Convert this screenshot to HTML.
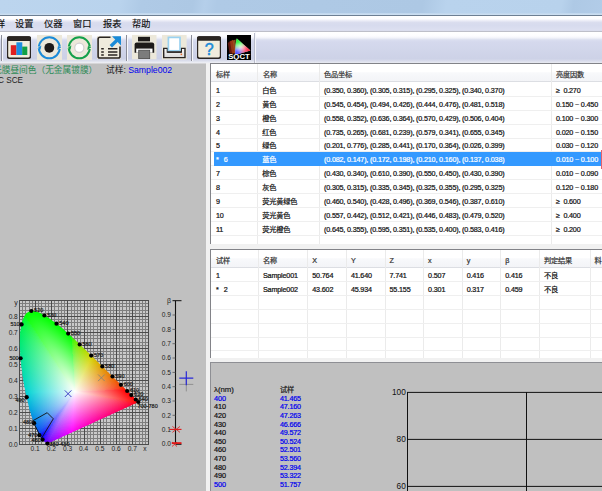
<!DOCTYPE html>
<html><head><meta charset="utf-8"><title>SQCT</title>
<style>
*{margin:0;padding:0;box-sizing:border-box}
html,body{width:602px;height:491px;overflow:hidden;background:#c0c0c0}
body{position:relative;font-family:"Liberation Sans","Noto Sans CJK SC",sans-serif;font-size:9px;color:#111;line-height:1}
.abs{position:absolute}
#title{left:0;top:0;width:602px;height:15px;background:linear-gradient(100deg,#bcd5ee 0%,#b9d3ed 20%,#afcae6 23.5%,#adc8e4 32%,#b5cfea 34%,#afcae6 36%,#adc8e4 70%,#b9d3ed 74%,#b8d2ec 93%,#aec9e5 95%,#b2cce8 100%)}
#title:after{content:"";position:absolute;left:0;right:0;top:13px;height:2px;background:linear-gradient(#bdd5ed,#cfe0f2)}
#edge{left:0;top:15px;width:602px;height:1px;background:#6d7f93}
#menu{left:0;top:16px;width:602px;height:16px;background:linear-gradient(#ffffff 0%,#fdfdff 18%,#e6e8f4 32%,#d9dcee 42%,#d7dbee 60%,#dde0f1 90%,#bdbec8 97%,#bdbec8 100%)}
#menu span{position:absolute;top:2px;-webkit-text-stroke:0.15px currentColor;font-size:9.2px;line-height:12px;color:#111;white-space:nowrap}
#tool{left:0;top:32px;width:602px;height:31px;background:linear-gradient(#ffffff 0%,#fcfcff 13%,#f2f3fa 19%,#dbdff0 25%,#d5d9ed 32%,#cdd2e7 86%,#d8dbeb 93%,#e8eaf1 100%)}
#toolL{left:0;top:32px;width:256px;height:31px;background:linear-gradient(#ffffff 0%,#fbfbfe 13%,#f0f1f9 19%,#d9ddef 25%,#d3d7ec 32%,#cbd0e6 86%,#dcdfec 93%,#f0f1f6 100%);border-right:1px solid #f4f5fb}
#toolL:after{content:"";position:absolute;right:0;top:1px;bottom:0;width:1px;background:#b9bccb}
.sep{width:1px;background:#8a8c98;top:35px;height:26px}
.sep:after{content:"";position:absolute;left:1px;top:0;width:1px;height:100%;background:#f7f8fc}
.ico{top:36px;width:24px;height:24px}
#left{left:0;top:63px;width:206px;height:428px;background:#c0c0c0}
#gap{left:206px;top:63px;width:396px;height:428px;background:#f1f1f1}
.tbl{background:#fff;border-top:1px solid #828388;border-left:1px solid #828388;overflow:hidden}
.tbl .hd{position:absolute;left:0;right:0;top:0;height:18px;background:linear-gradient(#ffffff 0%,#ffffff 45%,#f8f9fb 52%,#f3f4f7 100%);border-bottom:1px solid #dcdee3}
.tbl .r{position:absolute;left:3px;right:0;height:14px;border-bottom:1px solid #efefef}
.tbl .r:before{content:"";position:absolute;left:-3px;width:3px;bottom:-1px;height:1px;background:#efefef}
.tbl .r.sel{background:#3399ff;color:#fff;border-bottom-color:#3399ff}
.tbl .c{position:absolute;top:0;height:100%;white-space:nowrap;font-size:7.2px;line-height:15.4px;padding-left:2px;letter-spacing:-0.17px;-webkit-text-stroke:0.22px currentColor}
.tbl .hd .c{line-height:21px;color:#333}
.vl{position:absolute;top:0;bottom:0;width:1px;background:#ebebeb}
.vh{position:absolute;top:0;height:18px;width:1px;background:#dcdde2}
#bot{left:210px;top:362px;width:392px;height:129px;background:#c0c0c0;border-top:1px solid #8e8f94;border-left:1px solid #8e8f94}
.sp{position:absolute;font-size:7.2px;line-height:8.63px;white-space:nowrap;letter-spacing:-0.2px;-webkit-text-stroke:0.22px currentColor}
.sp.w{letter-spacing:0;font-size:7.3px}
.b{color:#0000ee}
</style></head><body>
<div id="title" class="abs"></div>
<div id="edge" class="abs"></div>
<div id="menu" class="abs">
<span style="left:-4px">样</span><span style="left:15px">设置</span><span style="left:44px">仪器</span><span style="left:73px">窗口</span><span style="left:103px">报表</span><span style="left:132px">帮助</span>
</div>
<div id="tool" class="abs"></div>
<div id="toolL" class="abs"></div>
<div class="abs sep" style="left:1px"></div>
<div class="abs sep" style="left:126px"></div>
<div class="abs sep" style="left:191px"></div>

<svg class="abs ico" style="left:7px" viewBox="0 0 24 24"><rect x="0.400" y="1" width="23.200" height="21.200" rx="2.200" fill="#f1ecdd" stroke="#2a2522" stroke-width="1.600"/><path d="M0.400 4.300 V3 Q0.400 1 2.400 1 H21.600 Q23.600 1 23.600 3 V4.300Z" fill="#2a2522" stroke="#2a2522" stroke-width="1.600"/><rect x="3.800" y="9.200" width="5.700" height="9.800" fill="#e02020"/><rect x="9.400" y="6.300" width="5.900" height="12.700" fill="#1c8ee2"/><rect x="15.200" y="10.600" width="5.100" height="8.400" fill="#10a048"/></svg>
<svg class="abs" style="left:37px;top:35px;width:25px;height:25px" viewBox="0 0 25 25"><rect width="25" height="25" fill="#ece8da"/><circle cx="12.300" cy="12.800" r="10.500" fill="none" stroke="#1b8bd8" stroke-width="2"/><path d="M0 11.600h3.400v2.400h-3.400zM21.200 11.600h3.800v2.400h-3.800z" fill="#ece8da"/><path d="M0.300 13.300 L4.400 10.600 L3.600 14.600Z M24.300 12.300 L20.200 15 L21 11Z" fill="#1b8bd8"/><circle cx="12.300" cy="12.800" r="4.900" fill="#1d1a19"/></svg>
<svg class="abs" style="left:67px;top:35px;width:25px;height:25px" viewBox="0 0 25 25"><rect width="25" height="25" fill="#ece8da"/><circle cx="12.300" cy="12.800" r="10.500" fill="none" stroke="#14a04a" stroke-width="2"/><path d="M0 11.600h3.400v2.400h-3.400zM21.200 11.600h3.800v2.400h-3.800z" fill="#ece8da"/><path d="M0.300 13.300 L4.400 10.600 L3.600 14.600Z M24.300 12.300 L20.200 15 L21 11Z" fill="#14a04a"/><circle cx="12.300" cy="12.800" r="4.600" fill="#fff" stroke="#d2d2d2" stroke-width="1.300"/></svg>
<svg class="abs ico" style="left:97px" viewBox="0 0 24 24"><rect x="0" y="0" width="24" height="23" fill="#ece8da"/><path d="M13.500 1.300 H2.900 Q1.100 1.300 1.100 3.100 V20.200 Q1.100 22 2.900 22 H21.200 Q23 22 23 20.200 V10.500" fill="#efebdd" stroke="#2a2522" stroke-width="1.600"/><path d="M13.800 10.300 L20 4.200" stroke="#1b8bd8" stroke-width="3.300"/><path d="M15 0.200 H24 V9.400 Z" fill="#1b8bd8"/><path d="M4.200 12.800h2.600M11 12.800h9.400M4.200 15.900h2.600M11 15.900h9.400M4.200 19h2.600M11 19h9.400" stroke="#2a2522" stroke-width="1.500"/></svg>
<svg class="abs" style="left:132px;top:35px;width:25px;height:25px" viewBox="0 0 25 25"><rect width="24.500" height="24.300" fill="#ece8da"/><rect x="6" y="1.800" width="12" height="4.600" fill="#1d1a19"/><path d="M2.600 9.600 Q2.600 7.600 4.600 7.600 H20.200 Q22.200 7.600 22.200 9.600 V17.700 H2.600Z" fill="#1d1a19"/><rect x="4.200" y="13.600" width="16.300" height="4.100" fill="#fff"/><rect x="6.700" y="15.200" width="11" height="8.400" fill="#7c7c7c" stroke="#4a4a4a" stroke-width="0.800"/></svg>
<svg class="abs" style="left:162px;top:35px;width:25px;height:25px" viewBox="0 0 25 25"><defs><linearGradient id="tr" x1="0" y1="0" x2="0" y2="1"><stop offset="0" stop-color="#fafafa"/><stop offset="1" stop-color="#d9d9d9"/></linearGradient></defs><rect width="24.600" height="24.500" fill="#ece8da"/><path d="M1.700 13.400 H5.400 V17 H19.300 V13.400 H23 V22.600 H1.700Z" fill="url(#tr)" stroke="#2a2522" stroke-width="1.400"/><rect x="6.400" y="2.400" width="11.600" height="13.400" fill="#fff" stroke="#9ad2f0" stroke-width="1.700"/><path d="M5.400 17 H19.300" stroke="#2a2522" stroke-width="1.400"/><rect x="18.600" y="18.600" width="1.500" height="1.500" fill="#e86a28"/></svg>
<svg class="abs ico" style="left:197px" viewBox="0 0 24 24"><rect x="0.400" y="1" width="23.200" height="21.200" rx="2.200" fill="#f1ecdd" stroke="#2a2522" stroke-width="1.600"/><path d="M0.400 4 V3 Q0.400 1 2.400 1 H21.600 Q23.600 1 23.600 3 V4Z" fill="#2a2522" stroke="#2a2522" stroke-width="1.600"/><text x="12.200" y="19.300" text-anchor="middle" font-family="Liberation Sans, sans-serif" font-size="16" fill="#1b8bd8" stroke="#1b8bd8" stroke-width="0.500">?</text></svg>
<svg class="abs" style="left:227px;top:35px;width:24px;height:25px" viewBox="0 0 24 25"><rect width="24" height="25" fill="#000"/><defs><linearGradient id="sqg" gradientUnits="userSpaceOnUse" x1="10" y1="3.500" x2="14.500" y2="17"><stop offset="0" stop-color="#00e818"/><stop offset="0.300" stop-color="#20f030" stop-opacity="0.800"/><stop offset="0.750" stop-color="#60ff60" stop-opacity="0"/></linearGradient><linearGradient id="sqr" gradientUnits="userSpaceOnUse" x1="23.400" y1="15.600" x2="9" y2="12"><stop offset="0" stop-color="#ff1028"/><stop offset="0.300" stop-color="#ff3050" stop-opacity="0.800"/><stop offset="0.750" stop-color="#ff6080" stop-opacity="0"/></linearGradient><linearGradient id="sqb" gradientUnits="userSpaceOnUse" x1="8.200" y1="20" x2="15" y2="8"><stop offset="0" stop-color="#2828ff"/><stop offset="0.300" stop-color="#5050ff" stop-opacity="0.800"/><stop offset="0.750" stop-color="#8080ff" stop-opacity="0"/></linearGradient></defs><path d="M0.800 8 L3.600 5.500 L6 18.500 L2.600 18.500Z" fill="#64180f"/><path d="M3 6.500 L6 4.800 L8 18.500 L5 18.500Z" fill="#963416"/><path d="M5.600 5.500 L8.600 4.500 L9 18.500 L7.600 18.500Z" fill="#b86028" fill-opacity="0.750"/><path d="M9.800 3.400 Q8 10 8.200 19.900 L23.400 15.600 Z" fill="#fff"/><path d="M9.800 3.400 Q8 10 8.200 19.900 L23.400 15.600 Z" fill="url(#sqb)"/><path d="M9.800 3.400 Q8 10 8.200 19.900 L23.400 15.600 Z" fill="url(#sqr)"/><path d="M9.800 3.400 Q8 10 8.200 19.900 L23.400 15.600 Z" fill="url(#sqg)"/><rect x="0" y="19" width="24" height="6" fill="#000" fill-opacity="0.850"/><text x="12" y="23.600" text-anchor="middle" font-family="Liberation Sans, sans-serif" font-weight="bold" font-size="6.600" fill="#fff" textLength="21.600" lengthAdjust="spacingAndGlyphs">SQCT</text></svg>

<div id="left" class="abs"></div><div id="gap" class="abs"></div>
<div class="abs" style="left:0;top:63px;width:206px;height:1px;background:#d6d6d8"></div>
<div class="abs" style="left:-7px;top:65px;font-size:8.7px;line-height:11px;color:#2e8b57;white-space:nowrap;letter-spacing:0px">光膜昼间色（无金属镀膜）</div>
<div class="abs" style="left:106px;top:65px;font-size:8.7px;line-height:11px;white-space:nowrap;color:#222">试样: <span class="b">Sample002</span></div>
<div class="abs" style="left:-2px;top:75px;font-size:8.2px;line-height:11px;white-space:nowrap;color:#222">C SCE</div>
<div class="abs" id="cie" style="left:0px;top:290px;width:206px;height:165px">
<svg class="abs" style="left:0;top:0" width="206" height="165" viewBox="0 0 206 165" shape-rendering="crispEdges"><rect x="19.0" y="10.0" width="130.0" height="145.0" fill="#c9c9c9"/><path d="M22.5 10.0V155.0M25.5 10.0V155.0M29.5 10.0V155.0M32.5 10.0V155.0M38.5 10.0V155.0M41.5 10.0V155.0M45.5 10.0V155.0M48.5 10.0V155.0M54.5 10.0V155.0M58.5 10.0V155.0M61.5 10.0V155.0M64.5 10.0V155.0M71.5 10.0V155.0M74.5 10.0V155.0M77.5 10.0V155.0M80.5 10.0V155.0M87.5 10.0V155.0M90.5 10.0V155.0M93.5 10.0V155.0M97.5 10.0V155.0M103.5 10.0V155.0M106.5 10.0V155.0M110.5 10.0V155.0M113.5 10.0V155.0M119.5 10.0V155.0M122.5 10.0V155.0M126.5 10.0V155.0M129.5 10.0V155.0M135.5 10.0V155.0M139.5 10.0V155.0M142.5 10.0V155.0M145.5 10.0V155.0M19.0 151.5H149.0M19.0 148.5H149.0M19.0 144.5H149.0M19.0 141.5H149.0M19.0 135.5H149.0M19.0 132.5H149.0M19.0 128.5H149.0M19.0 125.5H149.0M19.0 119.5H149.0M19.0 116.5H149.0M19.0 112.5H149.0M19.0 109.5H149.0M19.0 103.5H149.0M19.0 100.5H149.0M19.0 96.5H149.0M19.0 93.5H149.0M19.0 87.5H149.0M19.0 84.5H149.0M19.0 80.5H149.0M19.0 77.5H149.0M19.0 71.5H149.0M19.0 68.5H149.0M19.0 64.5H149.0M19.0 61.5H149.0M19.0 55.5H149.0M19.0 52.5H149.0M19.0 48.5H149.0M19.0 45.5H149.0M19.0 39.5H149.0M19.0 36.5H149.0M19.0 32.5H149.0M19.0 29.5H149.0M19.0 23.5H149.0M19.0 20.5H149.0M19.0 16.5H149.0M19.0 13.5H149.0" stroke="#7e7e7e" stroke-width="1" fill="none"/><path d="M19.5 10.0V155.0M35.5 10.0V155.0M51.5 10.0V155.0M67.5 10.0V155.0M84.5 10.0V155.0M100.5 10.0V155.0M116.5 10.0V155.0M132.5 10.0V155.0M148.5 10.0V155.0M19.0 154.5H149.0M19.0 138.5H149.0M19.0 122.5H149.0M19.0 106.5H149.0M19.0 90.5H149.0M19.0 74.5H149.0M19.0 58.5H149.0M19.0 42.5H149.0M19.0 26.5H149.0M19.0 10.5H149.0" stroke="#4c4c4c" stroke-width="1" fill="none"/></svg>
<svg class="abs" style="left:0;top:0" width="206" height="165" viewBox="0 0 206 165"><defs><clipPath id="lc"><polygon points="47.50,153.60 47.50,153.60 47.49,153.61 47.47,153.61 47.46,153.62 47.44,153.62 47.42,153.63 47.40,153.63 47.37,153.63 47.35,153.63 47.31,153.63 47.28,153.63 47.24,153.63 47.20,153.62 47.15,153.61 47.11,153.60 47.07,153.58 47.02,153.56 46.98,153.54 46.94,153.51 46.89,153.48 46.84,153.44 46.79,153.40 46.73,153.35 46.66,153.30 46.59,153.24 46.51,153.17 46.44,153.10 46.35,153.03 46.26,152.94 46.16,152.86 46.05,152.76 45.93,152.66 45.81,152.55 45.67,152.44 45.53,152.32 45.38,152.19 45.22,152.06 45.05,151.91 44.87,151.75 44.67,151.57 44.45,151.37 44.20,151.14 43.93,150.90 43.66,150.64 43.38,150.38 43.11,150.13 42.86,149.88 42.63,149.65 42.43,149.44 42.25,149.25 42.08,149.07 41.93,148.89 41.77,148.71 41.61,148.50 41.44,148.28 41.25,148.02 41.05,147.73 40.83,147.43 40.61,147.11 40.39,146.77 40.15,146.41 39.91,146.02 39.66,145.60 39.40,145.15 39.14,144.68 38.87,144.18 38.59,143.66 38.30,143.11 38.00,142.53 37.70,141.90 37.38,141.23 37.06,140.51 36.72,139.75 36.37,138.95 36.02,138.11 35.65,137.23 35.28,136.30 34.90,135.32 34.50,134.27 34.09,133.17 33.67,132.01 33.23,130.80 32.77,129.53 32.31,128.21 31.84,126.83 31.37,125.39 30.90,123.87 30.43,122.29 29.96,120.63 29.49,118.90 29.01,117.10 28.54,115.24 28.06,113.32 27.59,111.33 27.12,109.29 26.65,107.20 26.19,105.03 25.73,102.79 25.26,100.47 24.80,98.10 24.35,95.69 23.91,93.25 23.50,90.81 23.11,88.37 22.73,85.91 22.37,83.40 22.02,80.85 21.69,78.30 21.38,75.75 21.10,73.21 20.85,70.71 20.63,68.26 20.44,65.83 20.27,63.42 20.13,61.02 20.02,58.64 19.95,56.30 19.90,54.02 19.90,51.79 19.93,49.63 20.01,47.53 20.12,45.45 20.26,43.43 20.45,41.45 20.66,39.55 20.92,37.73 21.22,36.00 21.55,34.37 21.93,32.83 22.35,31.37 22.82,29.99 23.32,28.69 23.85,27.48 24.41,26.38 25.00,25.37 25.60,24.48 26.23,23.71 26.90,23.05 27.60,22.50 28.32,22.04 29.06,21.67 29.81,21.38 30.57,21.16 31.34,20.99 32.11,20.91 32.90,20.92 33.70,21.01 34.52,21.18 35.34,21.40 36.16,21.65 36.98,21.93 37.80,22.21 38.62,22.51 39.44,22.86 40.27,23.25 41.10,23.66 41.92,24.10 42.75,24.55 43.56,25.01 44.36,25.46 45.15,25.91 45.94,26.37 46.72,26.85 47.49,27.33 48.26,27.82 49.03,28.32 49.79,28.83 50.55,29.34 51.31,29.86 52.06,30.39 52.80,30.93 53.54,31.47 54.28,32.02 55.02,32.58 55.76,33.14 56.50,33.71 57.23,34.29 57.97,34.87 58.70,35.47 59.44,36.06 60.17,36.67 60.90,37.28 61.63,37.89 62.36,38.51 63.05,39.10 63.68,39.64 64.29,40.16 64.90,40.69 65.56,41.28 66.30,41.94 67.16,42.72 68.16,43.63 69.33,44.71 70.65,45.93 72.08,47.27 73.59,48.68 75.15,50.14 76.72,51.61 78.26,53.07 79.74,54.48 81.19,55.86 82.63,57.26 84.08,58.66 85.52,60.06 86.97,61.47 88.40,62.87 89.83,64.26 91.24,65.65 92.66,67.03 94.07,68.41 95.47,69.79 96.87,71.17 98.26,72.54 99.63,73.89 100.99,75.23 102.32,76.54 103.65,77.85 104.97,79.14 106.28,80.43 107.57,81.70 108.84,82.95 110.09,84.17 111.30,85.37 112.48,86.53 113.63,87.66 114.75,88.77 115.85,89.85 116.92,90.90 117.96,91.93 118.97,92.92 119.94,93.88 120.87,94.80 121.77,95.69 122.64,96.54 123.48,97.35 124.28,98.14 125.05,98.89 125.79,99.61 126.49,100.30 127.16,100.96 127.79,101.58 128.38,102.17 128.94,102.72 129.47,103.24 129.97,103.73 130.44,104.20 130.89,104.64 131.32,105.07 131.73,105.48 132.11,105.85 132.47,106.20 132.80,106.52 133.11,106.83 133.41,107.12 133.70,107.40 133.98,107.68 134.25,107.95 134.51,108.20 134.75,108.44 134.97,108.66 135.19,108.88 135.40,109.08 135.59,109.27 135.78,109.46 135.95,109.62 136.10,109.77 136.24,109.91 136.37,110.03 136.50,110.15 136.62,110.28 136.76,110.41 136.91,110.56 137.08,110.73 137.28,110.92 137.48,111.12 137.69,111.32 137.88,111.52 138.06,111.70 138.21,111.84 138.32,111.95"/></clipPath><linearGradient id="w0" gradientUnits="userSpaceOnUse" x1="75.03" y1="101.76" x2="57.33" y2="156.76"><stop offset="0.0" stop-color="#ffffff"/><stop offset="0.1" stop-color="#f1e6ff"/><stop offset="0.2" stop-color="#e2ccff"/><stop offset="0.4" stop-color="#c599ff"/><stop offset="0.6" stop-color="#a866ff"/><stop offset="0.8" stop-color="#8b33ff"/><stop offset="1.0" stop-color="#6e00ff"/></linearGradient><linearGradient id="w1" gradientUnits="userSpaceOnUse" x1="75.03" y1="101.76" x2="37.24" y2="145.07"><stop offset="0.0" stop-color="#ffffff"/><stop offset="0.1" stop-color="#f0e6ff"/><stop offset="0.2" stop-color="#e0ccff"/><stop offset="0.4" stop-color="#c299ff"/><stop offset="0.6" stop-color="#a366ff"/><stop offset="0.8" stop-color="#8533ff"/><stop offset="1.0" stop-color="#6600ff"/></linearGradient><linearGradient id="w2" gradientUnits="userSpaceOnUse" x1="75.03" y1="101.76" x2="37.72" y2="145.69"><stop offset="0.0" stop-color="#ffffff"/><stop offset="0.1" stop-color="#efe6ff"/><stop offset="0.2" stop-color="#dfccff"/><stop offset="0.4" stop-color="#bf99ff"/><stop offset="0.6" stop-color="#9e66ff"/><stop offset="0.8" stop-color="#7e33ff"/><stop offset="1.0" stop-color="#5e00ff"/></linearGradient><linearGradient id="w3" gradientUnits="userSpaceOnUse" x1="75.03" y1="101.76" x2="37.20" y2="145.04"><stop offset="0.0" stop-color="#ffffff"/><stop offset="0.1" stop-color="#eee6ff"/><stop offset="0.2" stop-color="#ddccff"/><stop offset="0.4" stop-color="#bb99ff"/><stop offset="0.6" stop-color="#9966ff"/><stop offset="0.8" stop-color="#7733ff"/><stop offset="1.0" stop-color="#5500ff"/></linearGradient><linearGradient id="w4" gradientUnits="userSpaceOnUse" x1="75.03" y1="101.76" x2="36.47" y2="144.10"><stop offset="0.0" stop-color="#ffffff"/><stop offset="0.1" stop-color="#ede6ff"/><stop offset="0.2" stop-color="#dbccff"/><stop offset="0.4" stop-color="#b699ff"/><stop offset="0.6" stop-color="#9266ff"/><stop offset="0.8" stop-color="#6d33ff"/><stop offset="1.0" stop-color="#4900ff"/></linearGradient><linearGradient id="w5" gradientUnits="userSpaceOnUse" x1="75.03" y1="101.76" x2="35.99" y2="143.47"><stop offset="0.0" stop-color="#ffffff"/><stop offset="0.1" stop-color="#ebe6ff"/><stop offset="0.2" stop-color="#d7ccff"/><stop offset="0.4" stop-color="#b099ff"/><stop offset="0.6" stop-color="#8866ff"/><stop offset="0.8" stop-color="#6033ff"/><stop offset="1.0" stop-color="#3800ff"/></linearGradient><linearGradient id="w6" gradientUnits="userSpaceOnUse" x1="75.03" y1="101.76" x2="34.74" y2="141.69"><stop offset="0.0" stop-color="#ffffff"/><stop offset="0.1" stop-color="#e9e6ff"/><stop offset="0.2" stop-color="#d3ccff"/><stop offset="0.4" stop-color="#a699ff"/><stop offset="0.6" stop-color="#7a66ff"/><stop offset="0.8" stop-color="#4d33ff"/><stop offset="1.0" stop-color="#2100ff"/></linearGradient><linearGradient id="w7" gradientUnits="userSpaceOnUse" x1="75.03" y1="101.76" x2="33.21" y2="139.11"><stop offset="0.0" stop-color="#ffffff"/><stop offset="0.1" stop-color="#e6e6ff"/><stop offset="0.2" stop-color="#ccccff"/><stop offset="0.4" stop-color="#9999ff"/><stop offset="0.6" stop-color="#6666ff"/><stop offset="0.8" stop-color="#3333ff"/><stop offset="1.0" stop-color="#0000ff"/></linearGradient><linearGradient id="w8" gradientUnits="userSpaceOnUse" x1="75.03" y1="101.76" x2="31.29" y2="134.84"><stop offset="0.0" stop-color="#ffffff"/><stop offset="0.1" stop-color="#e6e6ff"/><stop offset="0.2" stop-color="#ccccff"/><stop offset="0.4" stop-color="#9999ff"/><stop offset="0.6" stop-color="#6666ff"/><stop offset="0.8" stop-color="#3333ff"/><stop offset="1.0" stop-color="#0000ff"/></linearGradient><linearGradient id="w9" gradientUnits="userSpaceOnUse" x1="75.03" y1="101.76" x2="30.65" y2="132.92"><stop offset="0.0" stop-color="#ffffff"/><stop offset="0.1" stop-color="#e6e6ff"/><stop offset="0.2" stop-color="#ccccff"/><stop offset="0.4" stop-color="#9999ff"/><stop offset="0.6" stop-color="#6666ff"/><stop offset="0.8" stop-color="#3333ff"/><stop offset="1.0" stop-color="#0000ff"/></linearGradient><linearGradient id="w10" gradientUnits="userSpaceOnUse" x1="75.03" y1="101.76" x2="30.19" y2="131.27"><stop offset="0.0" stop-color="#ffffff"/><stop offset="0.1" stop-color="#e6e6ff"/><stop offset="0.2" stop-color="#ccccff"/><stop offset="0.4" stop-color="#9999ff"/><stop offset="0.6" stop-color="#6666ff"/><stop offset="0.8" stop-color="#3333ff"/><stop offset="1.0" stop-color="#0000ff"/></linearGradient><linearGradient id="w11" gradientUnits="userSpaceOnUse" x1="75.03" y1="101.76" x2="29.76" y2="129.36"><stop offset="0.0" stop-color="#ffffff"/><stop offset="0.1" stop-color="#e6e8ff"/><stop offset="0.2" stop-color="#ccd1fe"/><stop offset="0.4" stop-color="#99a3fd"/><stop offset="0.6" stop-color="#6676fc"/><stop offset="0.8" stop-color="#3348fb"/><stop offset="1.0" stop-color="#001afa"/></linearGradient><linearGradient id="w12" gradientUnits="userSpaceOnUse" x1="75.03" y1="101.76" x2="29.44" y2="127.48"><stop offset="0.0" stop-color="#ffffff"/><stop offset="0.1" stop-color="#e6eafe"/><stop offset="0.2" stop-color="#ccd5fd"/><stop offset="0.4" stop-color="#99aafc"/><stop offset="0.6" stop-color="#6680fa"/><stop offset="0.8" stop-color="#3356f9"/><stop offset="1.0" stop-color="#002bf7"/></linearGradient><linearGradient id="w13" gradientUnits="userSpaceOnUse" x1="75.03" y1="101.76" x2="29.32" y2="126.61"><stop offset="0.0" stop-color="#ffffff"/><stop offset="0.1" stop-color="#e6ebfe"/><stop offset="0.2" stop-color="#ccd7fd"/><stop offset="0.4" stop-color="#99affb"/><stop offset="0.6" stop-color="#6688f9"/><stop offset="0.8" stop-color="#3360f7"/><stop offset="1.0" stop-color="#0038f5"/></linearGradient><linearGradient id="w14" gradientUnits="userSpaceOnUse" x1="75.03" y1="101.76" x2="29.17" y2="125.40"><stop offset="0.0" stop-color="#ffffff"/><stop offset="0.1" stop-color="#e6ecfe"/><stop offset="0.2" stop-color="#ccd9fd"/><stop offset="0.4" stop-color="#99b4fa"/><stop offset="0.6" stop-color="#668ef8"/><stop offset="0.8" stop-color="#3369f5"/><stop offset="1.0" stop-color="#0043f3"/></linearGradient><linearGradient id="w15" gradientUnits="userSpaceOnUse" x1="75.03" y1="101.76" x2="29.03" y2="123.84"><stop offset="0.0" stop-color="#ffffff"/><stop offset="0.1" stop-color="#e6edfe"/><stop offset="0.2" stop-color="#ccdbfc"/><stop offset="0.4" stop-color="#99b8f9"/><stop offset="0.6" stop-color="#6694f7"/><stop offset="0.8" stop-color="#3371f4"/><stop offset="1.0" stop-color="#004df1"/></linearGradient><linearGradient id="w16" gradientUnits="userSpaceOnUse" x1="75.03" y1="101.76" x2="28.94" y2="122.32"><stop offset="0.0" stop-color="#ffffff"/><stop offset="0.1" stop-color="#e6eefd"/><stop offset="0.2" stop-color="#ccddfc"/><stop offset="0.4" stop-color="#99bcf9"/><stop offset="0.6" stop-color="#669af6"/><stop offset="0.8" stop-color="#3378f2"/><stop offset="1.0" stop-color="#0057ef"/></linearGradient><linearGradient id="w17" gradientUnits="userSpaceOnUse" x1="75.03" y1="101.76" x2="28.91" y2="121.69"><stop offset="0.0" stop-color="#ffffff"/><stop offset="0.1" stop-color="#e6effd"/><stop offset="0.2" stop-color="#ccdffc"/><stop offset="0.4" stop-color="#99bef8"/><stop offset="0.6" stop-color="#669ef5"/><stop offset="0.8" stop-color="#337ef1"/><stop offset="1.0" stop-color="#005eee"/></linearGradient><linearGradient id="w18" gradientUnits="userSpaceOnUse" x1="75.03" y1="101.76" x2="28.90" y2="121.28"><stop offset="0.0" stop-color="#ffffff"/><stop offset="0.1" stop-color="#e6effd"/><stop offset="0.2" stop-color="#cce0fb"/><stop offset="0.4" stop-color="#99c0f8"/><stop offset="0.6" stop-color="#66a1f4"/><stop offset="0.8" stop-color="#3381f1"/><stop offset="1.0" stop-color="#0062ed"/></linearGradient><linearGradient id="w19" gradientUnits="userSpaceOnUse" x1="75.03" y1="101.76" x2="28.88" y2="120.83"><stop offset="0.0" stop-color="#ffffff"/><stop offset="0.1" stop-color="#e6f0fd"/><stop offset="0.2" stop-color="#cce1fb"/><stop offset="0.4" stop-color="#99c2f7"/><stop offset="0.6" stop-color="#66a4f4"/><stop offset="0.8" stop-color="#3385f0"/><stop offset="1.0" stop-color="#0067ec"/></linearGradient><linearGradient id="w20" gradientUnits="userSpaceOnUse" x1="75.03" y1="101.76" x2="28.86" y2="120.35"><stop offset="0.0" stop-color="#ffffff"/><stop offset="0.1" stop-color="#e6f0fd"/><stop offset="0.2" stop-color="#cce1fb"/><stop offset="0.4" stop-color="#99c4f7"/><stop offset="0.6" stop-color="#66a6f3"/><stop offset="0.8" stop-color="#3389ef"/><stop offset="1.0" stop-color="#006beb"/></linearGradient><linearGradient id="w21" gradientUnits="userSpaceOnUse" x1="75.03" y1="101.76" x2="28.84" y2="119.85"><stop offset="0.0" stop-color="#ffffff"/><stop offset="0.1" stop-color="#e6f1fd"/><stop offset="0.2" stop-color="#cce2fb"/><stop offset="0.4" stop-color="#99c6f7"/><stop offset="0.6" stop-color="#66a9f3"/><stop offset="0.8" stop-color="#338cef"/><stop offset="1.0" stop-color="#006fea"/></linearGradient><linearGradient id="w22" gradientUnits="userSpaceOnUse" x1="75.03" y1="101.76" x2="28.82" y2="119.34"><stop offset="0.0" stop-color="#ffffff"/><stop offset="0.1" stop-color="#e6f1fd"/><stop offset="0.2" stop-color="#cce3fb"/><stop offset="0.4" stop-color="#99c7f6"/><stop offset="0.6" stop-color="#66acf2"/><stop offset="0.8" stop-color="#3390ee"/><stop offset="1.0" stop-color="#0074e9"/></linearGradient><linearGradient id="w23" gradientUnits="userSpaceOnUse" x1="75.03" y1="101.76" x2="28.80" y2="118.82"><stop offset="0.0" stop-color="#ffffff"/><stop offset="0.1" stop-color="#e6f2fd"/><stop offset="0.2" stop-color="#cce4fb"/><stop offset="0.4" stop-color="#99c9f6"/><stop offset="0.6" stop-color="#66aef2"/><stop offset="0.8" stop-color="#3393ed"/><stop offset="1.0" stop-color="#0078e9"/></linearGradient><linearGradient id="w24" gradientUnits="userSpaceOnUse" x1="75.03" y1="101.76" x2="28.79" y2="118.61"><stop offset="0.0" stop-color="#ffffff"/><stop offset="0.1" stop-color="#e6f2fd"/><stop offset="0.2" stop-color="#cce5fa"/><stop offset="0.4" stop-color="#99cbf6"/><stop offset="0.6" stop-color="#66b1f1"/><stop offset="0.8" stop-color="#3397ec"/><stop offset="1.0" stop-color="#007de8"/></linearGradient><linearGradient id="w25" gradientUnits="userSpaceOnUse" x1="75.03" y1="101.76" x2="28.78" y2="118.57"><stop offset="0.0" stop-color="#ffffff"/><stop offset="0.1" stop-color="#e6f2fd"/><stop offset="0.2" stop-color="#cce6fa"/><stop offset="0.4" stop-color="#99cdf5"/><stop offset="0.6" stop-color="#66b4f0"/><stop offset="0.8" stop-color="#339bec"/><stop offset="1.0" stop-color="#0081e7"/></linearGradient><linearGradient id="w26" gradientUnits="userSpaceOnUse" x1="75.03" y1="101.76" x2="28.76" y2="118.36"><stop offset="0.0" stop-color="#ffffff"/><stop offset="0.1" stop-color="#e6f3fc"/><stop offset="0.2" stop-color="#cce7fa"/><stop offset="0.4" stop-color="#99cff5"/><stop offset="0.6" stop-color="#66b6f0"/><stop offset="0.8" stop-color="#339eeb"/><stop offset="1.0" stop-color="#0086e6"/></linearGradient><linearGradient id="w27" gradientUnits="userSpaceOnUse" x1="75.03" y1="101.76" x2="28.73" y2="118.00"><stop offset="0.0" stop-color="#ffffff"/><stop offset="0.1" stop-color="#e6f3fc"/><stop offset="0.2" stop-color="#cce8fa"/><stop offset="0.4" stop-color="#99d0f5"/><stop offset="0.6" stop-color="#66b9ef"/><stop offset="0.8" stop-color="#33a2ea"/><stop offset="1.0" stop-color="#008be5"/></linearGradient><linearGradient id="w28" gradientUnits="userSpaceOnUse" x1="75.03" y1="101.76" x2="28.68" y2="117.52"><stop offset="0.0" stop-color="#ffffff"/><stop offset="0.1" stop-color="#e6f4fc"/><stop offset="0.2" stop-color="#cce9fa"/><stop offset="0.4" stop-color="#99d2f4"/><stop offset="0.6" stop-color="#66bcef"/><stop offset="0.8" stop-color="#33a5e9"/><stop offset="1.0" stop-color="#008fe4"/></linearGradient><linearGradient id="w29" gradientUnits="userSpaceOnUse" x1="75.03" y1="101.76" x2="28.61" y2="116.93"><stop offset="0.0" stop-color="#ffffff"/><stop offset="0.1" stop-color="#e6f4fc"/><stop offset="0.2" stop-color="#cceaf9"/><stop offset="0.4" stop-color="#99d4f4"/><stop offset="0.6" stop-color="#66bfee"/><stop offset="0.8" stop-color="#33a9e8"/><stop offset="1.0" stop-color="#0094e3"/></linearGradient><linearGradient id="w30" gradientUnits="userSpaceOnUse" x1="75.03" y1="101.76" x2="28.52" y2="116.26"><stop offset="0.0" stop-color="#ffffff"/><stop offset="0.1" stop-color="#e6f5fc"/><stop offset="0.2" stop-color="#cceaf9"/><stop offset="0.4" stop-color="#99d6f3"/><stop offset="0.6" stop-color="#66c1ed"/><stop offset="0.8" stop-color="#33ade8"/><stop offset="1.0" stop-color="#0098e2"/></linearGradient><linearGradient id="w31" gradientUnits="userSpaceOnUse" x1="75.03" y1="101.76" x2="28.43" y2="115.51"><stop offset="0.0" stop-color="#ffffff"/><stop offset="0.1" stop-color="#e6f5fc"/><stop offset="0.2" stop-color="#ccebf9"/><stop offset="0.4" stop-color="#99d7f3"/><stop offset="0.6" stop-color="#66c3ed"/><stop offset="0.8" stop-color="#33b0e7"/><stop offset="1.0" stop-color="#009ce1"/></linearGradient><linearGradient id="w32" gradientUnits="userSpaceOnUse" x1="75.03" y1="101.76" x2="28.43" y2="115.51"><stop offset="0.0" stop-color="#ffffff"/><stop offset="0.1" stop-color="#e6f5fc"/><stop offset="0.2" stop-color="#ccecf9"/><stop offset="0.4" stop-color="#99d8f3"/><stop offset="0.6" stop-color="#66c5ed"/><stop offset="0.8" stop-color="#33b1e7"/><stop offset="1.0" stop-color="#009ee0"/></linearGradient><linearGradient id="w33" gradientUnits="userSpaceOnUse" x1="75.03" y1="101.76" x2="28.35" y2="114.93"><stop offset="0.0" stop-color="#ffffff"/><stop offset="0.1" stop-color="#e6f6fc"/><stop offset="0.2" stop-color="#ccecf9"/><stop offset="0.4" stop-color="#99d9f3"/><stop offset="0.6" stop-color="#66c6ec"/><stop offset="0.8" stop-color="#33b3e6"/><stop offset="1.0" stop-color="#00a0e0"/></linearGradient><linearGradient id="w34" gradientUnits="userSpaceOnUse" x1="75.03" y1="101.76" x2="28.35" y2="114.93"><stop offset="0.0" stop-color="#ffffff"/><stop offset="0.1" stop-color="#e6f6fc"/><stop offset="0.2" stop-color="#ccedf9"/><stop offset="0.4" stop-color="#99daf2"/><stop offset="0.6" stop-color="#66c8ec"/><stop offset="0.8" stop-color="#33b5e6"/><stop offset="1.0" stop-color="#00a3df"/></linearGradient><linearGradient id="w35" gradientUnits="userSpaceOnUse" x1="75.03" y1="101.76" x2="28.30" y2="114.54"><stop offset="0.0" stop-color="#ffffff"/><stop offset="0.1" stop-color="#e6f6fc"/><stop offset="0.2" stop-color="#ccedf9"/><stop offset="0.4" stop-color="#99dbf2"/><stop offset="0.6" stop-color="#66c9ec"/><stop offset="0.8" stop-color="#33b7e5"/><stop offset="1.0" stop-color="#00a5df"/></linearGradient><linearGradient id="w36" gradientUnits="userSpaceOnUse" x1="75.03" y1="101.76" x2="28.30" y2="114.54"><stop offset="0.0" stop-color="#ffffff"/><stop offset="0.1" stop-color="#e6f6fc"/><stop offset="0.2" stop-color="#cceef8"/><stop offset="0.4" stop-color="#99dcf2"/><stop offset="0.6" stop-color="#66cbeb"/><stop offset="0.8" stop-color="#33b9e5"/><stop offset="1.0" stop-color="#00a8de"/></linearGradient><linearGradient id="w37" gradientUnits="userSpaceOnUse" x1="75.03" y1="101.76" x2="28.23" y2="114.16"><stop offset="0.0" stop-color="#ffffff"/><stop offset="0.1" stop-color="#e6f7fc"/><stop offset="0.2" stop-color="#cceef8"/><stop offset="0.4" stop-color="#99ddf2"/><stop offset="0.6" stop-color="#66cceb"/><stop offset="0.8" stop-color="#33bbe4"/><stop offset="1.0" stop-color="#00aade"/></linearGradient><linearGradient id="w38" gradientUnits="userSpaceOnUse" x1="75.03" y1="101.76" x2="28.23" y2="114.16"><stop offset="0.0" stop-color="#ffffff"/><stop offset="0.1" stop-color="#e6f7fc"/><stop offset="0.2" stop-color="#cceff8"/><stop offset="0.4" stop-color="#99def1"/><stop offset="0.6" stop-color="#66ceeb"/><stop offset="0.8" stop-color="#33bde4"/><stop offset="1.0" stop-color="#00addd"/></linearGradient><linearGradient id="w39" gradientUnits="userSpaceOnUse" x1="75.03" y1="101.76" x2="28.16" y2="113.77"><stop offset="0.0" stop-color="#ffffff"/><stop offset="0.1" stop-color="#e6f7fc"/><stop offset="0.2" stop-color="#cceff8"/><stop offset="0.4" stop-color="#99dff1"/><stop offset="0.6" stop-color="#66cfea"/><stop offset="0.8" stop-color="#33bfe3"/><stop offset="1.0" stop-color="#00afdd"/></linearGradient><linearGradient id="w40" gradientUnits="userSpaceOnUse" x1="75.03" y1="101.76" x2="28.16" y2="113.77"><stop offset="0.0" stop-color="#ffffff"/><stop offset="0.1" stop-color="#e6f7fc"/><stop offset="0.2" stop-color="#cceff8"/><stop offset="0.4" stop-color="#99e0f1"/><stop offset="0.6" stop-color="#66d0ea"/><stop offset="0.8" stop-color="#33c1e3"/><stop offset="1.0" stop-color="#00b1dc"/></linearGradient><linearGradient id="w41" gradientUnits="userSpaceOnUse" x1="75.03" y1="101.76" x2="28.08" y2="113.39"><stop offset="0.0" stop-color="#ffffff"/><stop offset="0.1" stop-color="#e6f7fb"/><stop offset="0.2" stop-color="#ccf0f8"/><stop offset="0.4" stop-color="#99e1f1"/><stop offset="0.6" stop-color="#66d2ea"/><stop offset="0.8" stop-color="#33c3e3"/><stop offset="1.0" stop-color="#00b4db"/></linearGradient><linearGradient id="w42" gradientUnits="userSpaceOnUse" x1="75.03" y1="101.76" x2="28.08" y2="113.39"><stop offset="0.0" stop-color="#ffffff"/><stop offset="0.1" stop-color="#e6f8fb"/><stop offset="0.2" stop-color="#ccf0f8"/><stop offset="0.4" stop-color="#99e2f1"/><stop offset="0.6" stop-color="#66d3e9"/><stop offset="0.8" stop-color="#33c5e2"/><stop offset="1.0" stop-color="#00b6db"/></linearGradient><linearGradient id="w43" gradientUnits="userSpaceOnUse" x1="75.03" y1="101.76" x2="27.98" y2="112.99"><stop offset="0.0" stop-color="#ffffff"/><stop offset="0.1" stop-color="#e6f8fb"/><stop offset="0.2" stop-color="#ccf1f8"/><stop offset="0.4" stop-color="#99e3f0"/><stop offset="0.6" stop-color="#66d5e9"/><stop offset="0.8" stop-color="#33c7e2"/><stop offset="1.0" stop-color="#00b9da"/></linearGradient><linearGradient id="w44" gradientUnits="userSpaceOnUse" x1="75.03" y1="101.76" x2="27.98" y2="112.99"><stop offset="0.0" stop-color="#ffffff"/><stop offset="0.1" stop-color="#e6f8fb"/><stop offset="0.2" stop-color="#ccf1f8"/><stop offset="0.4" stop-color="#99e4f0"/><stop offset="0.6" stop-color="#66d6e9"/><stop offset="0.8" stop-color="#33c9e1"/><stop offset="1.0" stop-color="#00bbda"/></linearGradient><linearGradient id="w45" gradientUnits="userSpaceOnUse" x1="75.03" y1="101.76" x2="27.87" y2="112.59"><stop offset="0.0" stop-color="#ffffff"/><stop offset="0.1" stop-color="#e6f8fb"/><stop offset="0.2" stop-color="#ccf2f7"/><stop offset="0.4" stop-color="#99e5f0"/><stop offset="0.6" stop-color="#66d8e8"/><stop offset="0.8" stop-color="#33cbe1"/><stop offset="1.0" stop-color="#00bed9"/></linearGradient><linearGradient id="w46" gradientUnits="userSpaceOnUse" x1="75.03" y1="101.76" x2="27.87" y2="112.59"><stop offset="0.0" stop-color="#ffffff"/><stop offset="0.1" stop-color="#e6f9fb"/><stop offset="0.2" stop-color="#ccf3f7"/><stop offset="0.4" stop-color="#99e6f0"/><stop offset="0.6" stop-color="#66dae8"/><stop offset="0.8" stop-color="#33cde0"/><stop offset="1.0" stop-color="#00c1d8"/></linearGradient><linearGradient id="w47" gradientUnits="userSpaceOnUse" x1="75.03" y1="101.76" x2="27.75" y2="112.18"><stop offset="0.0" stop-color="#ffffff"/><stop offset="0.1" stop-color="#e6f9fb"/><stop offset="0.2" stop-color="#ccf3f7"/><stop offset="0.4" stop-color="#99e7ef"/><stop offset="0.6" stop-color="#66dbe7"/><stop offset="0.8" stop-color="#33cfe0"/><stop offset="1.0" stop-color="#00c3d8"/></linearGradient><linearGradient id="w48" gradientUnits="userSpaceOnUse" x1="75.03" y1="101.76" x2="27.75" y2="112.18"><stop offset="0.0" stop-color="#ffffff"/><stop offset="0.1" stop-color="#e6f9fb"/><stop offset="0.2" stop-color="#ccf4f7"/><stop offset="0.4" stop-color="#99e8ef"/><stop offset="0.6" stop-color="#66dde7"/><stop offset="0.8" stop-color="#33d1df"/><stop offset="1.0" stop-color="#00c6d7"/></linearGradient><linearGradient id="w49" gradientUnits="userSpaceOnUse" x1="75.03" y1="101.76" x2="27.65" y2="111.86"><stop offset="0.0" stop-color="#ffffff"/><stop offset="0.1" stop-color="#e6fafb"/><stop offset="0.2" stop-color="#ccf4f7"/><stop offset="0.4" stop-color="#99e9ef"/><stop offset="0.6" stop-color="#66dee7"/><stop offset="0.8" stop-color="#33d3df"/><stop offset="1.0" stop-color="#00c8d7"/></linearGradient><linearGradient id="w50" gradientUnits="userSpaceOnUse" x1="75.03" y1="101.76" x2="27.65" y2="111.86"><stop offset="0.0" stop-color="#ffffff"/><stop offset="0.1" stop-color="#e6fafb"/><stop offset="0.2" stop-color="#ccf5f7"/><stop offset="0.4" stop-color="#99eaef"/><stop offset="0.6" stop-color="#66e0e6"/><stop offset="0.8" stop-color="#33d5de"/><stop offset="1.0" stop-color="#00cbd6"/></linearGradient><linearGradient id="w51" gradientUnits="userSpaceOnUse" x1="75.03" y1="101.76" x2="27.56" y2="111.60"><stop offset="0.0" stop-color="#ffffff"/><stop offset="0.1" stop-color="#e6fafb"/><stop offset="0.2" stop-color="#ccf5f7"/><stop offset="0.4" stop-color="#99ebee"/><stop offset="0.6" stop-color="#66e1e6"/><stop offset="0.8" stop-color="#33d7de"/><stop offset="1.0" stop-color="#00cdd5"/></linearGradient><linearGradient id="w52" gradientUnits="userSpaceOnUse" x1="75.03" y1="101.76" x2="27.56" y2="111.60"><stop offset="0.0" stop-color="#ffffff"/><stop offset="0.1" stop-color="#e6fafb"/><stop offset="0.2" stop-color="#ccf6f7"/><stop offset="0.4" stop-color="#99ecee"/><stop offset="0.6" stop-color="#66e3e6"/><stop offset="0.8" stop-color="#33dadd"/><stop offset="1.0" stop-color="#00d0d5"/></linearGradient><linearGradient id="w53" gradientUnits="userSpaceOnUse" x1="75.03" y1="101.76" x2="27.45" y2="111.33"><stop offset="0.0" stop-color="#ffffff"/><stop offset="0.1" stop-color="#e6fbfb"/><stop offset="0.2" stop-color="#ccf6f6"/><stop offset="0.4" stop-color="#99edee"/><stop offset="0.6" stop-color="#66e5e5"/><stop offset="0.8" stop-color="#33dcdc"/><stop offset="1.0" stop-color="#00d3d4"/></linearGradient><linearGradient id="w54" gradientUnits="userSpaceOnUse" x1="75.03" y1="101.76" x2="27.45" y2="111.33"><stop offset="0.0" stop-color="#ffffff"/><stop offset="0.1" stop-color="#e6fbfa"/><stop offset="0.2" stop-color="#ccf6f6"/><stop offset="0.4" stop-color="#99eeed"/><stop offset="0.6" stop-color="#66e5e4"/><stop offset="0.8" stop-color="#33dddb"/><stop offset="1.0" stop-color="#00d4d2"/></linearGradient><linearGradient id="w55" gradientUnits="userSpaceOnUse" x1="75.03" y1="101.76" x2="27.32" y2="111.04"><stop offset="0.0" stop-color="#ffffff"/><stop offset="0.1" stop-color="#e6fbfa"/><stop offset="0.2" stop-color="#ccf7f5"/><stop offset="0.4" stop-color="#99eeec"/><stop offset="0.6" stop-color="#66e6e2"/><stop offset="0.8" stop-color="#33ddd9"/><stop offset="1.0" stop-color="#00d5cf"/></linearGradient><linearGradient id="w56" gradientUnits="userSpaceOnUse" x1="75.03" y1="101.76" x2="27.32" y2="111.04"><stop offset="0.0" stop-color="#ffffff"/><stop offset="0.1" stop-color="#e6fbfa"/><stop offset="0.2" stop-color="#ccf7f5"/><stop offset="0.4" stop-color="#99eeeb"/><stop offset="0.6" stop-color="#66e6e1"/><stop offset="0.8" stop-color="#33ded6"/><stop offset="1.0" stop-color="#00d6cc"/></linearGradient><linearGradient id="w57" gradientUnits="userSpaceOnUse" x1="75.03" y1="101.76" x2="27.16" y2="110.71"><stop offset="0.0" stop-color="#ffffff"/><stop offset="0.1" stop-color="#e6fbfa"/><stop offset="0.2" stop-color="#ccf7f4"/><stop offset="0.4" stop-color="#99efea"/><stop offset="0.6" stop-color="#66e7df"/><stop offset="0.8" stop-color="#33ded4"/><stop offset="1.0" stop-color="#00d6ca"/></linearGradient><linearGradient id="w58" gradientUnits="userSpaceOnUse" x1="75.03" y1="101.76" x2="27.16" y2="110.71"><stop offset="0.0" stop-color="#ffffff"/><stop offset="0.1" stop-color="#e6fbf9"/><stop offset="0.2" stop-color="#ccf7f4"/><stop offset="0.4" stop-color="#99efe9"/><stop offset="0.6" stop-color="#66e7dd"/><stop offset="0.8" stop-color="#33dfd2"/><stop offset="1.0" stop-color="#00d7c7"/></linearGradient><linearGradient id="w59" gradientUnits="userSpaceOnUse" x1="75.03" y1="101.76" x2="26.97" y2="110.36"><stop offset="0.0" stop-color="#ffffff"/><stop offset="0.1" stop-color="#e6fbf9"/><stop offset="0.2" stop-color="#ccf7f3"/><stop offset="0.4" stop-color="#99efe8"/><stop offset="0.6" stop-color="#66e7dc"/><stop offset="0.8" stop-color="#33dfd0"/><stop offset="1.0" stop-color="#00d8c4"/></linearGradient><linearGradient id="w60" gradientUnits="userSpaceOnUse" x1="75.03" y1="101.76" x2="26.97" y2="110.36"><stop offset="0.0" stop-color="#ffffff"/><stop offset="0.1" stop-color="#e6fbf9"/><stop offset="0.2" stop-color="#ccf7f3"/><stop offset="0.4" stop-color="#99efe6"/><stop offset="0.6" stop-color="#66e8da"/><stop offset="0.8" stop-color="#33e0ce"/><stop offset="1.0" stop-color="#00d8c2"/></linearGradient><linearGradient id="w61" gradientUnits="userSpaceOnUse" x1="75.03" y1="101.76" x2="26.76" y2="109.97"><stop offset="0.0" stop-color="#ffffff"/><stop offset="0.1" stop-color="#e6fbf9"/><stop offset="0.2" stop-color="#ccf7f2"/><stop offset="0.4" stop-color="#99f0e5"/><stop offset="0.6" stop-color="#66e8d9"/><stop offset="0.8" stop-color="#33e0cc"/><stop offset="1.0" stop-color="#00d9bf"/></linearGradient><linearGradient id="w62" gradientUnits="userSpaceOnUse" x1="75.03" y1="101.76" x2="26.76" y2="109.97"><stop offset="0.0" stop-color="#ffffff"/><stop offset="0.1" stop-color="#e6fbf8"/><stop offset="0.2" stop-color="#ccf7f2"/><stop offset="0.4" stop-color="#99f0e4"/><stop offset="0.6" stop-color="#66e8d7"/><stop offset="0.8" stop-color="#33e1ca"/><stop offset="1.0" stop-color="#00d9bd"/></linearGradient><linearGradient id="w63" gradientUnits="userSpaceOnUse" x1="75.03" y1="101.76" x2="26.49" y2="109.53"><stop offset="0.0" stop-color="#ffffff"/><stop offset="0.1" stop-color="#e6fbf8"/><stop offset="0.2" stop-color="#ccf8f1"/><stop offset="0.4" stop-color="#99f0e3"/><stop offset="0.6" stop-color="#66e9d6"/><stop offset="0.8" stop-color="#33e1c8"/><stop offset="1.0" stop-color="#00daba"/></linearGradient><linearGradient id="w64" gradientUnits="userSpaceOnUse" x1="75.03" y1="101.76" x2="26.49" y2="109.53"><stop offset="0.0" stop-color="#ffffff"/><stop offset="0.1" stop-color="#e6fbf8"/><stop offset="0.2" stop-color="#ccf8f1"/><stop offset="0.4" stop-color="#99f0e2"/><stop offset="0.6" stop-color="#66e9d4"/><stop offset="0.8" stop-color="#33e2c6"/><stop offset="1.0" stop-color="#00dbb8"/></linearGradient><linearGradient id="w65" gradientUnits="userSpaceOnUse" x1="75.03" y1="101.76" x2="26.26" y2="109.15"><stop offset="0.0" stop-color="#ffffff"/><stop offset="0.1" stop-color="#e6fbf8"/><stop offset="0.2" stop-color="#ccf8f0"/><stop offset="0.4" stop-color="#99f1e1"/><stop offset="0.6" stop-color="#66e9d3"/><stop offset="0.8" stop-color="#33e2c4"/><stop offset="1.0" stop-color="#00dbb5"/></linearGradient><linearGradient id="w66" gradientUnits="userSpaceOnUse" x1="75.03" y1="101.76" x2="26.26" y2="109.15"><stop offset="0.0" stop-color="#ffffff"/><stop offset="0.1" stop-color="#e6fbf7"/><stop offset="0.2" stop-color="#ccf8f0"/><stop offset="0.4" stop-color="#99f1e1"/><stop offset="0.6" stop-color="#66ead1"/><stop offset="0.8" stop-color="#33e3c2"/><stop offset="1.0" stop-color="#00dcb3"/></linearGradient><linearGradient id="w67" gradientUnits="userSpaceOnUse" x1="75.03" y1="101.76" x2="26.06" y2="108.85"><stop offset="0.0" stop-color="#ffffff"/><stop offset="0.1" stop-color="#e6fcf7"/><stop offset="0.2" stop-color="#ccf8ef"/><stop offset="0.4" stop-color="#99f1e0"/><stop offset="0.6" stop-color="#66ead0"/><stop offset="0.8" stop-color="#33e3c0"/><stop offset="1.0" stop-color="#00dcb0"/></linearGradient><linearGradient id="w68" gradientUnits="userSpaceOnUse" x1="75.03" y1="101.76" x2="26.06" y2="108.85"><stop offset="0.0" stop-color="#ffffff"/><stop offset="0.1" stop-color="#e6fcf7"/><stop offset="0.2" stop-color="#ccf8ef"/><stop offset="0.4" stop-color="#99f1df"/><stop offset="0.6" stop-color="#66ebce"/><stop offset="0.8" stop-color="#33e4be"/><stop offset="1.0" stop-color="#00ddae"/></linearGradient><linearGradient id="w69" gradientUnits="userSpaceOnUse" x1="75.03" y1="101.76" x2="25.83" y2="108.53"><stop offset="0.0" stop-color="#ffffff"/><stop offset="0.1" stop-color="#e6fcf7"/><stop offset="0.2" stop-color="#ccf8ee"/><stop offset="0.4" stop-color="#99f2de"/><stop offset="0.6" stop-color="#66ebcd"/><stop offset="0.8" stop-color="#33e4bc"/><stop offset="1.0" stop-color="#00ddab"/></linearGradient><linearGradient id="w70" gradientUnits="userSpaceOnUse" x1="75.03" y1="101.76" x2="25.83" y2="108.53"><stop offset="0.0" stop-color="#ffffff"/><stop offset="0.1" stop-color="#e6fcf6"/><stop offset="0.2" stop-color="#ccf8ee"/><stop offset="0.4" stop-color="#99f2dd"/><stop offset="0.6" stop-color="#66ebcb"/><stop offset="0.8" stop-color="#33e5ba"/><stop offset="1.0" stop-color="#00dea9"/></linearGradient><linearGradient id="w71" gradientUnits="userSpaceOnUse" x1="75.03" y1="101.76" x2="25.56" y2="108.17"><stop offset="0.0" stop-color="#ffffff"/><stop offset="0.1" stop-color="#e6fcf6"/><stop offset="0.2" stop-color="#ccf9ed"/><stop offset="0.4" stop-color="#99f2dc"/><stop offset="0.6" stop-color="#66ecca"/><stop offset="0.8" stop-color="#33e5b8"/><stop offset="1.0" stop-color="#00dfa7"/></linearGradient><linearGradient id="w72" gradientUnits="userSpaceOnUse" x1="75.03" y1="101.76" x2="25.56" y2="108.17"><stop offset="0.0" stop-color="#ffffff"/><stop offset="0.1" stop-color="#e6fcf6"/><stop offset="0.2" stop-color="#ccf9ed"/><stop offset="0.4" stop-color="#99f2db"/><stop offset="0.6" stop-color="#66ecc9"/><stop offset="0.8" stop-color="#33e5b6"/><stop offset="1.0" stop-color="#00dfa4"/></linearGradient><linearGradient id="w73" gradientUnits="userSpaceOnUse" x1="75.03" y1="101.76" x2="25.26" y2="107.78"><stop offset="0.0" stop-color="#ffffff"/><stop offset="0.1" stop-color="#e6fcf6"/><stop offset="0.2" stop-color="#ccf9ec"/><stop offset="0.4" stop-color="#99f2da"/><stop offset="0.6" stop-color="#66ecc7"/><stop offset="0.8" stop-color="#33e6b5"/><stop offset="1.0" stop-color="#00e0a2"/></linearGradient><linearGradient id="w74" gradientUnits="userSpaceOnUse" x1="75.03" y1="101.76" x2="25.26" y2="107.78"><stop offset="0.0" stop-color="#ffffff"/><stop offset="0.1" stop-color="#e6fcf5"/><stop offset="0.2" stop-color="#ccf9ec"/><stop offset="0.4" stop-color="#99f3d9"/><stop offset="0.6" stop-color="#66ecc6"/><stop offset="0.8" stop-color="#33e6b3"/><stop offset="1.0" stop-color="#00e0a0"/></linearGradient><linearGradient id="w75" gradientUnits="userSpaceOnUse" x1="75.03" y1="101.76" x2="24.90" y2="107.35"><stop offset="0.0" stop-color="#ffffff"/><stop offset="0.1" stop-color="#e6fcf5"/><stop offset="0.2" stop-color="#ccf9eb"/><stop offset="0.4" stop-color="#99f3d8"/><stop offset="0.6" stop-color="#66edc4"/><stop offset="0.8" stop-color="#33e7b1"/><stop offset="1.0" stop-color="#00e19d"/></linearGradient><linearGradient id="w76" gradientUnits="userSpaceOnUse" x1="75.03" y1="101.76" x2="24.90" y2="107.35"><stop offset="0.0" stop-color="#ffffff"/><stop offset="0.1" stop-color="#e6fcf5"/><stop offset="0.2" stop-color="#ccf9eb"/><stop offset="0.4" stop-color="#99f3d7"/><stop offset="0.6" stop-color="#66edc3"/><stop offset="0.8" stop-color="#33e7af"/><stop offset="1.0" stop-color="#00e19b"/></linearGradient><linearGradient id="w77" gradientUnits="userSpaceOnUse" x1="75.03" y1="101.76" x2="24.49" y2="106.85"><stop offset="0.0" stop-color="#ffffff"/><stop offset="0.1" stop-color="#e6fcf5"/><stop offset="0.2" stop-color="#ccf9eb"/><stop offset="0.4" stop-color="#99f3d6"/><stop offset="0.6" stop-color="#66edc2"/><stop offset="0.8" stop-color="#33e8ad"/><stop offset="1.0" stop-color="#00e299"/></linearGradient><linearGradient id="w78" gradientUnits="userSpaceOnUse" x1="75.03" y1="101.76" x2="24.49" y2="106.85"><stop offset="0.0" stop-color="#ffffff"/><stop offset="0.1" stop-color="#e6fcf5"/><stop offset="0.2" stop-color="#ccf9ea"/><stop offset="0.4" stop-color="#99f3d5"/><stop offset="0.6" stop-color="#66eec0"/><stop offset="0.8" stop-color="#33e8ab"/><stop offset="1.0" stop-color="#00e296"/></linearGradient><linearGradient id="w79" gradientUnits="userSpaceOnUse" x1="75.03" y1="101.76" x2="24.00" y2="106.28"><stop offset="0.0" stop-color="#ffffff"/><stop offset="0.1" stop-color="#e6fcf4"/><stop offset="0.2" stop-color="#ccf9ea"/><stop offset="0.4" stop-color="#99f4d4"/><stop offset="0.6" stop-color="#66eebf"/><stop offset="0.8" stop-color="#33e8a9"/><stop offset="1.0" stop-color="#00e394"/></linearGradient><linearGradient id="w80" gradientUnits="userSpaceOnUse" x1="75.03" y1="101.76" x2="24.00" y2="106.28"><stop offset="0.0" stop-color="#ffffff"/><stop offset="0.1" stop-color="#e6fcf4"/><stop offset="0.2" stop-color="#ccf9e9"/><stop offset="0.4" stop-color="#99f4d3"/><stop offset="0.6" stop-color="#66eebd"/><stop offset="0.8" stop-color="#33e9a8"/><stop offset="1.0" stop-color="#00e392"/></linearGradient><linearGradient id="w81" gradientUnits="userSpaceOnUse" x1="75.03" y1="101.76" x2="23.54" y2="105.76"><stop offset="0.0" stop-color="#ffffff"/><stop offset="0.1" stop-color="#e6fcf4"/><stop offset="0.2" stop-color="#ccfae9"/><stop offset="0.4" stop-color="#99f4d2"/><stop offset="0.6" stop-color="#66efbc"/><stop offset="0.8" stop-color="#33e9a6"/><stop offset="1.0" stop-color="#00e490"/></linearGradient><linearGradient id="w82" gradientUnits="userSpaceOnUse" x1="75.03" y1="101.76" x2="23.54" y2="105.76"><stop offset="0.0" stop-color="#ffffff"/><stop offset="0.1" stop-color="#e6fcf4"/><stop offset="0.2" stop-color="#ccfae8"/><stop offset="0.4" stop-color="#99f4d2"/><stop offset="0.6" stop-color="#66efbb"/><stop offset="0.8" stop-color="#33eaa4"/><stop offset="1.0" stop-color="#00e48d"/></linearGradient><linearGradient id="w83" gradientUnits="userSpaceOnUse" x1="75.03" y1="101.76" x2="23.14" y2="105.31"><stop offset="0.0" stop-color="#ffffff"/><stop offset="0.1" stop-color="#e6fcf3"/><stop offset="0.2" stop-color="#ccfae8"/><stop offset="0.4" stop-color="#99f4d1"/><stop offset="0.6" stop-color="#66efb9"/><stop offset="0.8" stop-color="#33eaa2"/><stop offset="1.0" stop-color="#00e58b"/></linearGradient><linearGradient id="w84" gradientUnits="userSpaceOnUse" x1="75.03" y1="101.76" x2="23.14" y2="105.31"><stop offset="0.0" stop-color="#ffffff"/><stop offset="0.1" stop-color="#e6fcf3"/><stop offset="0.2" stop-color="#ccfae7"/><stop offset="0.4" stop-color="#99f5d0"/><stop offset="0.6" stop-color="#66efb8"/><stop offset="0.8" stop-color="#33eaa1"/><stop offset="1.0" stop-color="#00e589"/></linearGradient><linearGradient id="w85" gradientUnits="userSpaceOnUse" x1="75.03" y1="101.76" x2="22.68" y2="104.81"><stop offset="0.0" stop-color="#ffffff"/><stop offset="0.1" stop-color="#e6fcf3"/><stop offset="0.2" stop-color="#ccfae7"/><stop offset="0.4" stop-color="#99f5cf"/><stop offset="0.6" stop-color="#66f0b7"/><stop offset="0.8" stop-color="#33eb9f"/><stop offset="1.0" stop-color="#00e687"/></linearGradient><linearGradient id="w86" gradientUnits="userSpaceOnUse" x1="75.03" y1="101.76" x2="22.68" y2="104.81"><stop offset="0.0" stop-color="#ffffff"/><stop offset="0.1" stop-color="#e6fdf3"/><stop offset="0.2" stop-color="#ccfae7"/><stop offset="0.4" stop-color="#99f5ce"/><stop offset="0.6" stop-color="#66f0b6"/><stop offset="0.8" stop-color="#33eb9d"/><stop offset="1.0" stop-color="#00e685"/></linearGradient><linearGradient id="w87" gradientUnits="userSpaceOnUse" x1="75.03" y1="101.76" x2="22.15" y2="104.23"><stop offset="0.0" stop-color="#ffffff"/><stop offset="0.1" stop-color="#e6fdf3"/><stop offset="0.2" stop-color="#ccfae6"/><stop offset="0.4" stop-color="#99f5cd"/><stop offset="0.6" stop-color="#66f0b4"/><stop offset="0.8" stop-color="#33eb9b"/><stop offset="1.0" stop-color="#00e682"/></linearGradient><linearGradient id="w88" gradientUnits="userSpaceOnUse" x1="75.03" y1="101.76" x2="22.15" y2="104.23"><stop offset="0.0" stop-color="#ffffff"/><stop offset="0.1" stop-color="#e6fdf2"/><stop offset="0.2" stop-color="#ccfae6"/><stop offset="0.4" stop-color="#99f5cc"/><stop offset="0.6" stop-color="#66f1b3"/><stop offset="0.8" stop-color="#33ec99"/><stop offset="1.0" stop-color="#00e780"/></linearGradient><linearGradient id="w89" gradientUnits="userSpaceOnUse" x1="75.03" y1="101.76" x2="21.54" y2="103.57"><stop offset="0.0" stop-color="#ffffff"/><stop offset="0.1" stop-color="#e6fdf2"/><stop offset="0.2" stop-color="#ccfae5"/><stop offset="0.4" stop-color="#99f6cb"/><stop offset="0.6" stop-color="#66f1b2"/><stop offset="0.8" stop-color="#33ec98"/><stop offset="1.0" stop-color="#00e77e"/></linearGradient><linearGradient id="w90" gradientUnits="userSpaceOnUse" x1="75.03" y1="101.76" x2="21.54" y2="103.57"><stop offset="0.0" stop-color="#ffffff"/><stop offset="0.1" stop-color="#e6fdf2"/><stop offset="0.2" stop-color="#ccfae5"/><stop offset="0.4" stop-color="#99f6ca"/><stop offset="0.6" stop-color="#66f1b0"/><stop offset="0.8" stop-color="#33ed96"/><stop offset="1.0" stop-color="#00e87c"/></linearGradient><linearGradient id="w91" gradientUnits="userSpaceOnUse" x1="75.03" y1="101.76" x2="20.83" y2="102.80"><stop offset="0.0" stop-color="#ffffff"/><stop offset="0.1" stop-color="#e6fdf2"/><stop offset="0.2" stop-color="#ccfae4"/><stop offset="0.4" stop-color="#99f6ca"/><stop offset="0.6" stop-color="#66f1af"/><stop offset="0.8" stop-color="#33ed94"/><stop offset="1.0" stop-color="#00e879"/></linearGradient><linearGradient id="w92" gradientUnits="userSpaceOnUse" x1="75.03" y1="101.76" x2="20.83" y2="102.80"><stop offset="0.0" stop-color="#ffffff"/><stop offset="0.1" stop-color="#e6fdf1"/><stop offset="0.2" stop-color="#ccfbe4"/><stop offset="0.4" stop-color="#99f6c9"/><stop offset="0.6" stop-color="#66f2ae"/><stop offset="0.8" stop-color="#33ed92"/><stop offset="1.0" stop-color="#00e977"/></linearGradient><linearGradient id="w93" gradientUnits="userSpaceOnUse" x1="75.03" y1="101.76" x2="20.02" y2="101.89"><stop offset="0.0" stop-color="#ffffff"/><stop offset="0.1" stop-color="#e6fdf1"/><stop offset="0.2" stop-color="#ccfbe3"/><stop offset="0.4" stop-color="#99f6c8"/><stop offset="0.6" stop-color="#66f2ac"/><stop offset="0.8" stop-color="#33ee91"/><stop offset="1.0" stop-color="#00e975"/></linearGradient><linearGradient id="w94" gradientUnits="userSpaceOnUse" x1="75.03" y1="101.76" x2="20.02" y2="101.89"><stop offset="0.0" stop-color="#ffffff"/><stop offset="0.1" stop-color="#e6fdf1"/><stop offset="0.2" stop-color="#ccfbe3"/><stop offset="0.4" stop-color="#99f6c7"/><stop offset="0.6" stop-color="#66f2ab"/><stop offset="0.8" stop-color="#33ee8f"/><stop offset="1.0" stop-color="#00ea73"/></linearGradient><linearGradient id="w95" gradientUnits="userSpaceOnUse" x1="75.03" y1="101.76" x2="19.08" y2="100.83"><stop offset="0.0" stop-color="#ffffff"/><stop offset="0.1" stop-color="#e6fdf1"/><stop offset="0.2" stop-color="#ccfbe3"/><stop offset="0.4" stop-color="#99f7c6"/><stop offset="0.6" stop-color="#66f2aa"/><stop offset="0.8" stop-color="#33ee8d"/><stop offset="1.0" stop-color="#00ea71"/></linearGradient><linearGradient id="w96" gradientUnits="userSpaceOnUse" x1="75.03" y1="101.76" x2="19.08" y2="100.83"><stop offset="0.0" stop-color="#ffffff"/><stop offset="0.1" stop-color="#e6fdf1"/><stop offset="0.2" stop-color="#ccfbe2"/><stop offset="0.4" stop-color="#99f7c5"/><stop offset="0.6" stop-color="#66f3a8"/><stop offset="0.8" stop-color="#33ef8b"/><stop offset="1.0" stop-color="#00eb6e"/></linearGradient><linearGradient id="w97" gradientUnits="userSpaceOnUse" x1="75.03" y1="101.76" x2="18.15" y2="99.73"><stop offset="0.0" stop-color="#ffffff"/><stop offset="0.1" stop-color="#e6fdf0"/><stop offset="0.2" stop-color="#ccfbe2"/><stop offset="0.4" stop-color="#99f7c4"/><stop offset="0.6" stop-color="#66f3a7"/><stop offset="0.8" stop-color="#33ef8a"/><stop offset="1.0" stop-color="#00eb6c"/></linearGradient><linearGradient id="w98" gradientUnits="userSpaceOnUse" x1="75.03" y1="101.76" x2="18.15" y2="99.73"><stop offset="0.0" stop-color="#ffffff"/><stop offset="0.1" stop-color="#e6fdf0"/><stop offset="0.2" stop-color="#ccfbe1"/><stop offset="0.4" stop-color="#99f7c3"/><stop offset="0.6" stop-color="#66f3a6"/><stop offset="0.8" stop-color="#33ef88"/><stop offset="1.0" stop-color="#00eb6a"/></linearGradient><linearGradient id="w99" gradientUnits="userSpaceOnUse" x1="75.03" y1="101.76" x2="17.29" y2="98.69"><stop offset="0.0" stop-color="#ffffff"/><stop offset="0.1" stop-color="#e6fdf0"/><stop offset="0.2" stop-color="#ccfbe1"/><stop offset="0.4" stop-color="#99f7c3"/><stop offset="0.6" stop-color="#66f4a4"/><stop offset="0.8" stop-color="#33f086"/><stop offset="1.0" stop-color="#00ec68"/></linearGradient><linearGradient id="w100" gradientUnits="userSpaceOnUse" x1="75.03" y1="101.76" x2="17.29" y2="98.69"><stop offset="0.0" stop-color="#ffffff"/><stop offset="0.1" stop-color="#e6fdf0"/><stop offset="0.2" stop-color="#ccfbe0"/><stop offset="0.4" stop-color="#99f8c2"/><stop offset="0.6" stop-color="#66f4a3"/><stop offset="0.8" stop-color="#33f084"/><stop offset="1.0" stop-color="#00ec65"/></linearGradient><linearGradient id="w101" gradientUnits="userSpaceOnUse" x1="75.03" y1="101.76" x2="16.37" y2="97.54"><stop offset="0.0" stop-color="#ffffff"/><stop offset="0.1" stop-color="#e6fdef"/><stop offset="0.2" stop-color="#ccfbe0"/><stop offset="0.4" stop-color="#99f8c1"/><stop offset="0.6" stop-color="#66f4a2"/><stop offset="0.8" stop-color="#33f082"/><stop offset="1.0" stop-color="#00ed63"/></linearGradient><linearGradient id="w102" gradientUnits="userSpaceOnUse" x1="75.03" y1="101.76" x2="16.37" y2="97.54"><stop offset="0.0" stop-color="#ffffff"/><stop offset="0.1" stop-color="#e6fdef"/><stop offset="0.2" stop-color="#ccfbdf"/><stop offset="0.4" stop-color="#99f8c0"/><stop offset="0.6" stop-color="#66f4a0"/><stop offset="0.8" stop-color="#33f181"/><stop offset="1.0" stop-color="#00ed61"/></linearGradient><linearGradient id="w103" gradientUnits="userSpaceOnUse" x1="75.03" y1="101.76" x2="15.38" y2="96.24"><stop offset="0.0" stop-color="#ffffff"/><stop offset="0.1" stop-color="#e6fdef"/><stop offset="0.2" stop-color="#ccfcdf"/><stop offset="0.4" stop-color="#99f8bf"/><stop offset="0.6" stop-color="#66f59f"/><stop offset="0.8" stop-color="#33f17f"/><stop offset="1.0" stop-color="#00ee5f"/></linearGradient><linearGradient id="w104" gradientUnits="userSpaceOnUse" x1="75.03" y1="101.76" x2="15.38" y2="96.24"><stop offset="0.0" stop-color="#ffffff"/><stop offset="0.1" stop-color="#e6fdef"/><stop offset="0.2" stop-color="#ccfcde"/><stop offset="0.4" stop-color="#99f8be"/><stop offset="0.6" stop-color="#66f59d"/><stop offset="0.8" stop-color="#33f27d"/><stop offset="1.0" stop-color="#00ee5c"/></linearGradient><linearGradient id="w105" gradientUnits="userSpaceOnUse" x1="75.03" y1="101.76" x2="14.30" y2="94.76"><stop offset="0.0" stop-color="#ffffff"/><stop offset="0.1" stop-color="#e6fdee"/><stop offset="0.2" stop-color="#ccfcde"/><stop offset="0.4" stop-color="#99f8bd"/><stop offset="0.6" stop-color="#66f59c"/><stop offset="0.8" stop-color="#33f27b"/><stop offset="1.0" stop-color="#00ef5a"/></linearGradient><linearGradient id="w106" gradientUnits="userSpaceOnUse" x1="75.03" y1="101.76" x2="14.30" y2="94.76"><stop offset="0.0" stop-color="#ffffff"/><stop offset="0.1" stop-color="#e6fdee"/><stop offset="0.2" stop-color="#ccfcdd"/><stop offset="0.4" stop-color="#99f9bc"/><stop offset="0.6" stop-color="#66f69a"/><stop offset="0.8" stop-color="#33f279"/><stop offset="1.0" stop-color="#00ef57"/></linearGradient><linearGradient id="w107" gradientUnits="userSpaceOnUse" x1="75.03" y1="101.76" x2="13.12" y2="93.03"><stop offset="0.0" stop-color="#ffffff"/><stop offset="0.1" stop-color="#e6fdee"/><stop offset="0.2" stop-color="#ccfcdd"/><stop offset="0.4" stop-color="#99f9bb"/><stop offset="0.6" stop-color="#66f699"/><stop offset="0.8" stop-color="#33f377"/><stop offset="1.0" stop-color="#00f055"/></linearGradient><linearGradient id="w108" gradientUnits="userSpaceOnUse" x1="75.03" y1="101.76" x2="13.12" y2="93.03"><stop offset="0.0" stop-color="#ffffff"/><stop offset="0.1" stop-color="#e6feee"/><stop offset="0.2" stop-color="#ccfcdc"/><stop offset="0.4" stop-color="#99f9ba"/><stop offset="0.6" stop-color="#66f697"/><stop offset="0.8" stop-color="#33f375"/><stop offset="1.0" stop-color="#00f052"/></linearGradient><linearGradient id="w109" gradientUnits="userSpaceOnUse" x1="75.03" y1="101.76" x2="11.83" y2="90.97"><stop offset="0.0" stop-color="#ffffff"/><stop offset="0.1" stop-color="#e6feed"/><stop offset="0.2" stop-color="#ccfcdc"/><stop offset="0.4" stop-color="#99f9b9"/><stop offset="0.6" stop-color="#66f696"/><stop offset="0.8" stop-color="#33f373"/><stop offset="1.0" stop-color="#00f150"/></linearGradient><linearGradient id="w110" gradientUnits="userSpaceOnUse" x1="75.03" y1="101.76" x2="11.83" y2="90.97"><stop offset="0.0" stop-color="#ffffff"/><stop offset="0.1" stop-color="#e6feed"/><stop offset="0.2" stop-color="#ccfcdb"/><stop offset="0.4" stop-color="#99f9b8"/><stop offset="0.6" stop-color="#66f794"/><stop offset="0.8" stop-color="#33f471"/><stop offset="1.0" stop-color="#00f14d"/></linearGradient><linearGradient id="w111" gradientUnits="userSpaceOnUse" x1="75.03" y1="101.76" x2="10.43" y2="88.48"><stop offset="0.0" stop-color="#ffffff"/><stop offset="0.1" stop-color="#e6feed"/><stop offset="0.2" stop-color="#ccfcdb"/><stop offset="0.4" stop-color="#99fab7"/><stop offset="0.6" stop-color="#66f793"/><stop offset="0.8" stop-color="#33f46f"/><stop offset="1.0" stop-color="#00f24b"/></linearGradient><linearGradient id="w112" gradientUnits="userSpaceOnUse" x1="75.03" y1="101.76" x2="10.43" y2="88.48"><stop offset="0.0" stop-color="#ffffff"/><stop offset="0.1" stop-color="#e6feed"/><stop offset="0.2" stop-color="#ccfcda"/><stop offset="0.4" stop-color="#99fab6"/><stop offset="0.6" stop-color="#66f791"/><stop offset="0.8" stop-color="#33f56d"/><stop offset="1.0" stop-color="#00f248"/></linearGradient><linearGradient id="w113" gradientUnits="userSpaceOnUse" x1="75.03" y1="101.76" x2="8.96" y2="85.49"><stop offset="0.0" stop-color="#ffffff"/><stop offset="0.1" stop-color="#e6feec"/><stop offset="0.2" stop-color="#ccfdda"/><stop offset="0.4" stop-color="#99fab4"/><stop offset="0.6" stop-color="#66f88f"/><stop offset="0.8" stop-color="#33f569"/><stop offset="1.0" stop-color="#00f344"/></linearGradient><linearGradient id="w114" gradientUnits="userSpaceOnUse" x1="75.03" y1="101.76" x2="7.62" y2="82.24"><stop offset="0.0" stop-color="#ffffff"/><stop offset="0.1" stop-color="#e6feec"/><stop offset="0.2" stop-color="#ccfdd8"/><stop offset="0.4" stop-color="#99fbb2"/><stop offset="0.6" stop-color="#66f88b"/><stop offset="0.8" stop-color="#33f665"/><stop offset="1.0" stop-color="#00f43e"/></linearGradient><linearGradient id="w115" gradientUnits="userSpaceOnUse" x1="75.03" y1="101.76" x2="6.45" y2="78.72"><stop offset="0.0" stop-color="#ffffff"/><stop offset="0.1" stop-color="#e6feeb"/><stop offset="0.2" stop-color="#ccfdd7"/><stop offset="0.4" stop-color="#99fbaf"/><stop offset="0.6" stop-color="#66f988"/><stop offset="0.8" stop-color="#33f760"/><stop offset="1.0" stop-color="#00f538"/></linearGradient><linearGradient id="w116" gradientUnits="userSpaceOnUse" x1="75.03" y1="101.76" x2="5.47" y2="74.89"><stop offset="0.0" stop-color="#ffffff"/><stop offset="0.1" stop-color="#e6feea"/><stop offset="0.2" stop-color="#ccfdd6"/><stop offset="0.4" stop-color="#99fcad"/><stop offset="0.6" stop-color="#66fa84"/><stop offset="0.8" stop-color="#33f85a"/><stop offset="1.0" stop-color="#00f631"/></linearGradient><linearGradient id="w117" gradientUnits="userSpaceOnUse" x1="75.03" y1="101.76" x2="4.75" y2="70.66"><stop offset="0.0" stop-color="#ffffff"/><stop offset="0.1" stop-color="#e6feea"/><stop offset="0.2" stop-color="#ccfed4"/><stop offset="0.4" stop-color="#99fcaa"/><stop offset="0.6" stop-color="#66fb7f"/><stop offset="0.8" stop-color="#33f954"/><stop offset="1.0" stop-color="#00f82a"/></linearGradient><linearGradient id="w118" gradientUnits="userSpaceOnUse" x1="75.03" y1="101.76" x2="4.36" y2="65.95"><stop offset="0.0" stop-color="#ffffff"/><stop offset="0.1" stop-color="#e6fee9"/><stop offset="0.2" stop-color="#ccfed2"/><stop offset="0.4" stop-color="#99fda6"/><stop offset="0.6" stop-color="#66fc79"/><stop offset="0.8" stop-color="#33fb4d"/><stop offset="1.0" stop-color="#00f920"/></linearGradient><linearGradient id="w119" gradientUnits="userSpaceOnUse" x1="75.03" y1="101.76" x2="4.45" y2="60.64"><stop offset="0.0" stop-color="#ffffff"/><stop offset="0.1" stop-color="#e6ffe8"/><stop offset="0.2" stop-color="#ccfed0"/><stop offset="0.4" stop-color="#99fea1"/><stop offset="0.6" stop-color="#66fd72"/><stop offset="0.8" stop-color="#33fc43"/><stop offset="1.0" stop-color="#00fc14"/></linearGradient><linearGradient id="w120" gradientUnits="userSpaceOnUse" x1="75.03" y1="101.76" x2="5.25" y2="54.60"><stop offset="0.0" stop-color="#ffffff"/><stop offset="0.1" stop-color="#e6ffe6"/><stop offset="0.2" stop-color="#ccffcc"/><stop offset="0.4" stop-color="#99ff99"/><stop offset="0.6" stop-color="#66ff66"/><stop offset="0.8" stop-color="#33ff33"/><stop offset="1.0" stop-color="#00ff00"/></linearGradient><linearGradient id="w121" gradientUnits="userSpaceOnUse" x1="75.03" y1="101.76" x2="7.49" y2="46.70"><stop offset="0.0" stop-color="#ffffff"/><stop offset="0.1" stop-color="#e6ffe6"/><stop offset="0.2" stop-color="#ccffcc"/><stop offset="0.4" stop-color="#99ff99"/><stop offset="0.6" stop-color="#66ff66"/><stop offset="0.8" stop-color="#33ff33"/><stop offset="1.0" stop-color="#00ff00"/></linearGradient><linearGradient id="w122" gradientUnits="userSpaceOnUse" x1="75.03" y1="101.76" x2="11.94" y2="37.80"><stop offset="0.0" stop-color="#ffffff"/><stop offset="0.1" stop-color="#e6ffe6"/><stop offset="0.2" stop-color="#ccffcc"/><stop offset="0.4" stop-color="#99ff99"/><stop offset="0.6" stop-color="#66ff66"/><stop offset="0.8" stop-color="#33ff33"/><stop offset="1.0" stop-color="#00ff00"/></linearGradient><linearGradient id="w123" gradientUnits="userSpaceOnUse" x1="75.03" y1="101.76" x2="18.21" y2="29.92"><stop offset="0.0" stop-color="#ffffff"/><stop offset="0.1" stop-color="#e6ffe6"/><stop offset="0.2" stop-color="#ccffcc"/><stop offset="0.4" stop-color="#99ff99"/><stop offset="0.6" stop-color="#66ff66"/><stop offset="0.8" stop-color="#33ff33"/><stop offset="1.0" stop-color="#00ff00"/></linearGradient><linearGradient id="w124" gradientUnits="userSpaceOnUse" x1="75.03" y1="101.76" x2="25.80" y2="23.63"><stop offset="0.0" stop-color="#ffffff"/><stop offset="0.1" stop-color="#e6ffe6"/><stop offset="0.2" stop-color="#ccffcc"/><stop offset="0.4" stop-color="#99ff99"/><stop offset="0.6" stop-color="#66ff66"/><stop offset="0.8" stop-color="#33ff33"/><stop offset="1.0" stop-color="#00ff00"/></linearGradient><linearGradient id="w125" gradientUnits="userSpaceOnUse" x1="75.03" y1="101.76" x2="34.02" y2="19.21"><stop offset="0.0" stop-color="#ffffff"/><stop offset="0.1" stop-color="#e6ffe6"/><stop offset="0.2" stop-color="#ccffcc"/><stop offset="0.4" stop-color="#99ff99"/><stop offset="0.6" stop-color="#66ff66"/><stop offset="0.8" stop-color="#33ff33"/><stop offset="1.0" stop-color="#00ff00"/></linearGradient><linearGradient id="w126" gradientUnits="userSpaceOnUse" x1="75.03" y1="101.76" x2="42.15" y2="16.62"><stop offset="0.0" stop-color="#ffffff"/><stop offset="0.1" stop-color="#e6ffe6"/><stop offset="0.2" stop-color="#ccffcc"/><stop offset="0.4" stop-color="#99ff99"/><stop offset="0.6" stop-color="#66ff66"/><stop offset="0.8" stop-color="#33ff33"/><stop offset="1.0" stop-color="#00ff00"/></linearGradient><linearGradient id="w127" gradientUnits="userSpaceOnUse" x1="75.03" y1="101.76" x2="52.88" y2="15.46"><stop offset="0.0" stop-color="#ffffff"/><stop offset="0.1" stop-color="#e6ffe6"/><stop offset="0.2" stop-color="#ccffcc"/><stop offset="0.4" stop-color="#99ff99"/><stop offset="0.6" stop-color="#66ff66"/><stop offset="0.8" stop-color="#33ff33"/><stop offset="1.0" stop-color="#00ff00"/></linearGradient><linearGradient id="w128" gradientUnits="userSpaceOnUse" x1="75.03" y1="101.76" x2="71.09" y2="19.10"><stop offset="0.0" stop-color="#ffffff"/><stop offset="0.1" stop-color="#e6ffe6"/><stop offset="0.2" stop-color="#ccffcc"/><stop offset="0.4" stop-color="#99ff99"/><stop offset="0.6" stop-color="#66ff66"/><stop offset="0.8" stop-color="#33ff33"/><stop offset="1.0" stop-color="#00ff00"/></linearGradient><linearGradient id="w129" gradientUnits="userSpaceOnUse" x1="75.03" y1="101.76" x2="84.00" y2="27.06"><stop offset="0.0" stop-color="#ffffff"/><stop offset="0.1" stop-color="#e6ffe6"/><stop offset="0.2" stop-color="#ccffcc"/><stop offset="0.4" stop-color="#99ff99"/><stop offset="0.6" stop-color="#66ff66"/><stop offset="0.8" stop-color="#33ff33"/><stop offset="1.0" stop-color="#00ff00"/></linearGradient><linearGradient id="w130" gradientUnits="userSpaceOnUse" x1="75.03" y1="101.76" x2="89.11" y2="32.23"><stop offset="0.0" stop-color="#ffffff"/><stop offset="0.1" stop-color="#e6ffe6"/><stop offset="0.2" stop-color="#ccffcc"/><stop offset="0.4" stop-color="#99ff99"/><stop offset="0.6" stop-color="#66ff66"/><stop offset="0.8" stop-color="#33ff33"/><stop offset="1.0" stop-color="#00ff00"/></linearGradient><linearGradient id="w131" gradientUnits="userSpaceOnUse" x1="75.03" y1="101.76" x2="92.32" y2="36.50"><stop offset="0.0" stop-color="#ffffff"/><stop offset="0.1" stop-color="#e6ffe6"/><stop offset="0.2" stop-color="#ccffcc"/><stop offset="0.4" stop-color="#99ff99"/><stop offset="0.6" stop-color="#66ff66"/><stop offset="0.8" stop-color="#33ff33"/><stop offset="1.0" stop-color="#00ff00"/></linearGradient><linearGradient id="w132" gradientUnits="userSpaceOnUse" x1="75.03" y1="101.76" x2="94.24" y2="39.60"><stop offset="0.0" stop-color="#ffffff"/><stop offset="0.1" stop-color="#e6ffe6"/><stop offset="0.2" stop-color="#ccffcc"/><stop offset="0.4" stop-color="#99ff99"/><stop offset="0.6" stop-color="#66ff66"/><stop offset="0.8" stop-color="#33ff33"/><stop offset="1.0" stop-color="#00ff00"/></linearGradient><linearGradient id="w133" gradientUnits="userSpaceOnUse" x1="75.03" y1="101.76" x2="95.25" y2="41.46"><stop offset="0.0" stop-color="#ffffff"/><stop offset="0.1" stop-color="#e6ffe6"/><stop offset="0.2" stop-color="#ccffcc"/><stop offset="0.4" stop-color="#99ff99"/><stop offset="0.6" stop-color="#66ff66"/><stop offset="0.8" stop-color="#33ff33"/><stop offset="1.0" stop-color="#00ff00"/></linearGradient><linearGradient id="w134" gradientUnits="userSpaceOnUse" x1="75.03" y1="101.76" x2="95.56" y2="42.09"><stop offset="0.0" stop-color="#ffffff"/><stop offset="0.1" stop-color="#e6ffe6"/><stop offset="0.2" stop-color="#ccffcc"/><stop offset="0.4" stop-color="#99ff99"/><stop offset="0.6" stop-color="#66ff66"/><stop offset="0.8" stop-color="#33ff33"/><stop offset="1.0" stop-color="#00ff00"/></linearGradient><linearGradient id="w135" gradientUnits="userSpaceOnUse" x1="75.03" y1="101.76" x2="96.50" y2="44.05"><stop offset="0.0" stop-color="#ffffff"/><stop offset="0.1" stop-color="#e6ffe6"/><stop offset="0.2" stop-color="#ccffcc"/><stop offset="0.4" stop-color="#99ff99"/><stop offset="0.6" stop-color="#66ff66"/><stop offset="0.8" stop-color="#33ff33"/><stop offset="1.0" stop-color="#00ff00"/></linearGradient><linearGradient id="w136" gradientUnits="userSpaceOnUse" x1="75.03" y1="101.76" x2="97.97" y2="47.70"><stop offset="0.0" stop-color="#ffffff"/><stop offset="0.1" stop-color="#e6ffe6"/><stop offset="0.2" stop-color="#ccffcc"/><stop offset="0.4" stop-color="#99ff99"/><stop offset="0.6" stop-color="#66ff66"/><stop offset="0.8" stop-color="#33ff33"/><stop offset="1.0" stop-color="#00ff00"/></linearGradient><linearGradient id="w137" gradientUnits="userSpaceOnUse" x1="75.03" y1="101.76" x2="98.92" y2="50.67"><stop offset="0.0" stop-color="#ffffff"/><stop offset="0.1" stop-color="#e6ffe6"/><stop offset="0.2" stop-color="#ccffcc"/><stop offset="0.4" stop-color="#99ff99"/><stop offset="0.6" stop-color="#66ff66"/><stop offset="0.8" stop-color="#33ff33"/><stop offset="1.0" stop-color="#00ff00"/></linearGradient><linearGradient id="w138" gradientUnits="userSpaceOnUse" x1="75.03" y1="101.76" x2="99.52" y2="53.01"><stop offset="0.0" stop-color="#ffffff"/><stop offset="0.1" stop-color="#e6ffe6"/><stop offset="0.2" stop-color="#ccffcc"/><stop offset="0.4" stop-color="#99ff99"/><stop offset="0.6" stop-color="#66ff66"/><stop offset="0.8" stop-color="#33ff33"/><stop offset="1.0" stop-color="#00ff00"/></linearGradient><linearGradient id="w139" gradientUnits="userSpaceOnUse" x1="75.03" y1="101.76" x2="99.89" y2="54.76"><stop offset="0.0" stop-color="#ffffff"/><stop offset="0.1" stop-color="#e6ffe6"/><stop offset="0.2" stop-color="#ccffcc"/><stop offset="0.4" stop-color="#99ff99"/><stop offset="0.6" stop-color="#66ff66"/><stop offset="0.8" stop-color="#33ff33"/><stop offset="1.0" stop-color="#00ff00"/></linearGradient><linearGradient id="w140" gradientUnits="userSpaceOnUse" x1="75.03" y1="101.76" x2="100.11" y2="55.96"><stop offset="0.0" stop-color="#ffffff"/><stop offset="0.1" stop-color="#e6ffe6"/><stop offset="0.2" stop-color="#ccffcc"/><stop offset="0.4" stop-color="#99ff99"/><stop offset="0.6" stop-color="#66ff66"/><stop offset="0.8" stop-color="#33ff33"/><stop offset="1.0" stop-color="#00ff00"/></linearGradient><linearGradient id="w141" gradientUnits="userSpaceOnUse" x1="75.03" y1="101.76" x2="100.22" y2="56.64"><stop offset="0.0" stop-color="#ffffff"/><stop offset="0.1" stop-color="#e6ffe6"/><stop offset="0.2" stop-color="#ccffcc"/><stop offset="0.4" stop-color="#99ff99"/><stop offset="0.6" stop-color="#66ff66"/><stop offset="0.8" stop-color="#33ff33"/><stop offset="1.0" stop-color="#00ff00"/></linearGradient><linearGradient id="w142" gradientUnits="userSpaceOnUse" x1="75.03" y1="101.76" x2="100.25" y2="56.81"><stop offset="0.0" stop-color="#ffffff"/><stop offset="0.1" stop-color="#e6ffe6"/><stop offset="0.2" stop-color="#ccffcc"/><stop offset="0.4" stop-color="#99ff99"/><stop offset="0.6" stop-color="#66ff66"/><stop offset="0.8" stop-color="#33ff33"/><stop offset="1.0" stop-color="#00ff00"/></linearGradient><linearGradient id="w143" gradientUnits="userSpaceOnUse" x1="75.03" y1="101.76" x2="100.34" y2="57.37"><stop offset="0.0" stop-color="#ffffff"/><stop offset="0.1" stop-color="#e6ffe6"/><stop offset="0.2" stop-color="#ccffcc"/><stop offset="0.4" stop-color="#99ff99"/><stop offset="0.6" stop-color="#66ff66"/><stop offset="0.8" stop-color="#33ff33"/><stop offset="1.0" stop-color="#00ff00"/></linearGradient><linearGradient id="w144" gradientUnits="userSpaceOnUse" x1="75.03" y1="101.76" x2="100.51" y2="58.56"><stop offset="0.0" stop-color="#ffffff"/><stop offset="0.1" stop-color="#e6ffe6"/><stop offset="0.2" stop-color="#ccffcc"/><stop offset="0.4" stop-color="#99ff99"/><stop offset="0.6" stop-color="#66ff66"/><stop offset="0.8" stop-color="#33ff33"/><stop offset="1.0" stop-color="#00ff00"/></linearGradient><linearGradient id="w145" gradientUnits="userSpaceOnUse" x1="75.03" y1="101.76" x2="100.64" y2="59.65"><stop offset="0.0" stop-color="#ffffff"/><stop offset="0.1" stop-color="#e6ffe6"/><stop offset="0.2" stop-color="#ccffcc"/><stop offset="0.4" stop-color="#99ff99"/><stop offset="0.6" stop-color="#66ff66"/><stop offset="0.8" stop-color="#33ff33"/><stop offset="1.0" stop-color="#00ff00"/></linearGradient><linearGradient id="w146" gradientUnits="userSpaceOnUse" x1="75.03" y1="101.76" x2="100.75" y2="60.63"><stop offset="0.0" stop-color="#ffffff"/><stop offset="0.1" stop-color="#e6ffe6"/><stop offset="0.2" stop-color="#ccffcc"/><stop offset="0.4" stop-color="#99ff99"/><stop offset="0.6" stop-color="#66ff66"/><stop offset="0.8" stop-color="#33ff33"/><stop offset="1.0" stop-color="#00ff00"/></linearGradient><linearGradient id="w147" gradientUnits="userSpaceOnUse" x1="75.03" y1="101.76" x2="100.82" y2="61.49"><stop offset="0.0" stop-color="#ffffff"/><stop offset="0.1" stop-color="#e6ffe6"/><stop offset="0.2" stop-color="#ccffcc"/><stop offset="0.4" stop-color="#99ff99"/><stop offset="0.6" stop-color="#66ff66"/><stop offset="0.8" stop-color="#33ff33"/><stop offset="1.0" stop-color="#00ff00"/></linearGradient><linearGradient id="w148" gradientUnits="userSpaceOnUse" x1="75.03" y1="101.76" x2="100.88" y2="62.24"><stop offset="0.0" stop-color="#ffffff"/><stop offset="0.1" stop-color="#e6ffe6"/><stop offset="0.2" stop-color="#ccffcc"/><stop offset="0.4" stop-color="#99ff99"/><stop offset="0.6" stop-color="#66ff66"/><stop offset="0.8" stop-color="#33ff33"/><stop offset="1.0" stop-color="#00ff00"/></linearGradient><linearGradient id="w149" gradientUnits="userSpaceOnUse" x1="75.03" y1="101.76" x2="100.92" y2="62.88"><stop offset="0.0" stop-color="#ffffff"/><stop offset="0.1" stop-color="#e6ffe6"/><stop offset="0.2" stop-color="#ccffcc"/><stop offset="0.4" stop-color="#99ff99"/><stop offset="0.6" stop-color="#66ff66"/><stop offset="0.8" stop-color="#33ff33"/><stop offset="1.0" stop-color="#00ff00"/></linearGradient><linearGradient id="w150" gradientUnits="userSpaceOnUse" x1="75.03" y1="101.76" x2="100.95" y2="63.41"><stop offset="0.0" stop-color="#ffffff"/><stop offset="0.1" stop-color="#e6ffe6"/><stop offset="0.2" stop-color="#ccffcc"/><stop offset="0.4" stop-color="#99ff99"/><stop offset="0.6" stop-color="#66ff66"/><stop offset="0.8" stop-color="#33ff33"/><stop offset="1.0" stop-color="#00ff00"/></linearGradient><linearGradient id="w151" gradientUnits="userSpaceOnUse" x1="75.03" y1="101.76" x2="100.98" y2="64.07"><stop offset="0.0" stop-color="#ffffff"/><stop offset="0.1" stop-color="#e6ffe6"/><stop offset="0.2" stop-color="#ccffcc"/><stop offset="0.4" stop-color="#99ff99"/><stop offset="0.6" stop-color="#66ff66"/><stop offset="0.8" stop-color="#33ff33"/><stop offset="1.0" stop-color="#00ff00"/></linearGradient><linearGradient id="w152" gradientUnits="userSpaceOnUse" x1="75.03" y1="101.76" x2="101.01" y2="64.86"><stop offset="0.0" stop-color="#ffffff"/><stop offset="0.1" stop-color="#e6ffe6"/><stop offset="0.2" stop-color="#ccffcc"/><stop offset="0.4" stop-color="#99ff99"/><stop offset="0.6" stop-color="#66ff66"/><stop offset="0.8" stop-color="#33ff33"/><stop offset="1.0" stop-color="#00ff00"/></linearGradient><linearGradient id="w153" gradientUnits="userSpaceOnUse" x1="75.03" y1="101.76" x2="101.03" y2="65.58"><stop offset="0.0" stop-color="#ffffff"/><stop offset="0.1" stop-color="#e6ffe6"/><stop offset="0.2" stop-color="#ccffcc"/><stop offset="0.4" stop-color="#99ff99"/><stop offset="0.6" stop-color="#66ff66"/><stop offset="0.8" stop-color="#33ff33"/><stop offset="1.0" stop-color="#00ff00"/></linearGradient><linearGradient id="w154" gradientUnits="userSpaceOnUse" x1="75.03" y1="101.76" x2="101.03" y2="66.23"><stop offset="0.0" stop-color="#ffffff"/><stop offset="0.1" stop-color="#e6ffe6"/><stop offset="0.2" stop-color="#ccffcc"/><stop offset="0.4" stop-color="#99ff99"/><stop offset="0.6" stop-color="#66ff66"/><stop offset="0.8" stop-color="#33ff33"/><stop offset="1.0" stop-color="#00ff00"/></linearGradient><linearGradient id="w155" gradientUnits="userSpaceOnUse" x1="75.03" y1="101.76" x2="101.03" y2="66.81"><stop offset="0.0" stop-color="#ffffff"/><stop offset="0.1" stop-color="#e6ffe6"/><stop offset="0.2" stop-color="#ccffcc"/><stop offset="0.4" stop-color="#99ff99"/><stop offset="0.6" stop-color="#66ff66"/><stop offset="0.8" stop-color="#33ff33"/><stop offset="1.0" stop-color="#00ff00"/></linearGradient><linearGradient id="w156" gradientUnits="userSpaceOnUse" x1="75.03" y1="101.76" x2="101.03" y2="67.31"><stop offset="0.0" stop-color="#ffffff"/><stop offset="0.1" stop-color="#e6ffe6"/><stop offset="0.2" stop-color="#ccffcc"/><stop offset="0.4" stop-color="#99ff99"/><stop offset="0.6" stop-color="#66ff66"/><stop offset="0.8" stop-color="#33ff33"/><stop offset="1.0" stop-color="#00ff00"/></linearGradient><linearGradient id="w157" gradientUnits="userSpaceOnUse" x1="75.03" y1="101.76" x2="101.03" y2="67.75"><stop offset="0.0" stop-color="#ffffff"/><stop offset="0.1" stop-color="#e6ffe6"/><stop offset="0.2" stop-color="#ccffcc"/><stop offset="0.4" stop-color="#99ff99"/><stop offset="0.6" stop-color="#66ff66"/><stop offset="0.8" stop-color="#33ff33"/><stop offset="1.0" stop-color="#00ff00"/></linearGradient><linearGradient id="w158" gradientUnits="userSpaceOnUse" x1="75.03" y1="101.76" x2="101.02" y2="68.12"><stop offset="0.0" stop-color="#ffffff"/><stop offset="0.1" stop-color="#e6ffe6"/><stop offset="0.2" stop-color="#ccffcc"/><stop offset="0.4" stop-color="#99ff99"/><stop offset="0.6" stop-color="#66ff66"/><stop offset="0.8" stop-color="#33ff33"/><stop offset="1.0" stop-color="#00ff00"/></linearGradient><linearGradient id="w159" gradientUnits="userSpaceOnUse" x1="75.03" y1="101.76" x2="101.02" y2="68.56"><stop offset="0.0" stop-color="#ffffff"/><stop offset="0.1" stop-color="#e6ffe6"/><stop offset="0.2" stop-color="#ccffcc"/><stop offset="0.4" stop-color="#99ff99"/><stop offset="0.6" stop-color="#66ff66"/><stop offset="0.8" stop-color="#33ff33"/><stop offset="1.0" stop-color="#00ff00"/></linearGradient><linearGradient id="w160" gradientUnits="userSpaceOnUse" x1="75.03" y1="101.76" x2="101.00" y2="69.08"><stop offset="0.0" stop-color="#ffffff"/><stop offset="0.1" stop-color="#e6ffe6"/><stop offset="0.2" stop-color="#ccffcc"/><stop offset="0.4" stop-color="#99ff99"/><stop offset="0.6" stop-color="#66ff66"/><stop offset="0.8" stop-color="#33ff33"/><stop offset="1.0" stop-color="#00ff00"/></linearGradient><linearGradient id="w161" gradientUnits="userSpaceOnUse" x1="75.03" y1="101.76" x2="100.99" y2="69.55"><stop offset="0.0" stop-color="#ffffff"/><stop offset="0.1" stop-color="#e6ffe6"/><stop offset="0.2" stop-color="#ccffcc"/><stop offset="0.4" stop-color="#99ff99"/><stop offset="0.6" stop-color="#66ff66"/><stop offset="0.8" stop-color="#33ff33"/><stop offset="1.0" stop-color="#00ff00"/></linearGradient><linearGradient id="w162" gradientUnits="userSpaceOnUse" x1="75.03" y1="101.76" x2="100.98" y2="69.98"><stop offset="0.0" stop-color="#ffffff"/><stop offset="0.1" stop-color="#e6ffe6"/><stop offset="0.2" stop-color="#ccffcc"/><stop offset="0.4" stop-color="#99ff99"/><stop offset="0.6" stop-color="#66ff66"/><stop offset="0.8" stop-color="#33ff33"/><stop offset="1.0" stop-color="#00ff00"/></linearGradient><linearGradient id="w163" gradientUnits="userSpaceOnUse" x1="75.03" y1="101.76" x2="100.96" y2="70.35"><stop offset="0.0" stop-color="#ffffff"/><stop offset="0.1" stop-color="#e6ffe6"/><stop offset="0.2" stop-color="#ccffcc"/><stop offset="0.4" stop-color="#99ff99"/><stop offset="0.6" stop-color="#66ff66"/><stop offset="0.8" stop-color="#33ff33"/><stop offset="1.0" stop-color="#00ff00"/></linearGradient><linearGradient id="w164" gradientUnits="userSpaceOnUse" x1="75.03" y1="101.76" x2="100.95" y2="70.68"><stop offset="0.0" stop-color="#ffffff"/><stop offset="0.1" stop-color="#e6ffe6"/><stop offset="0.2" stop-color="#ccffcc"/><stop offset="0.4" stop-color="#99ff99"/><stop offset="0.6" stop-color="#66ff66"/><stop offset="0.8" stop-color="#33ff33"/><stop offset="1.0" stop-color="#00ff00"/></linearGradient><linearGradient id="w165" gradientUnits="userSpaceOnUse" x1="75.03" y1="101.76" x2="100.94" y2="70.96"><stop offset="0.0" stop-color="#ffffff"/><stop offset="0.1" stop-color="#e6ffe6"/><stop offset="0.2" stop-color="#ccffcc"/><stop offset="0.4" stop-color="#99ff99"/><stop offset="0.6" stop-color="#66ff66"/><stop offset="0.8" stop-color="#33ff33"/><stop offset="1.0" stop-color="#00ff00"/></linearGradient><linearGradient id="w166" gradientUnits="userSpaceOnUse" x1="75.03" y1="101.76" x2="100.93" y2="71.20"><stop offset="0.0" stop-color="#ffffff"/><stop offset="0.1" stop-color="#e6ffe6"/><stop offset="0.2" stop-color="#ccffcc"/><stop offset="0.4" stop-color="#99ff99"/><stop offset="0.6" stop-color="#66ff66"/><stop offset="0.8" stop-color="#33ff33"/><stop offset="1.0" stop-color="#00ff00"/></linearGradient><linearGradient id="w167" gradientUnits="userSpaceOnUse" x1="75.03" y1="101.76" x2="100.92" y2="71.31"><stop offset="0.0" stop-color="#ffffff"/><stop offset="0.1" stop-color="#e6ffe6"/><stop offset="0.2" stop-color="#ccffcc"/><stop offset="0.4" stop-color="#99ff99"/><stop offset="0.6" stop-color="#66ff66"/><stop offset="0.8" stop-color="#33ff33"/><stop offset="1.0" stop-color="#00ff00"/></linearGradient><linearGradient id="w168" gradientUnits="userSpaceOnUse" x1="75.03" y1="101.76" x2="100.92" y2="71.40"><stop offset="0.0" stop-color="#ffffff"/><stop offset="0.1" stop-color="#e6ffe6"/><stop offset="0.2" stop-color="#ccffcc"/><stop offset="0.4" stop-color="#99ff99"/><stop offset="0.6" stop-color="#66ff66"/><stop offset="0.8" stop-color="#33ff33"/><stop offset="1.0" stop-color="#00ff00"/></linearGradient><linearGradient id="w169" gradientUnits="userSpaceOnUse" x1="75.03" y1="101.76" x2="100.91" y2="71.85"><stop offset="0.0" stop-color="#ffffff"/><stop offset="0.1" stop-color="#e6ffe6"/><stop offset="0.2" stop-color="#ccffcc"/><stop offset="0.4" stop-color="#99ff99"/><stop offset="0.6" stop-color="#66ff66"/><stop offset="0.8" stop-color="#33ff33"/><stop offset="1.0" stop-color="#00ff00"/></linearGradient><linearGradient id="w170" gradientUnits="userSpaceOnUse" x1="75.03" y1="101.76" x2="100.89" y2="72.48"><stop offset="0.0" stop-color="#ffffff"/><stop offset="0.1" stop-color="#e6ffe6"/><stop offset="0.2" stop-color="#ccffcc"/><stop offset="0.4" stop-color="#99ff99"/><stop offset="0.6" stop-color="#66ff66"/><stop offset="0.8" stop-color="#33ff33"/><stop offset="1.0" stop-color="#00ff00"/></linearGradient><linearGradient id="w171" gradientUnits="userSpaceOnUse" x1="75.03" y1="101.76" x2="100.87" y2="72.91"><stop offset="0.0" stop-color="#ffffff"/><stop offset="0.1" stop-color="#e6ffe6"/><stop offset="0.2" stop-color="#ccffcc"/><stop offset="0.4" stop-color="#99ff99"/><stop offset="0.6" stop-color="#66ff66"/><stop offset="0.8" stop-color="#33ff33"/><stop offset="1.0" stop-color="#00ff00"/></linearGradient><linearGradient id="w172" gradientUnits="userSpaceOnUse" x1="75.03" y1="101.76" x2="100.86" y2="73.27"><stop offset="0.0" stop-color="#ffffff"/><stop offset="0.1" stop-color="#e6ffe6"/><stop offset="0.2" stop-color="#ccffcc"/><stop offset="0.4" stop-color="#99ff99"/><stop offset="0.6" stop-color="#66ff66"/><stop offset="0.8" stop-color="#33ff33"/><stop offset="1.0" stop-color="#00ff00"/></linearGradient><linearGradient id="w173" gradientUnits="userSpaceOnUse" x1="75.03" y1="101.76" x2="100.85" y2="73.55"><stop offset="0.0" stop-color="#ffffff"/><stop offset="0.1" stop-color="#e6ffe6"/><stop offset="0.2" stop-color="#ccffcc"/><stop offset="0.4" stop-color="#99ff99"/><stop offset="0.6" stop-color="#66ff66"/><stop offset="0.8" stop-color="#33ff33"/><stop offset="1.0" stop-color="#00ff00"/></linearGradient><linearGradient id="w174" gradientUnits="userSpaceOnUse" x1="75.03" y1="101.76" x2="100.84" y2="73.75"><stop offset="0.0" stop-color="#ffffff"/><stop offset="0.1" stop-color="#e6ffe6"/><stop offset="0.2" stop-color="#ccffcc"/><stop offset="0.4" stop-color="#99ff99"/><stop offset="0.6" stop-color="#66ff66"/><stop offset="0.8" stop-color="#33ff33"/><stop offset="1.0" stop-color="#00ff00"/></linearGradient><linearGradient id="w175" gradientUnits="userSpaceOnUse" x1="75.03" y1="101.76" x2="100.84" y2="73.90"><stop offset="0.0" stop-color="#ffffff"/><stop offset="0.1" stop-color="#e6ffe6"/><stop offset="0.2" stop-color="#ccffcc"/><stop offset="0.4" stop-color="#99ff99"/><stop offset="0.6" stop-color="#66ff66"/><stop offset="0.8" stop-color="#33ff33"/><stop offset="1.0" stop-color="#00ff00"/></linearGradient><linearGradient id="w176" gradientUnits="userSpaceOnUse" x1="75.03" y1="101.76" x2="100.84" y2="73.90"><stop offset="0.0" stop-color="#ffffff"/><stop offset="0.1" stop-color="#e6ffe6"/><stop offset="0.2" stop-color="#ccffcc"/><stop offset="0.4" stop-color="#99ff99"/><stop offset="0.6" stop-color="#66ff66"/><stop offset="0.8" stop-color="#33ff33"/><stop offset="1.0" stop-color="#00ff00"/></linearGradient><linearGradient id="w177" gradientUnits="userSpaceOnUse" x1="75.03" y1="101.76" x2="100.84" y2="74.02"><stop offset="0.0" stop-color="#ffffff"/><stop offset="0.1" stop-color="#e6ffe6"/><stop offset="0.2" stop-color="#ccffcc"/><stop offset="0.4" stop-color="#99ff99"/><stop offset="0.6" stop-color="#66ff66"/><stop offset="0.8" stop-color="#33ff33"/><stop offset="1.0" stop-color="#00ff00"/></linearGradient><linearGradient id="w178" gradientUnits="userSpaceOnUse" x1="75.03" y1="101.76" x2="100.84" y2="74.02"><stop offset="0.0" stop-color="#ffffff"/><stop offset="0.1" stop-color="#e9fee6"/><stop offset="0.2" stop-color="#d2fecc"/><stop offset="0.4" stop-color="#a6fd99"/><stop offset="0.6" stop-color="#79fc66"/><stop offset="0.8" stop-color="#4cfb33"/><stop offset="1.0" stop-color="#20fa00"/></linearGradient><linearGradient id="w179" gradientUnits="userSpaceOnUse" x1="75.03" y1="101.76" x2="100.84" y2="74.12"><stop offset="0.0" stop-color="#ffffff"/><stop offset="0.1" stop-color="#ebfee6"/><stop offset="0.2" stop-color="#d7fdcc"/><stop offset="0.4" stop-color="#aefb99"/><stop offset="0.6" stop-color="#86f966"/><stop offset="0.8" stop-color="#5df833"/><stop offset="1.0" stop-color="#35f600"/></linearGradient><linearGradient id="w180" gradientUnits="userSpaceOnUse" x1="75.03" y1="101.76" x2="100.84" y2="74.12"><stop offset="0.0" stop-color="#ffffff"/><stop offset="0.1" stop-color="#ecfee6"/><stop offset="0.2" stop-color="#d9fdcc"/><stop offset="0.4" stop-color="#b4fa99"/><stop offset="0.6" stop-color="#8ef866"/><stop offset="0.8" stop-color="#69f533"/><stop offset="1.0" stop-color="#43f300"/></linearGradient><linearGradient id="w181" gradientUnits="userSpaceOnUse" x1="75.03" y1="101.76" x2="100.84" y2="74.22"><stop offset="0.0" stop-color="#ffffff"/><stop offset="0.1" stop-color="#edfee6"/><stop offset="0.2" stop-color="#dcfccc"/><stop offset="0.4" stop-color="#b9f999"/><stop offset="0.6" stop-color="#95f666"/><stop offset="0.8" stop-color="#72f433"/><stop offset="1.0" stop-color="#4ff100"/></linearGradient><linearGradient id="w182" gradientUnits="userSpaceOnUse" x1="75.03" y1="101.76" x2="100.84" y2="74.22"><stop offset="0.0" stop-color="#ffffff"/><stop offset="0.1" stop-color="#eefde6"/><stop offset="0.2" stop-color="#defccc"/><stop offset="0.4" stop-color="#bdf999"/><stop offset="0.6" stop-color="#9bf566"/><stop offset="0.8" stop-color="#7af233"/><stop offset="1.0" stop-color="#59ef00"/></linearGradient><linearGradient id="w183" gradientUnits="userSpaceOnUse" x1="75.03" y1="101.76" x2="100.85" y2="74.33"><stop offset="0.0" stop-color="#ffffff"/><stop offset="0.1" stop-color="#effde6"/><stop offset="0.2" stop-color="#e0fbcc"/><stop offset="0.4" stop-color="#c0f899"/><stop offset="0.6" stop-color="#a1f466"/><stop offset="0.8" stop-color="#81f133"/><stop offset="1.0" stop-color="#62ed00"/></linearGradient><linearGradient id="w184" gradientUnits="userSpaceOnUse" x1="75.03" y1="101.76" x2="100.85" y2="74.33"><stop offset="0.0" stop-color="#ffffff"/><stop offset="0.1" stop-color="#f0fde6"/><stop offset="0.2" stop-color="#e1fbcc"/><stop offset="0.4" stop-color="#c3f799"/><stop offset="0.6" stop-color="#a6f366"/><stop offset="0.8" stop-color="#88ef33"/><stop offset="1.0" stop-color="#6aec00"/></linearGradient><linearGradient id="w185" gradientUnits="userSpaceOnUse" x1="75.03" y1="101.76" x2="100.86" y2="74.44"><stop offset="0.0" stop-color="#ffffff"/><stop offset="0.1" stop-color="#f1fde6"/><stop offset="0.2" stop-color="#e3fbcc"/><stop offset="0.4" stop-color="#c6f799"/><stop offset="0.6" stop-color="#aaf266"/><stop offset="0.8" stop-color="#8eee33"/><stop offset="1.0" stop-color="#71ea00"/></linearGradient><linearGradient id="w186" gradientUnits="userSpaceOnUse" x1="75.03" y1="101.76" x2="100.86" y2="74.44"><stop offset="0.0" stop-color="#ffffff"/><stop offset="0.1" stop-color="#f2fde6"/><stop offset="0.2" stop-color="#e4fbcc"/><stop offset="0.4" stop-color="#c9f699"/><stop offset="0.6" stop-color="#aef266"/><stop offset="0.8" stop-color="#93ed33"/><stop offset="1.0" stop-color="#78e900"/></linearGradient><linearGradient id="w187" gradientUnits="userSpaceOnUse" x1="75.03" y1="101.76" x2="100.88" y2="74.57"><stop offset="0.0" stop-color="#ffffff"/><stop offset="0.1" stop-color="#f2fde6"/><stop offset="0.2" stop-color="#e5facc"/><stop offset="0.4" stop-color="#ccf699"/><stop offset="0.6" stop-color="#b2f166"/><stop offset="0.8" stop-color="#98ec33"/><stop offset="1.0" stop-color="#7ee700"/></linearGradient><linearGradient id="w188" gradientUnits="userSpaceOnUse" x1="75.03" y1="101.76" x2="100.88" y2="74.57"><stop offset="0.0" stop-color="#ffffff"/><stop offset="0.1" stop-color="#f3fde6"/><stop offset="0.2" stop-color="#e6facc"/><stop offset="0.4" stop-color="#cef599"/><stop offset="0.6" stop-color="#b5f066"/><stop offset="0.8" stop-color="#9deb33"/><stop offset="1.0" stop-color="#84e600"/></linearGradient><linearGradient id="w189" gradientUnits="userSpaceOnUse" x1="75.03" y1="101.76" x2="100.90" y2="74.73"><stop offset="0.0" stop-color="#ffffff"/><stop offset="0.1" stop-color="#f3fce6"/><stop offset="0.2" stop-color="#e8facc"/><stop offset="0.4" stop-color="#d0f599"/><stop offset="0.6" stop-color="#b9ef66"/><stop offset="0.8" stop-color="#a1ea33"/><stop offset="1.0" stop-color="#8ae500"/></linearGradient><linearGradient id="w190" gradientUnits="userSpaceOnUse" x1="75.03" y1="101.76" x2="100.90" y2="74.73"><stop offset="0.0" stop-color="#ffffff"/><stop offset="0.1" stop-color="#f4fce6"/><stop offset="0.2" stop-color="#e9facc"/><stop offset="0.4" stop-color="#d2f499"/><stop offset="0.6" stop-color="#bcef66"/><stop offset="0.8" stop-color="#a6e933"/><stop offset="1.0" stop-color="#8fe400"/></linearGradient><linearGradient id="w191" gradientUnits="userSpaceOnUse" x1="75.03" y1="101.76" x2="100.92" y2="74.87"><stop offset="0.0" stop-color="#ffffff"/><stop offset="0.1" stop-color="#f4fce6"/><stop offset="0.2" stop-color="#eaf9cc"/><stop offset="0.4" stop-color="#d4f499"/><stop offset="0.6" stop-color="#bfee66"/><stop offset="0.8" stop-color="#aae833"/><stop offset="1.0" stop-color="#94e300"/></linearGradient><linearGradient id="w192" gradientUnits="userSpaceOnUse" x1="75.03" y1="101.76" x2="100.92" y2="74.87"><stop offset="0.0" stop-color="#ffffff"/><stop offset="0.1" stop-color="#f5fce6"/><stop offset="0.2" stop-color="#ebf9cc"/><stop offset="0.4" stop-color="#d6f399"/><stop offset="0.6" stop-color="#c2ed66"/><stop offset="0.8" stop-color="#aee733"/><stop offset="1.0" stop-color="#99e200"/></linearGradient><linearGradient id="w193" gradientUnits="userSpaceOnUse" x1="75.03" y1="101.76" x2="100.95" y2="74.99"><stop offset="0.0" stop-color="#ffffff"/><stop offset="0.1" stop-color="#f5fce6"/><stop offset="0.2" stop-color="#ecf9cc"/><stop offset="0.4" stop-color="#d8f399"/><stop offset="0.6" stop-color="#c5ed66"/><stop offset="0.8" stop-color="#b2e733"/><stop offset="1.0" stop-color="#9ee000"/></linearGradient><linearGradient id="w194" gradientUnits="userSpaceOnUse" x1="75.03" y1="101.76" x2="100.95" y2="74.99"><stop offset="0.0" stop-color="#ffffff"/><stop offset="0.1" stop-color="#f6fce6"/><stop offset="0.2" stop-color="#edf9cc"/><stop offset="0.4" stop-color="#daf299"/><stop offset="0.6" stop-color="#c8ec66"/><stop offset="0.8" stop-color="#b5e633"/><stop offset="1.0" stop-color="#a3df00"/></linearGradient><linearGradient id="w195" gradientUnits="userSpaceOnUse" x1="75.03" y1="101.76" x2="100.97" y2="75.08"><stop offset="0.0" stop-color="#ffffff"/><stop offset="0.1" stop-color="#f6fce6"/><stop offset="0.2" stop-color="#eef8cc"/><stop offset="0.4" stop-color="#dcf299"/><stop offset="0.6" stop-color="#cbeb66"/><stop offset="0.8" stop-color="#b9e533"/><stop offset="1.0" stop-color="#a8de00"/></linearGradient><linearGradient id="w196" gradientUnits="userSpaceOnUse" x1="75.03" y1="101.76" x2="100.97" y2="75.08"><stop offset="0.0" stop-color="#ffffff"/><stop offset="0.1" stop-color="#f7fce6"/><stop offset="0.2" stop-color="#eef8cc"/><stop offset="0.4" stop-color="#def199"/><stop offset="0.6" stop-color="#cdeb66"/><stop offset="0.8" stop-color="#bde433"/><stop offset="1.0" stop-color="#acdd00"/></linearGradient><linearGradient id="w197" gradientUnits="userSpaceOnUse" x1="75.03" y1="101.76" x2="100.99" y2="75.14"><stop offset="0.0" stop-color="#ffffff"/><stop offset="0.1" stop-color="#f7fce6"/><stop offset="0.2" stop-color="#eff8cc"/><stop offset="0.4" stop-color="#e0f199"/><stop offset="0.6" stop-color="#d0ea66"/><stop offset="0.8" stop-color="#c0e333"/><stop offset="1.0" stop-color="#b1dc00"/></linearGradient><linearGradient id="w198" gradientUnits="userSpaceOnUse" x1="75.03" y1="101.76" x2="100.99" y2="75.14"><stop offset="0.0" stop-color="#ffffff"/><stop offset="0.1" stop-color="#f8fbe6"/><stop offset="0.2" stop-color="#f0f8cc"/><stop offset="0.4" stop-color="#e1f199"/><stop offset="0.6" stop-color="#d3e966"/><stop offset="0.8" stop-color="#c4e233"/><stop offset="1.0" stop-color="#b5db00"/></linearGradient><linearGradient id="w199" gradientUnits="userSpaceOnUse" x1="75.03" y1="101.76" x2="101.00" y2="75.18"><stop offset="0.0" stop-color="#ffffff"/><stop offset="0.1" stop-color="#f8fbe6"/><stop offset="0.2" stop-color="#f1f8cc"/><stop offset="0.4" stop-color="#e3f099"/><stop offset="0.6" stop-color="#d5e966"/><stop offset="0.8" stop-color="#c7e133"/><stop offset="1.0" stop-color="#bada00"/></linearGradient><linearGradient id="w200" gradientUnits="userSpaceOnUse" x1="75.03" y1="101.76" x2="101.00" y2="75.18"><stop offset="0.0" stop-color="#ffffff"/><stop offset="0.1" stop-color="#f8fbe6"/><stop offset="0.2" stop-color="#f2f7cc"/><stop offset="0.4" stop-color="#e5f099"/><stop offset="0.6" stop-color="#d8e866"/><stop offset="0.8" stop-color="#cbe133"/><stop offset="1.0" stop-color="#bed900"/></linearGradient><linearGradient id="w201" gradientUnits="userSpaceOnUse" x1="75.03" y1="101.76" x2="101.00" y2="75.19"><stop offset="0.0" stop-color="#ffffff"/><stop offset="0.1" stop-color="#f9fbe6"/><stop offset="0.2" stop-color="#f3f7cc"/><stop offset="0.4" stop-color="#e7ef99"/><stop offset="0.6" stop-color="#dae866"/><stop offset="0.8" stop-color="#cee033"/><stop offset="1.0" stop-color="#c2d800"/></linearGradient><linearGradient id="w202" gradientUnits="userSpaceOnUse" x1="75.03" y1="101.76" x2="101.00" y2="75.19"><stop offset="0.0" stop-color="#ffffff"/><stop offset="0.1" stop-color="#f9fbe6"/><stop offset="0.2" stop-color="#f4f7cc"/><stop offset="0.4" stop-color="#e8ef99"/><stop offset="0.6" stop-color="#dde766"/><stop offset="0.8" stop-color="#d2df33"/><stop offset="1.0" stop-color="#c6d700"/></linearGradient><linearGradient id="w203" gradientUnits="userSpaceOnUse" x1="75.03" y1="101.76" x2="101.00" y2="75.19"><stop offset="0.0" stop-color="#ffffff"/><stop offset="0.1" stop-color="#fafbe6"/><stop offset="0.2" stop-color="#f4f7cc"/><stop offset="0.4" stop-color="#eaef99"/><stop offset="0.6" stop-color="#dfe666"/><stop offset="0.8" stop-color="#d5de33"/><stop offset="1.0" stop-color="#cad600"/></linearGradient><linearGradient id="w204" gradientUnits="userSpaceOnUse" x1="75.03" y1="101.76" x2="101.00" y2="75.19"><stop offset="0.0" stop-color="#ffffff"/><stop offset="0.1" stop-color="#fafbe6"/><stop offset="0.2" stop-color="#f5f7cc"/><stop offset="0.4" stop-color="#ecee99"/><stop offset="0.6" stop-color="#e2e666"/><stop offset="0.8" stop-color="#d8dd33"/><stop offset="1.0" stop-color="#cfd500"/></linearGradient><linearGradient id="w205" gradientUnits="userSpaceOnUse" x1="75.03" y1="101.76" x2="101.01" y2="75.21"><stop offset="0.0" stop-color="#ffffff"/><stop offset="0.1" stop-color="#fbfbe6"/><stop offset="0.2" stop-color="#f6f6cc"/><stop offset="0.4" stop-color="#edee99"/><stop offset="0.6" stop-color="#e4e566"/><stop offset="0.8" stop-color="#dcdd33"/><stop offset="1.0" stop-color="#d3d400"/></linearGradient><linearGradient id="w206" gradientUnits="userSpaceOnUse" x1="75.03" y1="101.76" x2="101.01" y2="75.21"><stop offset="0.0" stop-color="#ffffff"/><stop offset="0.1" stop-color="#fbfae6"/><stop offset="0.2" stop-color="#f6f6cc"/><stop offset="0.4" stop-color="#eeec99"/><stop offset="0.6" stop-color="#e5e366"/><stop offset="0.8" stop-color="#ddda33"/><stop offset="1.0" stop-color="#d4d100"/></linearGradient><linearGradient id="w207" gradientUnits="userSpaceOnUse" x1="75.03" y1="101.76" x2="101.04" y2="75.25"><stop offset="0.0" stop-color="#ffffff"/><stop offset="0.1" stop-color="#fbfae6"/><stop offset="0.2" stop-color="#f7f5cc"/><stop offset="0.4" stop-color="#eeeb99"/><stop offset="0.6" stop-color="#e6e166"/><stop offset="0.8" stop-color="#ded733"/><stop offset="1.0" stop-color="#d5cd00"/></linearGradient><linearGradient id="w208" gradientUnits="userSpaceOnUse" x1="75.03" y1="101.76" x2="101.04" y2="75.25"><stop offset="0.0" stop-color="#ffffff"/><stop offset="0.1" stop-color="#fbfae6"/><stop offset="0.2" stop-color="#f7f4cc"/><stop offset="0.4" stop-color="#efe999"/><stop offset="0.6" stop-color="#e7de66"/><stop offset="0.8" stop-color="#dfd433"/><stop offset="1.0" stop-color="#d6c900"/></linearGradient><linearGradient id="w209" gradientUnits="userSpaceOnUse" x1="75.03" y1="101.76" x2="101.06" y2="75.28"><stop offset="0.0" stop-color="#ffffff"/><stop offset="0.1" stop-color="#fbf9e6"/><stop offset="0.2" stop-color="#f7f3cc"/><stop offset="0.4" stop-color="#efe899"/><stop offset="0.6" stop-color="#e7dc66"/><stop offset="0.8" stop-color="#dfd133"/><stop offset="1.0" stop-color="#d7c500"/></linearGradient><linearGradient id="w210" gradientUnits="userSpaceOnUse" x1="75.03" y1="101.76" x2="101.06" y2="75.28"><stop offset="0.0" stop-color="#ffffff"/><stop offset="0.1" stop-color="#fbf9e6"/><stop offset="0.2" stop-color="#f7f3cc"/><stop offset="0.4" stop-color="#f0e699"/><stop offset="0.6" stop-color="#e8da66"/><stop offset="0.8" stop-color="#e0ce33"/><stop offset="1.0" stop-color="#d8c100"/></linearGradient><linearGradient id="w211" gradientUnits="userSpaceOnUse" x1="75.03" y1="101.76" x2="101.07" y2="75.31"><stop offset="0.0" stop-color="#ffffff"/><stop offset="0.1" stop-color="#fbf8e6"/><stop offset="0.2" stop-color="#f7f2cc"/><stop offset="0.4" stop-color="#f0e599"/><stop offset="0.6" stop-color="#e8d866"/><stop offset="0.8" stop-color="#e1cb33"/><stop offset="1.0" stop-color="#d9be00"/></linearGradient><linearGradient id="w212" gradientUnits="userSpaceOnUse" x1="75.03" y1="101.76" x2="101.07" y2="75.31"><stop offset="0.0" stop-color="#ffffff"/><stop offset="0.1" stop-color="#fbf8e6"/><stop offset="0.2" stop-color="#f8f1cc"/><stop offset="0.4" stop-color="#f0e399"/><stop offset="0.6" stop-color="#e9d666"/><stop offset="0.8" stop-color="#e1c833"/><stop offset="1.0" stop-color="#daba00"/></linearGradient><linearGradient id="w213" gradientUnits="userSpaceOnUse" x1="75.03" y1="101.76" x2="101.08" y2="75.32"><stop offset="0.0" stop-color="#ffffff"/><stop offset="0.1" stop-color="#fbf8e6"/><stop offset="0.2" stop-color="#f8f1cc"/><stop offset="0.4" stop-color="#f1e299"/><stop offset="0.6" stop-color="#e9d466"/><stop offset="0.8" stop-color="#e2c533"/><stop offset="1.0" stop-color="#dbb700"/></linearGradient><linearGradient id="w214" gradientUnits="userSpaceOnUse" x1="75.03" y1="101.76" x2="101.08" y2="75.32"><stop offset="0.0" stop-color="#ffffff"/><stop offset="0.1" stop-color="#fbf7e6"/><stop offset="0.2" stop-color="#f8f0cc"/><stop offset="0.4" stop-color="#f1e199"/><stop offset="0.6" stop-color="#ead266"/><stop offset="0.8" stop-color="#e3c233"/><stop offset="1.0" stop-color="#dcb300"/></linearGradient><linearGradient id="w215" gradientUnits="userSpaceOnUse" x1="75.03" y1="101.76" x2="101.08" y2="75.32"><stop offset="0.0" stop-color="#ffffff"/><stop offset="0.1" stop-color="#fcf7e6"/><stop offset="0.2" stop-color="#f8efcc"/><stop offset="0.4" stop-color="#f1df99"/><stop offset="0.6" stop-color="#ead066"/><stop offset="0.8" stop-color="#e3c033"/><stop offset="1.0" stop-color="#dcb000"/></linearGradient><linearGradient id="w216" gradientUnits="userSpaceOnUse" x1="75.03" y1="101.76" x2="101.08" y2="75.32"><stop offset="0.0" stop-color="#ffffff"/><stop offset="0.1" stop-color="#fcf7e6"/><stop offset="0.2" stop-color="#f8efcc"/><stop offset="0.4" stop-color="#f1de99"/><stop offset="0.6" stop-color="#ebce66"/><stop offset="0.8" stop-color="#e4bd33"/><stop offset="1.0" stop-color="#ddad00"/></linearGradient><linearGradient id="w217" gradientUnits="userSpaceOnUse" x1="75.03" y1="101.76" x2="101.08" y2="75.32"><stop offset="0.0" stop-color="#ffffff"/><stop offset="0.1" stop-color="#fcf6e6"/><stop offset="0.2" stop-color="#f8eecc"/><stop offset="0.4" stop-color="#f2dd99"/><stop offset="0.6" stop-color="#ebcc66"/><stop offset="0.8" stop-color="#e5ba33"/><stop offset="1.0" stop-color="#dea900"/></linearGradient><linearGradient id="w218" gradientUnits="userSpaceOnUse" x1="75.03" y1="101.76" x2="101.08" y2="75.32"><stop offset="0.0" stop-color="#ffffff"/><stop offset="0.1" stop-color="#fcf6e6"/><stop offset="0.2" stop-color="#f9edcc"/><stop offset="0.4" stop-color="#f2db99"/><stop offset="0.6" stop-color="#ecca66"/><stop offset="0.8" stop-color="#e5b833"/><stop offset="1.0" stop-color="#dfa600"/></linearGradient><linearGradient id="w219" gradientUnits="userSpaceOnUse" x1="75.03" y1="101.76" x2="101.06" y2="75.30"><stop offset="0.0" stop-color="#ffffff"/><stop offset="0.1" stop-color="#fcf6e6"/><stop offset="0.2" stop-color="#f9edcc"/><stop offset="0.4" stop-color="#f2da99"/><stop offset="0.6" stop-color="#ecc866"/><stop offset="0.8" stop-color="#e6b533"/><stop offset="1.0" stop-color="#dfa300"/></linearGradient><linearGradient id="w220" gradientUnits="userSpaceOnUse" x1="75.03" y1="101.76" x2="101.06" y2="75.30"><stop offset="0.0" stop-color="#ffffff"/><stop offset="0.1" stop-color="#fcf5e6"/><stop offset="0.2" stop-color="#f9eccc"/><stop offset="0.4" stop-color="#f3d999"/><stop offset="0.6" stop-color="#ecc666"/><stop offset="0.8" stop-color="#e6b333"/><stop offset="1.0" stop-color="#e0a000"/></linearGradient><linearGradient id="w221" gradientUnits="userSpaceOnUse" x1="75.03" y1="101.76" x2="101.05" y2="75.29"><stop offset="0.0" stop-color="#ffffff"/><stop offset="0.1" stop-color="#fcf5e6"/><stop offset="0.2" stop-color="#f9ebcc"/><stop offset="0.4" stop-color="#f3d899"/><stop offset="0.6" stop-color="#edc466"/><stop offset="0.8" stop-color="#e7b033"/><stop offset="1.0" stop-color="#e19d00"/></linearGradient><linearGradient id="w222" gradientUnits="userSpaceOnUse" x1="75.03" y1="101.76" x2="101.05" y2="75.29"><stop offset="0.0" stop-color="#ffffff"/><stop offset="0.1" stop-color="#fcf5e6"/><stop offset="0.2" stop-color="#f9ebcc"/><stop offset="0.4" stop-color="#f3d799"/><stop offset="0.6" stop-color="#edc266"/><stop offset="0.8" stop-color="#e7ae33"/><stop offset="1.0" stop-color="#e19a00"/></linearGradient><linearGradient id="w223" gradientUnits="userSpaceOnUse" x1="75.03" y1="101.76" x2="101.04" y2="75.29"><stop offset="0.0" stop-color="#ffffff"/><stop offset="0.1" stop-color="#fcf5e6"/><stop offset="0.2" stop-color="#f9eacc"/><stop offset="0.4" stop-color="#f3d599"/><stop offset="0.6" stop-color="#eec166"/><stop offset="0.8" stop-color="#e8ac33"/><stop offset="1.0" stop-color="#e29700"/></linearGradient><linearGradient id="w224" gradientUnits="userSpaceOnUse" x1="75.03" y1="101.76" x2="101.04" y2="75.29"><stop offset="0.0" stop-color="#ffffff"/><stop offset="0.1" stop-color="#fcf4e6"/><stop offset="0.2" stop-color="#f9eacc"/><stop offset="0.4" stop-color="#f4d499"/><stop offset="0.6" stop-color="#eebf66"/><stop offset="0.8" stop-color="#e8a933"/><stop offset="1.0" stop-color="#e39400"/></linearGradient><linearGradient id="w225" gradientUnits="userSpaceOnUse" x1="75.03" y1="101.76" x2="101.04" y2="75.28"><stop offset="0.0" stop-color="#ffffff"/><stop offset="0.1" stop-color="#fcf4e6"/><stop offset="0.2" stop-color="#f9e9cc"/><stop offset="0.4" stop-color="#f4d399"/><stop offset="0.6" stop-color="#eebd66"/><stop offset="0.8" stop-color="#e9a733"/><stop offset="1.0" stop-color="#e39100"/></linearGradient><linearGradient id="w226" gradientUnits="userSpaceOnUse" x1="75.03" y1="101.76" x2="101.04" y2="75.28"><stop offset="0.0" stop-color="#ffffff"/><stop offset="0.1" stop-color="#fcf4e6"/><stop offset="0.2" stop-color="#fae8cc"/><stop offset="0.4" stop-color="#f4d299"/><stop offset="0.6" stop-color="#efbb66"/><stop offset="0.8" stop-color="#e9a533"/><stop offset="1.0" stop-color="#e48e00"/></linearGradient><linearGradient id="w227" gradientUnits="userSpaceOnUse" x1="75.03" y1="101.76" x2="101.04" y2="75.28"><stop offset="0.0" stop-color="#ffffff"/><stop offset="0.1" stop-color="#fcf3e6"/><stop offset="0.2" stop-color="#fae8cc"/><stop offset="0.4" stop-color="#f4d199"/><stop offset="0.6" stop-color="#efb966"/><stop offset="0.8" stop-color="#eaa233"/><stop offset="1.0" stop-color="#e58b00"/></linearGradient><linearGradient id="w228" gradientUnits="userSpaceOnUse" x1="75.03" y1="101.76" x2="101.04" y2="75.28"><stop offset="0.0" stop-color="#ffffff"/><stop offset="0.1" stop-color="#fcf3e6"/><stop offset="0.2" stop-color="#fae7cc"/><stop offset="0.4" stop-color="#f5d099"/><stop offset="0.6" stop-color="#f0b866"/><stop offset="0.8" stop-color="#eaa033"/><stop offset="1.0" stop-color="#e58800"/></linearGradient><linearGradient id="w229" gradientUnits="userSpaceOnUse" x1="75.03" y1="101.76" x2="101.04" y2="75.29"><stop offset="0.0" stop-color="#ffffff"/><stop offset="0.1" stop-color="#fcf3e6"/><stop offset="0.2" stop-color="#fae7cc"/><stop offset="0.4" stop-color="#f5ce99"/><stop offset="0.6" stop-color="#f0b666"/><stop offset="0.8" stop-color="#eb9e33"/><stop offset="1.0" stop-color="#e68500"/></linearGradient><linearGradient id="w230" gradientUnits="userSpaceOnUse" x1="75.03" y1="101.76" x2="101.04" y2="75.29"><stop offset="0.0" stop-color="#ffffff"/><stop offset="0.1" stop-color="#fdf3e6"/><stop offset="0.2" stop-color="#fae6cc"/><stop offset="0.4" stop-color="#f5cd99"/><stop offset="0.6" stop-color="#f0b466"/><stop offset="0.8" stop-color="#eb9b33"/><stop offset="1.0" stop-color="#e68300"/></linearGradient><linearGradient id="w231" gradientUnits="userSpaceOnUse" x1="75.03" y1="101.76" x2="101.05" y2="75.29"><stop offset="0.0" stop-color="#ffffff"/><stop offset="0.1" stop-color="#fdf2e6"/><stop offset="0.2" stop-color="#fae6cc"/><stop offset="0.4" stop-color="#f5cc99"/><stop offset="0.6" stop-color="#f1b366"/><stop offset="0.8" stop-color="#ec9933"/><stop offset="1.0" stop-color="#e78000"/></linearGradient><linearGradient id="w232" gradientUnits="userSpaceOnUse" x1="75.03" y1="101.76" x2="101.05" y2="75.29"><stop offset="0.0" stop-color="#ffffff"/><stop offset="0.1" stop-color="#fdf2e6"/><stop offset="0.2" stop-color="#fae5cc"/><stop offset="0.4" stop-color="#f6cb99"/><stop offset="0.6" stop-color="#f1b166"/><stop offset="0.8" stop-color="#ec9733"/><stop offset="1.0" stop-color="#e87d00"/></linearGradient><linearGradient id="w233" gradientUnits="userSpaceOnUse" x1="75.03" y1="101.76" x2="101.06" y2="75.29"><stop offset="0.0" stop-color="#ffffff"/><stop offset="0.1" stop-color="#fdf2e6"/><stop offset="0.2" stop-color="#fae4cc"/><stop offset="0.4" stop-color="#f6ca99"/><stop offset="0.6" stop-color="#f1af66"/><stop offset="0.8" stop-color="#ed9533"/><stop offset="1.0" stop-color="#e87a00"/></linearGradient><linearGradient id="w234" gradientUnits="userSpaceOnUse" x1="75.03" y1="101.76" x2="101.06" y2="75.29"><stop offset="0.0" stop-color="#ffffff"/><stop offset="0.1" stop-color="#fdf1e6"/><stop offset="0.2" stop-color="#fbe4cc"/><stop offset="0.4" stop-color="#f6c999"/><stop offset="0.6" stop-color="#f2ae66"/><stop offset="0.8" stop-color="#ed9333"/><stop offset="1.0" stop-color="#e97700"/></linearGradient><linearGradient id="w235" gradientUnits="userSpaceOnUse" x1="75.03" y1="101.76" x2="101.07" y2="75.30"><stop offset="0.0" stop-color="#ffffff"/><stop offset="0.1" stop-color="#fdf1e6"/><stop offset="0.2" stop-color="#fbe3cc"/><stop offset="0.4" stop-color="#f6c899"/><stop offset="0.6" stop-color="#f2ac66"/><stop offset="0.8" stop-color="#ee9033"/><stop offset="1.0" stop-color="#e97500"/></linearGradient><linearGradient id="w236" gradientUnits="userSpaceOnUse" x1="75.03" y1="101.76" x2="101.07" y2="75.30"><stop offset="0.0" stop-color="#ffffff"/><stop offset="0.1" stop-color="#fdf1e6"/><stop offset="0.2" stop-color="#fbe3cc"/><stop offset="0.4" stop-color="#f7c799"/><stop offset="0.6" stop-color="#f2aa66"/><stop offset="0.8" stop-color="#ee8e33"/><stop offset="1.0" stop-color="#ea7200"/></linearGradient><linearGradient id="w237" gradientUnits="userSpaceOnUse" x1="75.03" y1="101.76" x2="101.08" y2="75.30"><stop offset="0.0" stop-color="#ffffff"/><stop offset="0.1" stop-color="#fdf1e6"/><stop offset="0.2" stop-color="#fbe2cc"/><stop offset="0.4" stop-color="#f7c699"/><stop offset="0.6" stop-color="#f3a966"/><stop offset="0.8" stop-color="#ef8c33"/><stop offset="1.0" stop-color="#ea6f00"/></linearGradient><linearGradient id="w238" gradientUnits="userSpaceOnUse" x1="75.03" y1="101.76" x2="101.08" y2="75.30"><stop offset="0.0" stop-color="#ffffff"/><stop offset="0.1" stop-color="#fdf0e6"/><stop offset="0.2" stop-color="#fbe2cc"/><stop offset="0.4" stop-color="#f7c499"/><stop offset="0.6" stop-color="#f3a766"/><stop offset="0.8" stop-color="#ef8a33"/><stop offset="1.0" stop-color="#eb6d00"/></linearGradient><linearGradient id="w239" gradientUnits="userSpaceOnUse" x1="75.03" y1="101.76" x2="101.10" y2="75.31"><stop offset="0.0" stop-color="#ffffff"/><stop offset="0.1" stop-color="#fdf0e6"/><stop offset="0.2" stop-color="#fbe1cc"/><stop offset="0.4" stop-color="#f7c399"/><stop offset="0.6" stop-color="#f3a566"/><stop offset="0.8" stop-color="#f08733"/><stop offset="1.0" stop-color="#ec6900"/></linearGradient><linearGradient id="w240" gradientUnits="userSpaceOnUse" x1="75.03" y1="101.76" x2="101.11" y2="75.31"><stop offset="0.0" stop-color="#ffffff"/><stop offset="0.1" stop-color="#fdefe6"/><stop offset="0.2" stop-color="#fbe0cc"/><stop offset="0.4" stop-color="#f8c199"/><stop offset="0.6" stop-color="#f4a166"/><stop offset="0.8" stop-color="#f08233"/><stop offset="1.0" stop-color="#ed6300"/></linearGradient><linearGradient id="w241" gradientUnits="userSpaceOnUse" x1="75.03" y1="101.76" x2="101.12" y2="75.31"><stop offset="0.0" stop-color="#ffffff"/><stop offset="0.1" stop-color="#fdefe6"/><stop offset="0.2" stop-color="#fcdfcc"/><stop offset="0.4" stop-color="#f8be99"/><stop offset="0.6" stop-color="#f59e66"/><stop offset="0.8" stop-color="#f17e33"/><stop offset="1.0" stop-color="#ee5e00"/></linearGradient><linearGradient id="w242" gradientUnits="userSpaceOnUse" x1="75.03" y1="101.76" x2="101.12" y2="75.31"><stop offset="0.0" stop-color="#ffffff"/><stop offset="0.1" stop-color="#fdeee6"/><stop offset="0.2" stop-color="#fcdecc"/><stop offset="0.4" stop-color="#f9bc99"/><stop offset="0.6" stop-color="#f59b66"/><stop offset="0.8" stop-color="#f27933"/><stop offset="1.0" stop-color="#ef5800"/></linearGradient><linearGradient id="w243" gradientUnits="userSpaceOnUse" x1="75.03" y1="101.76" x2="101.11" y2="75.31"><stop offset="0.0" stop-color="#ffffff"/><stop offset="0.1" stop-color="#feeee6"/><stop offset="0.2" stop-color="#fcdccc"/><stop offset="0.4" stop-color="#f9ba99"/><stop offset="0.6" stop-color="#f69766"/><stop offset="0.8" stop-color="#f37533"/><stop offset="1.0" stop-color="#f05200"/></linearGradient><linearGradient id="w244" gradientUnits="userSpaceOnUse" x1="75.03" y1="101.76" x2="101.09" y2="75.31"><stop offset="0.0" stop-color="#ffffff"/><stop offset="0.1" stop-color="#feede6"/><stop offset="0.2" stop-color="#fcdbcc"/><stop offset="0.4" stop-color="#fab899"/><stop offset="0.6" stop-color="#f79466"/><stop offset="0.8" stop-color="#f47033"/><stop offset="1.0" stop-color="#f14c00"/></linearGradient><linearGradient id="w245" gradientUnits="userSpaceOnUse" x1="75.03" y1="101.76" x2="101.06" y2="75.30"><stop offset="0.0" stop-color="#ffffff"/><stop offset="0.1" stop-color="#feede6"/><stop offset="0.2" stop-color="#fcdacc"/><stop offset="0.4" stop-color="#fab599"/><stop offset="0.6" stop-color="#f79066"/><stop offset="0.8" stop-color="#f56b33"/><stop offset="1.0" stop-color="#f24700"/></linearGradient><linearGradient id="w246" gradientUnits="userSpaceOnUse" x1="75.03" y1="101.76" x2="101.02" y2="75.30"><stop offset="0.0" stop-color="#ffffff"/><stop offset="0.1" stop-color="#feece6"/><stop offset="0.2" stop-color="#fdd9cc"/><stop offset="0.4" stop-color="#fab399"/><stop offset="0.6" stop-color="#f88d66"/><stop offset="0.8" stop-color="#f66633"/><stop offset="1.0" stop-color="#f44000"/></linearGradient><linearGradient id="w247" gradientUnits="userSpaceOnUse" x1="75.03" y1="101.76" x2="100.98" y2="75.29"><stop offset="0.0" stop-color="#ffffff"/><stop offset="0.1" stop-color="#feebe6"/><stop offset="0.2" stop-color="#fdd8cc"/><stop offset="0.4" stop-color="#fbb099"/><stop offset="0.6" stop-color="#f98966"/><stop offset="0.8" stop-color="#f76133"/><stop offset="1.0" stop-color="#f53a00"/></linearGradient><linearGradient id="w248" gradientUnits="userSpaceOnUse" x1="75.03" y1="101.76" x2="100.95" y2="75.29"><stop offset="0.0" stop-color="#ffffff"/><stop offset="0.1" stop-color="#feebe6"/><stop offset="0.2" stop-color="#fdd6cc"/><stop offset="0.4" stop-color="#fbad99"/><stop offset="0.6" stop-color="#fa8466"/><stop offset="0.8" stop-color="#f85b33"/><stop offset="1.0" stop-color="#f63300"/></linearGradient><linearGradient id="w249" gradientUnits="userSpaceOnUse" x1="75.03" y1="101.76" x2="100.93" y2="75.29"><stop offset="0.0" stop-color="#ffffff"/><stop offset="0.1" stop-color="#feeae6"/><stop offset="0.2" stop-color="#fed5cc"/><stop offset="0.4" stop-color="#fcaa99"/><stop offset="0.6" stop-color="#fb8066"/><stop offset="0.8" stop-color="#f95533"/><stop offset="1.0" stop-color="#f82b00"/></linearGradient><linearGradient id="w250" gradientUnits="userSpaceOnUse" x1="75.03" y1="101.76" x2="100.93" y2="75.29"><stop offset="0.0" stop-color="#ffffff"/><stop offset="0.1" stop-color="#fee9e6"/><stop offset="0.2" stop-color="#fed3cc"/><stop offset="0.4" stop-color="#fda699"/><stop offset="0.6" stop-color="#fc7a66"/><stop offset="0.8" stop-color="#fa4e33"/><stop offset="1.0" stop-color="#f92100"/></linearGradient><linearGradient id="w251" gradientUnits="userSpaceOnUse" x1="75.03" y1="101.76" x2="100.94" y2="75.29"><stop offset="0.0" stop-color="#ffffff"/><stop offset="0.1" stop-color="#ffe8e6"/><stop offset="0.2" stop-color="#fed0cc"/><stop offset="0.4" stop-color="#fea199"/><stop offset="0.6" stop-color="#fd7266"/><stop offset="0.8" stop-color="#fc4333"/><stop offset="1.0" stop-color="#fb1500"/></linearGradient><linearGradient id="w252" gradientUnits="userSpaceOnUse" x1="75.03" y1="101.76" x2="100.97" y2="75.29"><stop offset="0.0" stop-color="#ffffff"/><stop offset="0.1" stop-color="#ffe6e6"/><stop offset="0.2" stop-color="#ffcccc"/><stop offset="0.4" stop-color="#ff9999"/><stop offset="0.6" stop-color="#ff6666"/><stop offset="0.8" stop-color="#ff3333"/><stop offset="1.0" stop-color="#ff0000"/></linearGradient><linearGradient id="w253" gradientUnits="userSpaceOnUse" x1="75.03" y1="101.76" x2="101.01" y2="75.29"><stop offset="0.0" stop-color="#ffffff"/><stop offset="0.1" stop-color="#ffe6e6"/><stop offset="0.2" stop-color="#ffcccc"/><stop offset="0.4" stop-color="#ff9999"/><stop offset="0.6" stop-color="#ff6666"/><stop offset="0.8" stop-color="#ff3333"/><stop offset="1.0" stop-color="#ff0000"/></linearGradient><linearGradient id="w254" gradientUnits="userSpaceOnUse" x1="75.03" y1="101.76" x2="101.08" y2="75.29"><stop offset="0.0" stop-color="#ffffff"/><stop offset="0.1" stop-color="#ffe6e6"/><stop offset="0.2" stop-color="#ffcccc"/><stop offset="0.4" stop-color="#ff9999"/><stop offset="0.6" stop-color="#ff6666"/><stop offset="0.8" stop-color="#ff3333"/><stop offset="1.0" stop-color="#ff0000"/></linearGradient><linearGradient id="w255" gradientUnits="userSpaceOnUse" x1="75.03" y1="101.76" x2="101.13" y2="75.29"><stop offset="0.0" stop-color="#ffffff"/><stop offset="0.1" stop-color="#ffe6e6"/><stop offset="0.2" stop-color="#ffcccc"/><stop offset="0.4" stop-color="#ff9999"/><stop offset="0.6" stop-color="#ff6666"/><stop offset="0.8" stop-color="#ff3333"/><stop offset="1.0" stop-color="#ff0000"/></linearGradient><linearGradient id="w256" gradientUnits="userSpaceOnUse" x1="75.03" y1="101.76" x2="101.20" y2="75.29"><stop offset="0.0" stop-color="#ffffff"/><stop offset="0.1" stop-color="#ffe6e6"/><stop offset="0.2" stop-color="#ffcccc"/><stop offset="0.4" stop-color="#ff9999"/><stop offset="0.6" stop-color="#ff6666"/><stop offset="0.8" stop-color="#ff3333"/><stop offset="1.0" stop-color="#ff0000"/></linearGradient><linearGradient id="w257" gradientUnits="userSpaceOnUse" x1="75.03" y1="101.76" x2="101.23" y2="75.29"><stop offset="0.0" stop-color="#ffffff"/><stop offset="0.1" stop-color="#ffe6e6"/><stop offset="0.2" stop-color="#ffcccc"/><stop offset="0.4" stop-color="#ff9999"/><stop offset="0.6" stop-color="#ff6666"/><stop offset="0.8" stop-color="#ff3333"/><stop offset="1.0" stop-color="#ff0000"/></linearGradient><linearGradient id="w258" gradientUnits="userSpaceOnUse" x1="75.03" y1="101.76" x2="101.17" y2="75.29"><stop offset="0.0" stop-color="#ffffff"/><stop offset="0.1" stop-color="#ffe6e6"/><stop offset="0.2" stop-color="#ffcccc"/><stop offset="0.4" stop-color="#ff9999"/><stop offset="0.6" stop-color="#ff6666"/><stop offset="0.8" stop-color="#ff3333"/><stop offset="1.0" stop-color="#ff0000"/></linearGradient><linearGradient id="w259" gradientUnits="userSpaceOnUse" x1="75.03" y1="101.76" x2="101.05" y2="75.30"><stop offset="0.0" stop-color="#ffffff"/><stop offset="0.1" stop-color="#ffe6e6"/><stop offset="0.2" stop-color="#ffcccc"/><stop offset="0.4" stop-color="#ff9999"/><stop offset="0.6" stop-color="#ff6666"/><stop offset="0.8" stop-color="#ff3333"/><stop offset="1.0" stop-color="#ff0000"/></linearGradient><linearGradient id="w260" gradientUnits="userSpaceOnUse" x1="75.03" y1="101.76" x2="100.97" y2="75.31"><stop offset="0.0" stop-color="#ffffff"/><stop offset="0.1" stop-color="#ffe6e6"/><stop offset="0.2" stop-color="#ffcccc"/><stop offset="0.4" stop-color="#ff9999"/><stop offset="0.6" stop-color="#ff6666"/><stop offset="0.8" stop-color="#ff3333"/><stop offset="1.0" stop-color="#ff0000"/></linearGradient><linearGradient id="w261" gradientUnits="userSpaceOnUse" x1="75.03" y1="101.76" x2="100.95" y2="75.31"><stop offset="0.0" stop-color="#ffffff"/><stop offset="0.1" stop-color="#ffe6e6"/><stop offset="0.2" stop-color="#ffcccc"/><stop offset="0.4" stop-color="#ff9999"/><stop offset="0.6" stop-color="#ff6666"/><stop offset="0.8" stop-color="#ff3333"/><stop offset="1.0" stop-color="#ff0000"/></linearGradient><linearGradient id="w262" gradientUnits="userSpaceOnUse" x1="75.03" y1="101.76" x2="101.04" y2="75.30"><stop offset="0.0" stop-color="#ffffff"/><stop offset="0.1" stop-color="#ffe6e6"/><stop offset="0.2" stop-color="#ffcccc"/><stop offset="0.4" stop-color="#ff9999"/><stop offset="0.6" stop-color="#ff6666"/><stop offset="0.8" stop-color="#ff3333"/><stop offset="1.0" stop-color="#ff0000"/></linearGradient><linearGradient id="w263" gradientUnits="userSpaceOnUse" x1="75.03" y1="101.76" x2="101.21" y2="75.28"><stop offset="0.0" stop-color="#ffffff"/><stop offset="0.1" stop-color="#ffe6e6"/><stop offset="0.2" stop-color="#ffcccc"/><stop offset="0.4" stop-color="#ff9999"/><stop offset="0.6" stop-color="#ff6666"/><stop offset="0.8" stop-color="#ff3333"/><stop offset="1.0" stop-color="#ff0000"/></linearGradient><linearGradient id="w264" gradientUnits="userSpaceOnUse" x1="75.03" y1="101.76" x2="101.21" y2="75.28"><stop offset="0.0" stop-color="#ffffff"/><stop offset="0.1" stop-color="#ffe6e6"/><stop offset="0.2" stop-color="#ffcccc"/><stop offset="0.4" stop-color="#ff9999"/><stop offset="0.6" stop-color="#ff6666"/><stop offset="0.8" stop-color="#ff3333"/><stop offset="1.0" stop-color="#ff0000"/></linearGradient><linearGradient id="w265" gradientUnits="userSpaceOnUse" x1="75.03" y1="101.76" x2="100.88" y2="75.32"><stop offset="0.0" stop-color="#ffffff"/><stop offset="0.1" stop-color="#ffe6e6"/><stop offset="0.2" stop-color="#ffcccc"/><stop offset="0.4" stop-color="#ff9999"/><stop offset="0.6" stop-color="#ff6666"/><stop offset="0.8" stop-color="#ff3333"/><stop offset="1.0" stop-color="#ff0000"/></linearGradient><linearGradient id="w266" gradientUnits="userSpaceOnUse" x1="75.03" y1="101.76" x2="100.70" y2="75.35"><stop offset="0.0" stop-color="#ffffff"/><stop offset="0.1" stop-color="#ffe6e6"/><stop offset="0.2" stop-color="#ffcccc"/><stop offset="0.4" stop-color="#ff9999"/><stop offset="0.6" stop-color="#ff6666"/><stop offset="0.8" stop-color="#ff3333"/><stop offset="1.0" stop-color="#ff0000"/></linearGradient><linearGradient id="w267" gradientUnits="userSpaceOnUse" x1="75.03" y1="101.76" x2="101.12" y2="75.29"><stop offset="0.0" stop-color="#ffffff"/><stop offset="0.1" stop-color="#ffe6e6"/><stop offset="0.2" stop-color="#ffcccc"/><stop offset="0.4" stop-color="#ff9999"/><stop offset="0.6" stop-color="#ff6666"/><stop offset="0.8" stop-color="#ff3333"/><stop offset="1.0" stop-color="#ff0000"/></linearGradient><linearGradient id="w268" gradientUnits="userSpaceOnUse" x1="75.03" y1="101.76" x2="101.23" y2="75.27"><stop offset="0.0" stop-color="#ffffff"/><stop offset="0.1" stop-color="#ffe6e6"/><stop offset="0.2" stop-color="#ffcccc"/><stop offset="0.4" stop-color="#ff9999"/><stop offset="0.6" stop-color="#ff6666"/><stop offset="0.8" stop-color="#ff3333"/><stop offset="1.0" stop-color="#ff0000"/></linearGradient><linearGradient id="w269" gradientUnits="userSpaceOnUse" x1="75.03" y1="101.76" x2="103.56" y2="138.49"><stop offset="0.0" stop-color="#ffffff"/><stop offset="0.1" stop-color="#ffe6e6"/><stop offset="0.2" stop-color="#ffcccc"/><stop offset="0.4" stop-color="#ff9999"/><stop offset="0.6" stop-color="#ff6666"/><stop offset="0.8" stop-color="#ff3333"/><stop offset="1.0" stop-color="#ff0000"/></linearGradient><linearGradient id="w270" gradientUnits="userSpaceOnUse" x1="75.03" y1="101.76" x2="89.89" y2="134.16"><stop offset="0.0" stop-color="#ffffff"/><stop offset="0.1" stop-color="#ffe6e7"/><stop offset="0.2" stop-color="#ffcccf"/><stop offset="0.4" stop-color="#ff999e"/><stop offset="0.6" stop-color="#ff666e"/><stop offset="0.8" stop-color="#ff333e"/><stop offset="1.0" stop-color="#ff000d"/></linearGradient><linearGradient id="w271" gradientUnits="userSpaceOnUse" x1="75.03" y1="101.76" x2="89.89" y2="134.16"><stop offset="0.0" stop-color="#ffffff"/><stop offset="0.1" stop-color="#ffe6e8"/><stop offset="0.2" stop-color="#ffccd2"/><stop offset="0.4" stop-color="#ff99a4"/><stop offset="0.6" stop-color="#ff6677"/><stop offset="0.8" stop-color="#ff3349"/><stop offset="1.0" stop-color="#ff001c"/></linearGradient><linearGradient id="w272" gradientUnits="userSpaceOnUse" x1="75.03" y1="101.76" x2="89.89" y2="134.16"><stop offset="0.0" stop-color="#ffffff"/><stop offset="0.1" stop-color="#ffe6e9"/><stop offset="0.2" stop-color="#ffccd4"/><stop offset="0.4" stop-color="#ff99a8"/><stop offset="0.6" stop-color="#ff667d"/><stop offset="0.8" stop-color="#ff3351"/><stop offset="1.0" stop-color="#ff0026"/></linearGradient><linearGradient id="w273" gradientUnits="userSpaceOnUse" x1="75.03" y1="101.76" x2="89.89" y2="134.16"><stop offset="0.0" stop-color="#ffffff"/><stop offset="0.1" stop-color="#ffe6ea"/><stop offset="0.2" stop-color="#ffccd5"/><stop offset="0.4" stop-color="#ff99ab"/><stop offset="0.6" stop-color="#ff6682"/><stop offset="0.8" stop-color="#ff3358"/><stop offset="1.0" stop-color="#ff002e"/></linearGradient><linearGradient id="w274" gradientUnits="userSpaceOnUse" x1="75.03" y1="101.76" x2="89.89" y2="134.16"><stop offset="0.0" stop-color="#ffffff"/><stop offset="0.1" stop-color="#ffe6eb"/><stop offset="0.2" stop-color="#ffccd7"/><stop offset="0.4" stop-color="#ff99ae"/><stop offset="0.6" stop-color="#ff6686"/><stop offset="0.8" stop-color="#ff335d"/><stop offset="1.0" stop-color="#ff0035"/></linearGradient><linearGradient id="w275" gradientUnits="userSpaceOnUse" x1="75.03" y1="101.76" x2="89.89" y2="134.16"><stop offset="0.0" stop-color="#ffffff"/><stop offset="0.1" stop-color="#ffe6eb"/><stop offset="0.2" stop-color="#ffccd8"/><stop offset="0.4" stop-color="#ff99b1"/><stop offset="0.6" stop-color="#ff668a"/><stop offset="0.8" stop-color="#ff3362"/><stop offset="1.0" stop-color="#ff003b"/></linearGradient><linearGradient id="w276" gradientUnits="userSpaceOnUse" x1="75.03" y1="101.76" x2="89.89" y2="134.16"><stop offset="0.0" stop-color="#ffffff"/><stop offset="0.1" stop-color="#ffe6ec"/><stop offset="0.2" stop-color="#ffccd9"/><stop offset="0.4" stop-color="#ff99b3"/><stop offset="0.6" stop-color="#ff668d"/><stop offset="0.8" stop-color="#ff3367"/><stop offset="1.0" stop-color="#ff0041"/></linearGradient><linearGradient id="w277" gradientUnits="userSpaceOnUse" x1="75.03" y1="101.76" x2="89.89" y2="134.16"><stop offset="0.0" stop-color="#ffffff"/><stop offset="0.1" stop-color="#ffe6ed"/><stop offset="0.2" stop-color="#ffccda"/><stop offset="0.4" stop-color="#ff99b5"/><stop offset="0.6" stop-color="#ff6690"/><stop offset="0.8" stop-color="#ff336b"/><stop offset="1.0" stop-color="#ff0046"/></linearGradient><linearGradient id="w278" gradientUnits="userSpaceOnUse" x1="75.03" y1="101.76" x2="89.89" y2="134.16"><stop offset="0.0" stop-color="#ffffff"/><stop offset="0.1" stop-color="#ffe6ed"/><stop offset="0.2" stop-color="#ffccdb"/><stop offset="0.4" stop-color="#ff99b7"/><stop offset="0.6" stop-color="#ff6693"/><stop offset="0.8" stop-color="#ff336f"/><stop offset="1.0" stop-color="#ff004b"/></linearGradient><linearGradient id="w279" gradientUnits="userSpaceOnUse" x1="75.03" y1="101.76" x2="89.89" y2="134.16"><stop offset="0.0" stop-color="#ffffff"/><stop offset="0.1" stop-color="#ffe6ee"/><stop offset="0.2" stop-color="#ffccdc"/><stop offset="0.4" stop-color="#ff99b9"/><stop offset="0.6" stop-color="#ff6696"/><stop offset="0.8" stop-color="#ff3373"/><stop offset="1.0" stop-color="#ff0050"/></linearGradient><linearGradient id="w280" gradientUnits="userSpaceOnUse" x1="75.03" y1="101.76" x2="89.89" y2="134.16"><stop offset="0.0" stop-color="#ffffff"/><stop offset="0.1" stop-color="#ffe6ee"/><stop offset="0.2" stop-color="#ffccdd"/><stop offset="0.4" stop-color="#ff99bb"/><stop offset="0.6" stop-color="#ff6699"/><stop offset="0.8" stop-color="#ff3377"/><stop offset="1.0" stop-color="#ff0055"/></linearGradient><linearGradient id="w281" gradientUnits="userSpaceOnUse" x1="75.03" y1="101.76" x2="89.89" y2="134.16"><stop offset="0.0" stop-color="#ffffff"/><stop offset="0.1" stop-color="#ffe6ee"/><stop offset="0.2" stop-color="#ffccde"/><stop offset="0.4" stop-color="#ff99bd"/><stop offset="0.6" stop-color="#ff669c"/><stop offset="0.8" stop-color="#ff337b"/><stop offset="1.0" stop-color="#ff005a"/></linearGradient><linearGradient id="w282" gradientUnits="userSpaceOnUse" x1="75.03" y1="101.76" x2="89.89" y2="134.16"><stop offset="0.0" stop-color="#ffffff"/><stop offset="0.1" stop-color="#ffe6ef"/><stop offset="0.2" stop-color="#ffccdf"/><stop offset="0.4" stop-color="#ff99bf"/><stop offset="0.6" stop-color="#ff669e"/><stop offset="0.8" stop-color="#ff337e"/><stop offset="1.0" stop-color="#ff005e"/></linearGradient><linearGradient id="w283" gradientUnits="userSpaceOnUse" x1="75.03" y1="101.76" x2="89.89" y2="134.16"><stop offset="0.0" stop-color="#ffffff"/><stop offset="0.1" stop-color="#ffe6ef"/><stop offset="0.2" stop-color="#ffcce0"/><stop offset="0.4" stop-color="#ff99c0"/><stop offset="0.6" stop-color="#ff66a1"/><stop offset="0.8" stop-color="#ff3382"/><stop offset="1.0" stop-color="#ff0062"/></linearGradient><linearGradient id="w284" gradientUnits="userSpaceOnUse" x1="75.03" y1="101.76" x2="89.89" y2="134.16"><stop offset="0.0" stop-color="#ffffff"/><stop offset="0.1" stop-color="#ffe6f0"/><stop offset="0.2" stop-color="#ffcce1"/><stop offset="0.4" stop-color="#ff99c2"/><stop offset="0.6" stop-color="#ff66a4"/><stop offset="0.8" stop-color="#ff3385"/><stop offset="1.0" stop-color="#ff0067"/></linearGradient><linearGradient id="w285" gradientUnits="userSpaceOnUse" x1="75.03" y1="101.76" x2="89.89" y2="134.16"><stop offset="0.0" stop-color="#ffffff"/><stop offset="0.1" stop-color="#ffe6f0"/><stop offset="0.2" stop-color="#ffcce1"/><stop offset="0.4" stop-color="#ff99c4"/><stop offset="0.6" stop-color="#ff66a6"/><stop offset="0.8" stop-color="#ff3389"/><stop offset="1.0" stop-color="#ff006b"/></linearGradient><linearGradient id="w286" gradientUnits="userSpaceOnUse" x1="75.03" y1="101.76" x2="89.89" y2="134.16"><stop offset="0.0" stop-color="#ffffff"/><stop offset="0.1" stop-color="#ffe6f1"/><stop offset="0.2" stop-color="#ffcce2"/><stop offset="0.4" stop-color="#ff99c5"/><stop offset="0.6" stop-color="#ff66a9"/><stop offset="0.8" stop-color="#ff338c"/><stop offset="1.0" stop-color="#ff006f"/></linearGradient><linearGradient id="w287" gradientUnits="userSpaceOnUse" x1="75.03" y1="101.76" x2="89.89" y2="134.16"><stop offset="0.0" stop-color="#ffffff"/><stop offset="0.1" stop-color="#ffe6f1"/><stop offset="0.2" stop-color="#ffcce3"/><stop offset="0.4" stop-color="#ff99c7"/><stop offset="0.6" stop-color="#ff66ab"/><stop offset="0.8" stop-color="#ff338f"/><stop offset="1.0" stop-color="#ff0073"/></linearGradient><linearGradient id="w288" gradientUnits="userSpaceOnUse" x1="75.03" y1="101.76" x2="89.89" y2="134.16"><stop offset="0.0" stop-color="#ffffff"/><stop offset="0.1" stop-color="#ffe6f1"/><stop offset="0.2" stop-color="#ffcce4"/><stop offset="0.4" stop-color="#ff99c9"/><stop offset="0.6" stop-color="#ff66ae"/><stop offset="0.8" stop-color="#ff3393"/><stop offset="1.0" stop-color="#ff0078"/></linearGradient><linearGradient id="w289" gradientUnits="userSpaceOnUse" x1="75.03" y1="101.76" x2="89.89" y2="134.16"><stop offset="0.0" stop-color="#ffffff"/><stop offset="0.1" stop-color="#ffe6f2"/><stop offset="0.2" stop-color="#ffcce5"/><stop offset="0.4" stop-color="#ff99ca"/><stop offset="0.6" stop-color="#ff66b0"/><stop offset="0.8" stop-color="#ff3396"/><stop offset="1.0" stop-color="#ff007c"/></linearGradient><linearGradient id="w290" gradientUnits="userSpaceOnUse" x1="75.03" y1="101.76" x2="89.89" y2="134.16"><stop offset="0.0" stop-color="#ffffff"/><stop offset="0.1" stop-color="#ffe6f2"/><stop offset="0.2" stop-color="#ffcce6"/><stop offset="0.4" stop-color="#ff99cc"/><stop offset="0.6" stop-color="#ff66b3"/><stop offset="0.8" stop-color="#ff3399"/><stop offset="1.0" stop-color="#ff0080"/></linearGradient><linearGradient id="w291" gradientUnits="userSpaceOnUse" x1="75.03" y1="101.76" x2="89.89" y2="134.16"><stop offset="0.0" stop-color="#ffffff"/><stop offset="0.1" stop-color="#ffe6f3"/><stop offset="0.2" stop-color="#ffcce6"/><stop offset="0.4" stop-color="#ff99ce"/><stop offset="0.6" stop-color="#ff66b5"/><stop offset="0.8" stop-color="#ff339d"/><stop offset="1.0" stop-color="#ff0084"/></linearGradient><linearGradient id="w292" gradientUnits="userSpaceOnUse" x1="75.03" y1="101.76" x2="89.89" y2="134.16"><stop offset="0.0" stop-color="#ffffff"/><stop offset="0.1" stop-color="#ffe6f3"/><stop offset="0.2" stop-color="#ffcce7"/><stop offset="0.4" stop-color="#ff99cf"/><stop offset="0.6" stop-color="#ff66b8"/><stop offset="0.8" stop-color="#ff33a0"/><stop offset="1.0" stop-color="#ff0088"/></linearGradient><linearGradient id="w293" gradientUnits="userSpaceOnUse" x1="75.03" y1="101.76" x2="89.89" y2="134.16"><stop offset="0.0" stop-color="#ffffff"/><stop offset="0.1" stop-color="#ffe6f4"/><stop offset="0.2" stop-color="#ffcce8"/><stop offset="0.4" stop-color="#ff99d1"/><stop offset="0.6" stop-color="#ff66ba"/><stop offset="0.8" stop-color="#ff33a3"/><stop offset="1.0" stop-color="#ff008c"/></linearGradient><linearGradient id="w294" gradientUnits="userSpaceOnUse" x1="75.03" y1="101.76" x2="89.89" y2="134.16"><stop offset="0.0" stop-color="#ffffff"/><stop offset="0.1" stop-color="#ffe6f4"/><stop offset="0.2" stop-color="#ffcce9"/><stop offset="0.4" stop-color="#ff99d3"/><stop offset="0.6" stop-color="#ff66bd"/><stop offset="0.8" stop-color="#ff33a7"/><stop offset="1.0" stop-color="#ff0091"/></linearGradient><linearGradient id="w295" gradientUnits="userSpaceOnUse" x1="75.03" y1="101.76" x2="89.89" y2="134.16"><stop offset="0.0" stop-color="#ffffff"/><stop offset="0.1" stop-color="#ffe6f4"/><stop offset="0.2" stop-color="#ffccea"/><stop offset="0.4" stop-color="#ff99d5"/><stop offset="0.6" stop-color="#ff66bf"/><stop offset="0.8" stop-color="#ff33aa"/><stop offset="1.0" stop-color="#ff0095"/></linearGradient><linearGradient id="w296" gradientUnits="userSpaceOnUse" x1="75.03" y1="101.76" x2="89.89" y2="134.16"><stop offset="0.0" stop-color="#ffffff"/><stop offset="0.1" stop-color="#ffe6f5"/><stop offset="0.2" stop-color="#ffcceb"/><stop offset="0.4" stop-color="#ff99d6"/><stop offset="0.6" stop-color="#ff66c2"/><stop offset="0.8" stop-color="#ff33ad"/><stop offset="1.0" stop-color="#ff0099"/></linearGradient><linearGradient id="w297" gradientUnits="userSpaceOnUse" x1="75.03" y1="101.76" x2="89.89" y2="134.16"><stop offset="0.0" stop-color="#ffffff"/><stop offset="0.1" stop-color="#ffe6f5"/><stop offset="0.2" stop-color="#ffcceb"/><stop offset="0.4" stop-color="#ff99d8"/><stop offset="0.6" stop-color="#ff66c4"/><stop offset="0.8" stop-color="#ff33b1"/><stop offset="1.0" stop-color="#ff009d"/></linearGradient><linearGradient id="w298" gradientUnits="userSpaceOnUse" x1="75.03" y1="101.76" x2="89.89" y2="134.16"><stop offset="0.0" stop-color="#ffffff"/><stop offset="0.1" stop-color="#ffe6f6"/><stop offset="0.2" stop-color="#ffccec"/><stop offset="0.4" stop-color="#ff99da"/><stop offset="0.6" stop-color="#ff66c7"/><stop offset="0.8" stop-color="#ff33b5"/><stop offset="1.0" stop-color="#ff00a2"/></linearGradient><linearGradient id="w299" gradientUnits="userSpaceOnUse" x1="75.03" y1="101.76" x2="89.89" y2="134.16"><stop offset="0.0" stop-color="#ffffff"/><stop offset="0.1" stop-color="#ffe6f6"/><stop offset="0.2" stop-color="#ffcced"/><stop offset="0.4" stop-color="#ff99dc"/><stop offset="0.6" stop-color="#ff66ca"/><stop offset="0.8" stop-color="#ff33b8"/><stop offset="1.0" stop-color="#ff00a6"/></linearGradient><linearGradient id="w300" gradientUnits="userSpaceOnUse" x1="75.03" y1="101.76" x2="89.89" y2="134.16"><stop offset="0.0" stop-color="#ffffff"/><stop offset="0.1" stop-color="#ffe6f7"/><stop offset="0.2" stop-color="#ffccee"/><stop offset="0.4" stop-color="#ff99dd"/><stop offset="0.6" stop-color="#ff66cd"/><stop offset="0.8" stop-color="#ff33bc"/><stop offset="1.0" stop-color="#ff00ab"/></linearGradient><linearGradient id="w301" gradientUnits="userSpaceOnUse" x1="75.03" y1="101.76" x2="89.89" y2="134.16"><stop offset="0.0" stop-color="#ffffff"/><stop offset="0.1" stop-color="#ffe6f7"/><stop offset="0.2" stop-color="#ffccef"/><stop offset="0.4" stop-color="#ff99df"/><stop offset="0.6" stop-color="#ff66cf"/><stop offset="0.8" stop-color="#ff33c0"/><stop offset="1.0" stop-color="#ff00b0"/></linearGradient><linearGradient id="w302" gradientUnits="userSpaceOnUse" x1="75.03" y1="101.76" x2="89.89" y2="134.16"><stop offset="0.0" stop-color="#ffffff"/><stop offset="0.1" stop-color="#ffe6f8"/><stop offset="0.2" stop-color="#ffccf0"/><stop offset="0.4" stop-color="#ff99e1"/><stop offset="0.6" stop-color="#ff66d2"/><stop offset="0.8" stop-color="#ff33c3"/><stop offset="1.0" stop-color="#ff00b4"/></linearGradient><linearGradient id="w303" gradientUnits="userSpaceOnUse" x1="75.03" y1="101.76" x2="89.89" y2="134.16"><stop offset="0.0" stop-color="#ffffff"/><stop offset="0.1" stop-color="#ffe6f8"/><stop offset="0.2" stop-color="#ffccf1"/><stop offset="0.4" stop-color="#ff99e3"/><stop offset="0.6" stop-color="#ff66d5"/><stop offset="0.8" stop-color="#ff33c7"/><stop offset="1.0" stop-color="#ff00b9"/></linearGradient><linearGradient id="w304" gradientUnits="userSpaceOnUse" x1="75.03" y1="101.76" x2="89.89" y2="134.16"><stop offset="0.0" stop-color="#ffffff"/><stop offset="0.1" stop-color="#ffe6f9"/><stop offset="0.2" stop-color="#ffccf2"/><stop offset="0.4" stop-color="#ff99e5"/><stop offset="0.6" stop-color="#ff66d8"/><stop offset="0.8" stop-color="#ff33cb"/><stop offset="1.0" stop-color="#ff00be"/></linearGradient><linearGradient id="w305" gradientUnits="userSpaceOnUse" x1="75.03" y1="101.76" x2="89.89" y2="134.16"><stop offset="0.0" stop-color="#ffffff"/><stop offset="0.1" stop-color="#ffe6f9"/><stop offset="0.2" stop-color="#ffccf3"/><stop offset="0.4" stop-color="#ff99e7"/><stop offset="0.6" stop-color="#ff66db"/><stop offset="0.8" stop-color="#ff33cf"/><stop offset="1.0" stop-color="#ff00c3"/></linearGradient><linearGradient id="w306" gradientUnits="userSpaceOnUse" x1="75.03" y1="101.76" x2="89.89" y2="134.16"><stop offset="0.0" stop-color="#ffffff"/><stop offset="0.1" stop-color="#ffe6fa"/><stop offset="0.2" stop-color="#ffccf4"/><stop offset="0.4" stop-color="#ff99e9"/><stop offset="0.6" stop-color="#ff66de"/><stop offset="0.8" stop-color="#ff33d4"/><stop offset="1.0" stop-color="#ff00c9"/></linearGradient><linearGradient id="w307" gradientUnits="userSpaceOnUse" x1="75.03" y1="101.76" x2="89.89" y2="134.16"><stop offset="0.0" stop-color="#ffffff"/><stop offset="0.1" stop-color="#ffe6fa"/><stop offset="0.2" stop-color="#ffccf5"/><stop offset="0.4" stop-color="#ff99eb"/><stop offset="0.6" stop-color="#ff66e2"/><stop offset="0.8" stop-color="#ff33d8"/><stop offset="1.0" stop-color="#ff00ce"/></linearGradient><linearGradient id="w308" gradientUnits="userSpaceOnUse" x1="75.03" y1="101.76" x2="89.89" y2="134.16"><stop offset="0.0" stop-color="#ffffff"/><stop offset="0.1" stop-color="#ffe6fb"/><stop offset="0.2" stop-color="#ffccf6"/><stop offset="0.4" stop-color="#ff99ee"/><stop offset="0.6" stop-color="#ff66e5"/><stop offset="0.8" stop-color="#ff33dc"/><stop offset="1.0" stop-color="#ff00d4"/></linearGradient><linearGradient id="w309" gradientUnits="userSpaceOnUse" x1="75.03" y1="101.76" x2="89.89" y2="134.16"><stop offset="0.0" stop-color="#ffffff"/><stop offset="0.1" stop-color="#ffe6fb"/><stop offset="0.2" stop-color="#ffccf8"/><stop offset="0.4" stop-color="#ff99f0"/><stop offset="0.6" stop-color="#ff66e9"/><stop offset="0.8" stop-color="#ff33e1"/><stop offset="1.0" stop-color="#ff00da"/></linearGradient><linearGradient id="w310" gradientUnits="userSpaceOnUse" x1="75.03" y1="101.76" x2="89.89" y2="134.16"><stop offset="0.0" stop-color="#ffffff"/><stop offset="0.1" stop-color="#ffe6fc"/><stop offset="0.2" stop-color="#ffccf9"/><stop offset="0.4" stop-color="#ff99f3"/><stop offset="0.6" stop-color="#ff66ec"/><stop offset="0.8" stop-color="#ff33e6"/><stop offset="1.0" stop-color="#ff00e0"/></linearGradient><linearGradient id="w311" gradientUnits="userSpaceOnUse" x1="75.03" y1="101.76" x2="89.89" y2="134.16"><stop offset="0.0" stop-color="#ffffff"/><stop offset="0.1" stop-color="#ffe6fd"/><stop offset="0.2" stop-color="#ffccfa"/><stop offset="0.4" stop-color="#ff99f5"/><stop offset="0.6" stop-color="#ff66f0"/><stop offset="0.8" stop-color="#ff33eb"/><stop offset="1.0" stop-color="#ff00e6"/></linearGradient><linearGradient id="w312" gradientUnits="userSpaceOnUse" x1="75.03" y1="101.76" x2="89.89" y2="134.16"><stop offset="0.0" stop-color="#ffffff"/><stop offset="0.1" stop-color="#ffe6fd"/><stop offset="0.2" stop-color="#ffccfb"/><stop offset="0.4" stop-color="#ff99f8"/><stop offset="0.6" stop-color="#ff66f4"/><stop offset="0.8" stop-color="#ff33f0"/><stop offset="1.0" stop-color="#ff00ed"/></linearGradient><linearGradient id="w313" gradientUnits="userSpaceOnUse" x1="75.03" y1="101.76" x2="89.89" y2="134.16"><stop offset="0.0" stop-color="#ffffff"/><stop offset="0.1" stop-color="#ffe6fe"/><stop offset="0.2" stop-color="#ffccfd"/><stop offset="0.4" stop-color="#ff99fa"/><stop offset="0.6" stop-color="#ff66f8"/><stop offset="0.8" stop-color="#ff33f6"/><stop offset="1.0" stop-color="#ff00f3"/></linearGradient><linearGradient id="w314" gradientUnits="userSpaceOnUse" x1="75.03" y1="101.76" x2="89.89" y2="134.16"><stop offset="0.0" stop-color="#ffffff"/><stop offset="0.1" stop-color="#ffe6ff"/><stop offset="0.2" stop-color="#ffccfe"/><stop offset="0.4" stop-color="#ff99fd"/><stop offset="0.6" stop-color="#ff66fc"/><stop offset="0.8" stop-color="#ff33fc"/><stop offset="1.0" stop-color="#ff00fb"/></linearGradient><linearGradient id="w315" gradientUnits="userSpaceOnUse" x1="75.03" y1="101.76" x2="89.89" y2="134.16"><stop offset="0.0" stop-color="#ffffff"/><stop offset="0.1" stop-color="#ffe6ff"/><stop offset="0.2" stop-color="#feccff"/><stop offset="0.4" stop-color="#fe99ff"/><stop offset="0.6" stop-color="#fd66ff"/><stop offset="0.8" stop-color="#fc33ff"/><stop offset="1.0" stop-color="#fc00ff"/></linearGradient><linearGradient id="w316" gradientUnits="userSpaceOnUse" x1="75.03" y1="101.76" x2="89.89" y2="134.16"><stop offset="0.0" stop-color="#ffffff"/><stop offset="0.1" stop-color="#fee6ff"/><stop offset="0.2" stop-color="#fdccff"/><stop offset="0.4" stop-color="#fb99ff"/><stop offset="0.6" stop-color="#f966ff"/><stop offset="0.8" stop-color="#f633ff"/><stop offset="1.0" stop-color="#f400ff"/></linearGradient><linearGradient id="w317" gradientUnits="userSpaceOnUse" x1="75.03" y1="101.76" x2="89.89" y2="134.16"><stop offset="0.0" stop-color="#ffffff"/><stop offset="0.1" stop-color="#fde6ff"/><stop offset="0.2" stop-color="#fbccff"/><stop offset="0.4" stop-color="#f899ff"/><stop offset="0.6" stop-color="#f466ff"/><stop offset="0.8" stop-color="#f033ff"/><stop offset="1.0" stop-color="#ed00ff"/></linearGradient><linearGradient id="w318" gradientUnits="userSpaceOnUse" x1="75.03" y1="101.76" x2="89.89" y2="134.16"><stop offset="0.0" stop-color="#ffffff"/><stop offset="0.1" stop-color="#fce6ff"/><stop offset="0.2" stop-color="#faccff"/><stop offset="0.4" stop-color="#f599ff"/><stop offset="0.6" stop-color="#f066ff"/><stop offset="0.8" stop-color="#ea33ff"/><stop offset="1.0" stop-color="#e500ff"/></linearGradient><linearGradient id="w319" gradientUnits="userSpaceOnUse" x1="75.03" y1="101.76" x2="89.89" y2="134.16"><stop offset="0.0" stop-color="#ffffff"/><stop offset="0.1" stop-color="#fce6ff"/><stop offset="0.2" stop-color="#f8ccff"/><stop offset="0.4" stop-color="#f299ff"/><stop offset="0.6" stop-color="#eb66ff"/><stop offset="0.8" stop-color="#e433ff"/><stop offset="1.0" stop-color="#de00ff"/></linearGradient><linearGradient id="w320" gradientUnits="userSpaceOnUse" x1="75.03" y1="101.76" x2="89.89" y2="134.16"><stop offset="0.0" stop-color="#ffffff"/><stop offset="0.1" stop-color="#fbe6ff"/><stop offset="0.2" stop-color="#f7ccff"/><stop offset="0.4" stop-color="#ef99ff"/><stop offset="0.6" stop-color="#e666ff"/><stop offset="0.8" stop-color="#de33ff"/><stop offset="1.0" stop-color="#d600ff"/></linearGradient><linearGradient id="w321" gradientUnits="userSpaceOnUse" x1="75.03" y1="101.76" x2="89.89" y2="134.16"><stop offset="0.0" stop-color="#ffffff"/><stop offset="0.1" stop-color="#fae6ff"/><stop offset="0.2" stop-color="#f5ccff"/><stop offset="0.4" stop-color="#ec99ff"/><stop offset="0.6" stop-color="#e266ff"/><stop offset="0.8" stop-color="#d833ff"/><stop offset="1.0" stop-color="#ce00ff"/></linearGradient><linearGradient id="w322" gradientUnits="userSpaceOnUse" x1="75.03" y1="101.76" x2="89.89" y2="134.16"><stop offset="0.0" stop-color="#ffffff"/><stop offset="0.1" stop-color="#f9e6ff"/><stop offset="0.2" stop-color="#f4ccff"/><stop offset="0.4" stop-color="#e899ff"/><stop offset="0.6" stop-color="#dd66ff"/><stop offset="0.8" stop-color="#d233ff"/><stop offset="1.0" stop-color="#c700ff"/></linearGradient><linearGradient id="w323" gradientUnits="userSpaceOnUse" x1="75.03" y1="101.76" x2="89.89" y2="134.16"><stop offset="0.0" stop-color="#ffffff"/><stop offset="0.1" stop-color="#f9e6ff"/><stop offset="0.2" stop-color="#f2ccff"/><stop offset="0.4" stop-color="#e599ff"/><stop offset="0.6" stop-color="#d966ff"/><stop offset="0.8" stop-color="#cc33ff"/><stop offset="1.0" stop-color="#bf00ff"/></linearGradient><linearGradient id="w324" gradientUnits="userSpaceOnUse" x1="75.03" y1="101.76" x2="89.89" y2="134.16"><stop offset="0.0" stop-color="#ffffff"/><stop offset="0.1" stop-color="#f8e6ff"/><stop offset="0.2" stop-color="#f1ccff"/><stop offset="0.4" stop-color="#e299ff"/><stop offset="0.6" stop-color="#d466ff"/><stop offset="0.8" stop-color="#c533ff"/><stop offset="1.0" stop-color="#b700ff"/></linearGradient><linearGradient id="w325" gradientUnits="userSpaceOnUse" x1="75.03" y1="101.76" x2="89.89" y2="134.16"><stop offset="0.0" stop-color="#ffffff"/><stop offset="0.1" stop-color="#f7e6ff"/><stop offset="0.2" stop-color="#efccff"/><stop offset="0.4" stop-color="#df99ff"/><stop offset="0.6" stop-color="#cf66ff"/><stop offset="0.8" stop-color="#bf33ff"/><stop offset="1.0" stop-color="#af00ff"/></linearGradient><linearGradient id="w326" gradientUnits="userSpaceOnUse" x1="75.03" y1="101.76" x2="89.89" y2="134.16"><stop offset="0.0" stop-color="#ffffff"/><stop offset="0.1" stop-color="#f6e6ff"/><stop offset="0.2" stop-color="#edccff"/><stop offset="0.4" stop-color="#dc99ff"/><stop offset="0.6" stop-color="#ca66ff"/><stop offset="0.8" stop-color="#b833ff"/><stop offset="1.0" stop-color="#a600ff"/></linearGradient><linearGradient id="w327" gradientUnits="userSpaceOnUse" x1="75.03" y1="101.76" x2="89.89" y2="134.16"><stop offset="0.0" stop-color="#ffffff"/><stop offset="0.1" stop-color="#f5e6ff"/><stop offset="0.2" stop-color="#ecccff"/><stop offset="0.4" stop-color="#d899ff"/><stop offset="0.6" stop-color="#c566ff"/><stop offset="0.8" stop-color="#b133ff"/><stop offset="1.0" stop-color="#9e00ff"/></linearGradient><linearGradient id="w328" gradientUnits="userSpaceOnUse" x1="75.03" y1="101.76" x2="89.89" y2="134.16"><stop offset="0.0" stop-color="#ffffff"/><stop offset="0.1" stop-color="#f4e6ff"/><stop offset="0.2" stop-color="#eaccff"/><stop offset="0.4" stop-color="#d599ff"/><stop offset="0.6" stop-color="#bf66ff"/><stop offset="0.8" stop-color="#aa33ff"/><stop offset="1.0" stop-color="#9500ff"/></linearGradient><linearGradient id="w329" gradientUnits="userSpaceOnUse" x1="75.03" y1="101.76" x2="89.89" y2="134.16"><stop offset="0.0" stop-color="#ffffff"/><stop offset="0.1" stop-color="#f3e6ff"/><stop offset="0.2" stop-color="#e8ccff"/><stop offset="0.4" stop-color="#d199ff"/><stop offset="0.6" stop-color="#ba66ff"/><stop offset="0.8" stop-color="#a333ff"/><stop offset="1.0" stop-color="#8c00ff"/></linearGradient><linearGradient id="w330" gradientUnits="userSpaceOnUse" x1="75.03" y1="101.76" x2="89.89" y2="134.16"><stop offset="0.0" stop-color="#ffffff"/><stop offset="0.1" stop-color="#f2e6ff"/><stop offset="0.2" stop-color="#e6ccff"/><stop offset="0.4" stop-color="#cd99ff"/><stop offset="0.6" stop-color="#b466ff"/><stop offset="0.8" stop-color="#9b33ff"/><stop offset="1.0" stop-color="#8200ff"/></linearGradient><linearGradient id="w331" gradientUnits="userSpaceOnUse" x1="75.03" y1="101.76" x2="89.89" y2="134.16"><stop offset="0.0" stop-color="#ffffff"/><stop offset="0.1" stop-color="#f1e6ff"/><stop offset="0.2" stop-color="#e4ccff"/><stop offset="0.4" stop-color="#c999ff"/><stop offset="0.6" stop-color="#ae66ff"/><stop offset="0.8" stop-color="#9333ff"/><stop offset="1.0" stop-color="#7700ff"/></linearGradient></defs><g clip-path="url(#lc)" shape-rendering="crispEdges"><path d="M75.03 101.76L46.80 154.92L46.01 154.67L45.59 154.30Z" fill="url(#w0)"/><path d="M75.03 101.76L46.01 154.67L45.31 154.06L44.90 153.72Z" fill="url(#w1)"/><path d="M75.03 101.76L45.31 154.06L44.62 153.49L44.18 153.10Z" fill="url(#w2)"/><path d="M75.03 101.76L44.62 153.49L43.89 152.85L43.43 152.44Z" fill="url(#w3)"/><path d="M75.03 101.76L43.89 152.85L43.13 152.16L42.62 151.69Z" fill="url(#w4)"/><path d="M75.03 101.76L43.13 152.16L42.28 151.38L41.86 150.96Z" fill="url(#w5)"/><path d="M75.03 101.76L42.28 151.38L41.58 150.68L41.18 150.23Z" fill="url(#w6)"/><path d="M75.03 101.76L41.58 150.68L40.91 149.93L40.58 149.51Z" fill="url(#w7)"/><path d="M75.03 101.76L40.91 149.93L40.37 149.23L39.97 148.67Z" fill="url(#w8)"/><path d="M75.03 101.76L40.37 149.23L39.71 148.31L39.42 147.88Z" fill="url(#w9)"/><path d="M75.03 101.76L39.71 148.31L39.23 147.59L38.92 147.10Z" fill="url(#w10)"/><path d="M75.03 101.76L39.23 147.59L38.72 146.77L38.39 146.20Z" fill="url(#w11)"/><path d="M75.03 101.76L38.72 146.77L38.18 145.83L37.83 145.21Z" fill="url(#w12)"/><path d="M75.03 101.76L38.18 145.83L37.60 144.79L37.24 144.10Z" fill="url(#w13)"/><path d="M75.03 101.76L37.60 144.79L36.99 143.64L36.61 142.85Z" fill="url(#w14)"/><path d="M75.03 101.76L36.99 143.64L36.35 142.32L35.93 141.41Z" fill="url(#w15)"/><path d="M75.03 101.76L36.35 142.32L35.65 140.80L35.44 140.31Z" fill="url(#w16)"/><path d="M75.03 101.76L35.65 140.80L35.29 139.99L35.07 139.48Z" fill="url(#w17)"/><path d="M75.03 101.76L35.29 139.99L34.92 139.13L34.69 138.59Z" fill="url(#w18)"/><path d="M75.03 101.76L34.92 139.13L34.54 138.23L34.31 137.66Z" fill="url(#w19)"/><path d="M75.03 101.76L34.54 138.23L34.15 137.28L33.91 136.68Z" fill="url(#w20)"/><path d="M75.03 101.76L34.15 137.28L33.74 136.28L33.49 135.64Z" fill="url(#w21)"/><path d="M75.03 101.76L33.74 136.28L33.33 135.21L33.07 134.53Z" fill="url(#w22)"/><path d="M75.03 101.76L33.33 135.21L32.90 134.08L32.63 133.37Z" fill="url(#w23)"/><path d="M75.03 101.76L32.90 134.08L32.46 132.89L32.18 132.15Z" fill="url(#w24)"/><path d="M75.03 101.76L32.46 132.89L31.99 131.65L31.71 130.87Z" fill="url(#w25)"/><path d="M75.03 101.76L31.99 131.65L31.52 130.36L31.23 129.54Z" fill="url(#w26)"/><path d="M75.03 101.76L31.52 130.36L31.04 129.00L30.74 128.15Z" fill="url(#w27)"/><path d="M75.03 101.76L31.04 129.00L30.54 127.58L30.25 126.69Z" fill="url(#w28)"/><path d="M75.03 101.76L30.54 127.58L30.05 126.10L29.75 125.17Z" fill="url(#w29)"/><path d="M75.03 101.76L30.05 126.10L29.56 124.55L29.41 124.06Z" fill="url(#w30)"/><path d="M75.03 101.76L29.56 124.55L29.31 123.73L29.16 123.24Z" fill="url(#w31)"/><path d="M75.03 101.76L29.31 123.73L29.07 122.92L28.92 122.40Z" fill="url(#w32)"/><path d="M75.03 101.76L29.07 122.92L28.82 122.06L28.68 121.55Z" fill="url(#w33)"/><path d="M75.03 101.76L28.82 122.06L28.58 121.21L28.43 120.67Z" fill="url(#w34)"/><path d="M75.03 101.76L28.58 121.21L28.33 120.32L28.18 119.78Z" fill="url(#w35)"/><path d="M75.03 101.76L28.33 120.32L28.08 119.43L27.94 118.87Z" fill="url(#w36)"/><path d="M75.03 101.76L28.08 119.43L27.84 118.50L27.69 117.95Z" fill="url(#w37)"/><path d="M75.03 101.76L27.84 118.50L27.59 117.58L27.44 117.00Z" fill="url(#w38)"/><path d="M75.03 101.76L27.59 117.58L27.34 116.62L27.19 116.04Z" fill="url(#w39)"/><path d="M75.03 101.76L27.34 116.62L27.09 115.66L26.95 115.06Z" fill="url(#w40)"/><path d="M75.03 101.76L27.09 115.66L26.85 114.67L26.70 114.07Z" fill="url(#w41)"/><path d="M75.03 101.76L26.85 114.67L26.60 113.68L26.46 113.06Z" fill="url(#w42)"/><path d="M75.03 101.76L26.60 113.68L26.36 112.65L26.21 112.04Z" fill="url(#w43)"/><path d="M75.03 101.76L26.36 112.65L26.11 111.63L25.97 111.00Z" fill="url(#w44)"/><path d="M75.03 101.76L26.11 111.63L25.87 110.58L25.73 109.95Z" fill="url(#w45)"/><path d="M75.03 101.76L25.87 110.58L25.63 109.53L25.49 108.88Z" fill="url(#w46)"/><path d="M75.03 101.76L25.63 109.53L25.40 108.45L25.26 107.80Z" fill="url(#w47)"/><path d="M75.03 101.76L25.40 108.45L25.16 107.37L25.02 106.70Z" fill="url(#w48)"/><path d="M75.03 101.76L25.16 107.37L24.93 106.25L24.79 105.58Z" fill="url(#w49)"/><path d="M75.03 101.76L24.93 106.25L24.70 105.13L24.56 104.44Z" fill="url(#w50)"/><path d="M75.03 101.76L24.70 105.13L24.46 103.98L24.32 103.28Z" fill="url(#w51)"/><path d="M75.03 101.76L24.46 103.98L24.23 102.82L24.09 102.10Z" fill="url(#w52)"/><path d="M75.03 101.76L24.23 102.82L23.99 101.62L23.85 100.91Z" fill="url(#w53)"/><path d="M75.03 101.76L23.99 101.62L23.76 100.43L23.62 99.70Z" fill="url(#w54)"/><path d="M75.03 101.76L23.76 100.43L23.53 99.21L23.40 98.48Z" fill="url(#w55)"/><path d="M75.03 101.76L23.53 99.21L23.30 97.99L23.17 97.24Z" fill="url(#w56)"/><path d="M75.03 101.76L23.30 97.99L23.08 96.75L22.95 96.01Z" fill="url(#w57)"/><path d="M75.03 101.76L23.08 96.75L22.86 95.51L22.73 94.76Z" fill="url(#w58)"/><path d="M75.03 101.76L22.86 95.51L22.65 94.26L22.52 93.51Z" fill="url(#w59)"/><path d="M75.03 101.76L22.65 94.26L22.43 93.01L22.31 92.25Z" fill="url(#w60)"/><path d="M75.03 101.76L22.43 93.01L22.23 91.75L22.11 91.00Z" fill="url(#w61)"/><path d="M75.03 101.76L22.23 91.75L22.03 90.50L21.92 89.75Z" fill="url(#w62)"/><path d="M75.03 101.76L22.03 90.50L21.84 89.24L21.73 88.49Z" fill="url(#w63)"/><path d="M75.03 101.76L21.84 89.24L21.65 87.99L21.55 87.24Z" fill="url(#w64)"/><path d="M75.03 101.76L21.65 87.99L21.48 86.73L21.37 85.97Z" fill="url(#w65)"/><path d="M75.03 101.76L21.48 86.73L21.30 85.47L21.19 84.70Z" fill="url(#w66)"/><path d="M75.03 101.76L21.30 85.47L21.13 84.19L21.02 83.41Z" fill="url(#w67)"/><path d="M75.03 101.76L21.13 84.19L20.95 82.90L20.86 82.12Z" fill="url(#w68)"/><path d="M75.03 101.76L20.95 82.90L20.79 81.60L20.69 80.82Z" fill="url(#w69)"/><path d="M75.03 101.76L20.79 81.60L20.63 80.30L20.53 79.52Z" fill="url(#w70)"/><path d="M75.03 101.76L20.63 80.30L20.47 79.00L20.38 78.22Z" fill="url(#w71)"/><path d="M75.03 101.76L20.47 79.00L20.32 77.70L20.23 76.91Z" fill="url(#w72)"/><path d="M75.03 101.76L20.32 77.70L20.17 76.39L20.09 75.61Z" fill="url(#w73)"/><path d="M75.03 101.76L20.17 76.39L20.03 75.09L19.95 74.32Z" fill="url(#w74)"/><path d="M75.03 101.76L20.03 75.09L19.90 73.80L19.82 73.02Z" fill="url(#w75)"/><path d="M75.03 101.76L19.90 73.80L19.77 72.51L19.70 71.74Z" fill="url(#w76)"/><path d="M75.03 101.76L19.77 72.51L19.66 71.23L19.59 70.47Z" fill="url(#w77)"/><path d="M75.03 101.76L19.66 71.23L19.54 69.96L19.49 69.21Z" fill="url(#w78)"/><path d="M75.03 101.76L19.54 69.96L19.45 68.72L19.39 67.97Z" fill="url(#w79)"/><path d="M75.03 101.76L19.45 68.72L19.35 67.47L19.30 66.73Z" fill="url(#w80)"/><path d="M75.03 101.76L19.35 67.47L19.27 66.24L19.22 65.50Z" fill="url(#w81)"/><path d="M75.03 101.76L19.27 66.24L19.19 65.01L19.14 64.27Z" fill="url(#w82)"/><path d="M75.03 101.76L19.19 65.01L19.12 63.78L19.07 63.05Z" fill="url(#w83)"/><path d="M75.03 101.76L19.12 63.78L19.05 62.56L19.01 61.83Z" fill="url(#w84)"/><path d="M75.03 101.76L19.05 62.56L18.99 61.34L18.95 60.61Z" fill="url(#w85)"/><path d="M75.03 101.76L18.99 61.34L18.93 60.12L18.90 59.40Z" fill="url(#w86)"/><path d="M75.03 101.76L18.93 60.12L18.89 58.92L18.86 58.20Z" fill="url(#w87)"/><path d="M75.03 101.76L18.89 58.92L18.84 57.72L18.83 57.01Z" fill="url(#w88)"/><path d="M75.03 101.76L18.84 57.72L18.82 56.53L18.80 55.82Z" fill="url(#w89)"/><path d="M75.03 101.76L18.82 56.53L18.79 55.35L18.78 54.66Z" fill="url(#w90)"/><path d="M75.03 101.76L18.79 55.35L18.78 54.19L18.77 53.50Z" fill="url(#w91)"/><path d="M75.03 101.76L18.78 54.19L18.77 53.03L18.77 52.36Z" fill="url(#w92)"/><path d="M75.03 101.76L18.77 53.03L18.78 51.91L18.78 51.23Z" fill="url(#w93)"/><path d="M75.03 101.76L18.78 51.91L18.78 50.78L18.80 50.13Z" fill="url(#w94)"/><path d="M75.03 101.76L18.78 50.78L18.81 49.69L18.83 49.04Z" fill="url(#w95)"/><path d="M75.03 101.76L18.81 49.69L18.84 48.60L18.87 47.96Z" fill="url(#w96)"/><path d="M75.03 101.76L18.84 48.60L18.89 47.54L18.92 46.90Z" fill="url(#w97)"/><path d="M75.03 101.76L18.89 47.54L18.94 46.47L18.98 45.85Z" fill="url(#w98)"/><path d="M75.03 101.76L18.94 46.47L19.00 45.43L19.04 44.80Z" fill="url(#w99)"/><path d="M75.03 101.76L19.00 45.43L19.07 44.38L19.12 43.77Z" fill="url(#w100)"/><path d="M75.03 101.76L19.07 44.38L19.15 43.36L19.20 42.74Z" fill="url(#w101)"/><path d="M75.03 101.76L19.15 43.36L19.24 42.33L19.30 41.73Z" fill="url(#w102)"/><path d="M75.03 101.76L19.24 42.33L19.34 41.34L19.40 40.74Z" fill="url(#w103)"/><path d="M75.03 101.76L19.34 41.34L19.44 40.34L19.51 39.77Z" fill="url(#w104)"/><path d="M75.03 101.76L19.44 40.34L19.56 39.38L19.63 38.81Z" fill="url(#w105)"/><path d="M75.03 101.76L19.56 39.38L19.68 38.42L19.76 37.87Z" fill="url(#w106)"/><path d="M75.03 101.76L19.68 38.42L19.82 37.50L19.90 36.95Z" fill="url(#w107)"/><path d="M75.03 101.76L19.82 37.50L19.95 36.58L20.05 36.06Z" fill="url(#w108)"/><path d="M75.03 101.76L19.95 36.58L20.11 35.71L20.20 35.18Z" fill="url(#w109)"/><path d="M75.03 101.76L20.11 35.71L20.27 34.83L20.37 34.34Z" fill="url(#w110)"/><path d="M75.03 101.76L20.27 34.83L20.44 34.01L20.55 33.52Z" fill="url(#w111)"/><path d="M75.03 101.76L20.44 34.01L20.62 33.19L20.86 32.26Z" fill="url(#w112)"/><path d="M75.03 101.76L20.62 33.19L21.01 31.64L21.28 30.76Z" fill="url(#w113)"/><path d="M75.03 101.76L21.01 31.64L21.46 30.17L21.74 29.33Z" fill="url(#w114)"/><path d="M75.03 101.76L21.46 30.17L21.94 28.77L22.25 27.99Z" fill="url(#w115)"/><path d="M75.03 101.76L21.94 28.77L22.45 27.46L22.78 26.73Z" fill="url(#w116)"/><path d="M75.03 101.76L22.45 27.46L23.00 26.25L23.35 25.58Z" fill="url(#w117)"/><path d="M75.03 101.76L23.00 26.25L23.58 25.13L23.94 24.52Z" fill="url(#w118)"/><path d="M75.03 101.76L23.58 25.13L24.18 24.12L24.55 23.58Z" fill="url(#w119)"/><path d="M75.03 101.76L24.18 24.12L24.79 23.22L25.18 22.75Z" fill="url(#w120)"/><path d="M75.03 101.76L24.79 23.22L25.44 22.43L25.85 22.03Z" fill="url(#w121)"/><path d="M75.03 101.76L25.44 22.43L26.12 21.77L26.54 21.43Z" fill="url(#w122)"/><path d="M75.03 101.76L26.12 21.77L26.83 21.21L27.27 20.93Z" fill="url(#w123)"/><path d="M75.03 101.76L26.83 21.21L27.56 20.75L28.01 20.52Z" fill="url(#w124)"/><path d="M75.03 101.76L27.56 20.75L28.31 20.37L28.77 20.19Z" fill="url(#w125)"/><path d="M75.03 101.76L28.31 20.37L29.08 20.08L30.00 19.83Z" fill="url(#w126)"/><path d="M75.03 101.76L29.08 20.08L30.62 19.67L31.57 19.62Z" fill="url(#w127)"/><path d="M75.03 101.76L30.62 19.67L32.21 19.59L32.69 19.64Z" fill="url(#w128)"/><path d="M75.03 101.76L32.21 19.59L33.02 19.68L33.51 19.77Z" fill="url(#w129)"/><path d="M75.03 101.76L33.02 19.68L33.84 19.84L34.34 19.97Z" fill="url(#w130)"/><path d="M75.03 101.76L33.84 19.84L34.67 20.05L35.17 20.20Z" fill="url(#w131)"/><path d="M75.03 101.76L34.67 20.05L35.51 20.30L36.00 20.46Z" fill="url(#w132)"/><path d="M75.03 101.76L35.51 20.30L36.34 20.57L36.83 20.74Z" fill="url(#w133)"/><path d="M75.03 101.76L36.34 20.57L37.16 20.85L37.66 21.03Z" fill="url(#w134)"/><path d="M75.03 101.76L37.16 20.85L37.99 21.15L38.49 21.36Z" fill="url(#w135)"/><path d="M75.03 101.76L37.99 21.15L38.83 21.49L39.33 21.72Z" fill="url(#w136)"/><path d="M75.03 101.76L38.83 21.49L39.66 21.88L40.17 22.12Z" fill="url(#w137)"/><path d="M75.03 101.76L39.66 21.88L40.50 22.29L41.00 22.55Z" fill="url(#w138)"/><path d="M75.03 101.76L40.50 22.29L41.34 22.72L41.83 22.99Z" fill="url(#w139)"/><path d="M75.03 101.76L41.34 22.72L42.17 23.17L42.66 23.44Z" fill="url(#w140)"/><path d="M75.03 101.76L42.17 23.17L42.99 23.62L43.48 23.89Z" fill="url(#w141)"/><path d="M75.03 101.76L42.99 23.62L43.80 24.06L44.28 24.33Z" fill="url(#w142)"/><path d="M75.03 101.76L43.80 24.06L44.60 24.51L45.08 24.79Z" fill="url(#w143)"/><path d="M75.03 101.76L44.60 24.51L45.40 24.97L45.87 25.25Z" fill="url(#w144)"/><path d="M75.03 101.76L45.40 24.97L46.19 25.44L46.66 25.73Z" fill="url(#w145)"/><path d="M75.03 101.76L46.19 25.44L46.97 25.92L47.44 26.22Z" fill="url(#w146)"/><path d="M75.03 101.76L46.97 25.92L47.75 26.41L48.22 26.71Z" fill="url(#w147)"/><path d="M75.03 101.76L47.75 26.41L48.53 26.91L48.99 27.21Z" fill="url(#w148)"/><path d="M75.03 101.76L48.53 26.91L49.30 27.41L49.76 27.72Z" fill="url(#w149)"/><path d="M75.03 101.76L49.30 27.41L50.07 27.92L50.53 28.23Z" fill="url(#w150)"/><path d="M75.03 101.76L50.07 27.92L50.84 28.44L51.29 28.75Z" fill="url(#w151)"/><path d="M75.03 101.76L50.84 28.44L51.60 28.96L52.05 29.28Z" fill="url(#w152)"/><path d="M75.03 101.76L51.60 28.96L52.35 29.50L52.80 29.82Z" fill="url(#w153)"/><path d="M75.03 101.76L52.35 29.50L53.10 30.04L53.55 30.36Z" fill="url(#w154)"/><path d="M75.03 101.76L53.10 30.04L53.85 30.58L54.30 30.92Z" fill="url(#w155)"/><path d="M75.03 101.76L53.85 30.58L54.60 31.14L55.05 31.47Z" fill="url(#w156)"/><path d="M75.03 101.76L54.60 31.14L55.35 31.70L55.80 32.04Z" fill="url(#w157)"/><path d="M75.03 101.76L55.35 31.70L56.10 32.26L56.55 32.61Z" fill="url(#w158)"/><path d="M75.03 101.76L56.10 32.26L56.85 32.84L57.30 33.19Z" fill="url(#w159)"/><path d="M75.03 101.76L56.85 32.84L57.60 33.42L58.05 33.77Z" fill="url(#w160)"/><path d="M75.03 101.76L57.60 33.42L58.34 34.01L58.79 34.37Z" fill="url(#w161)"/><path d="M75.03 101.76L58.34 34.01L59.09 34.61L59.54 34.97Z" fill="url(#w162)"/><path d="M75.03 101.76L59.09 34.61L59.83 35.21L60.28 35.57Z" fill="url(#w163)"/><path d="M75.03 101.76L59.83 35.21L60.58 35.81L61.02 36.18Z" fill="url(#w164)"/><path d="M75.03 101.76L60.58 35.81L61.32 36.43L61.77 36.79Z" fill="url(#w165)"/><path d="M75.03 101.76L61.32 36.43L62.07 37.04L62.49 37.39Z" fill="url(#w166)"/><path d="M75.03 101.76L62.07 37.04L62.77 37.62L63.15 37.95Z" fill="url(#w167)"/><path d="M75.03 101.76L62.77 37.62L63.41 38.16L64.16 38.79Z" fill="url(#w168)"/><path d="M75.03 101.76L63.41 38.16L64.66 39.21L65.06 39.56Z" fill="url(#w169)"/><path d="M75.03 101.76L64.66 39.21L65.33 39.80L65.79 40.19Z" fill="url(#w170)"/><path d="M75.03 101.76L65.33 39.80L66.09 40.46L66.61 40.92Z" fill="url(#w171)"/><path d="M75.03 101.76L66.09 40.46L66.96 41.23L67.57 41.78Z" fill="url(#w172)"/><path d="M75.03 101.76L66.96 41.23L67.98 42.14L68.70 42.79Z" fill="url(#w173)"/><path d="M75.03 101.76L67.98 42.14L69.18 43.22L69.59 43.58Z" fill="url(#w174)"/><path d="M75.03 101.76L69.18 43.22L69.86 43.83L70.26 44.19Z" fill="url(#w175)"/><path d="M75.03 101.76L69.86 43.83L70.53 44.44L70.97 44.84Z" fill="url(#w176)"/><path d="M75.03 101.76L70.53 44.44L71.27 45.10L71.71 45.50Z" fill="url(#w177)"/><path d="M75.03 101.76L71.27 45.10L72.00 45.77L72.47 46.19Z" fill="url(#w178)"/><path d="M75.03 101.76L72.00 45.77L72.78 46.47L73.24 46.90Z" fill="url(#w179)"/><path d="M75.03 101.76L72.78 46.47L73.55 47.18L74.03 47.62Z" fill="url(#w180)"/><path d="M75.03 101.76L73.55 47.18L74.35 47.91L74.83 48.35Z" fill="url(#w181)"/><path d="M75.03 101.76L74.35 47.91L75.15 48.64L75.64 49.08Z" fill="url(#w182)"/><path d="M75.03 101.76L75.15 48.64L75.96 49.37L76.44 49.82Z" fill="url(#w183)"/><path d="M75.03 101.76L75.96 49.37L76.77 50.11L77.24 50.55Z" fill="url(#w184)"/><path d="M75.03 101.76L76.77 50.11L77.56 50.84L78.04 51.28Z" fill="url(#w185)"/><path d="M75.03 101.76L77.56 50.84L78.36 51.57L78.82 52.00Z" fill="url(#w186)"/><path d="M75.03 101.76L78.36 51.57L79.12 52.28L79.58 52.70Z" fill="url(#w187)"/><path d="M75.03 101.76L79.12 52.28L79.89 52.99L80.34 53.40Z" fill="url(#w188)"/><path d="M75.03 101.76L79.89 52.99L80.64 53.68L81.09 54.10Z" fill="url(#w189)"/><path d="M75.03 101.76L80.64 53.68L81.39 54.38L81.84 54.80Z" fill="url(#w190)"/><path d="M75.03 101.76L81.39 54.38L82.14 55.08L82.59 55.50Z" fill="url(#w191)"/><path d="M75.03 101.76L82.14 55.08L82.89 55.78L83.34 56.20Z" fill="url(#w192)"/><path d="M75.03 101.76L82.89 55.78L83.64 56.48L84.09 56.91Z" fill="url(#w193)"/><path d="M75.03 101.76L83.64 56.48L84.39 57.19L84.84 57.61Z" fill="url(#w194)"/><path d="M75.03 101.76L84.39 57.19L85.14 57.90L85.59 58.32Z" fill="url(#w195)"/><path d="M75.03 101.76L85.14 57.90L85.89 58.61L86.34 59.03Z" fill="url(#w196)"/><path d="M75.03 101.76L85.89 58.61L86.64 59.32L87.09 59.74Z" fill="url(#w197)"/><path d="M75.03 101.76L86.64 59.32L87.39 60.03L87.84 60.45Z" fill="url(#w198)"/><path d="M75.03 101.76L87.39 60.03L88.14 60.74L88.59 61.16Z" fill="url(#w199)"/><path d="M75.03 101.76L88.14 60.74L88.89 61.45L89.33 61.87Z" fill="url(#w200)"/><path d="M75.03 101.76L88.89 61.45L89.63 62.16L90.08 62.58Z" fill="url(#w201)"/><path d="M75.03 101.76L89.63 62.16L90.38 62.87L90.82 63.29Z" fill="url(#w202)"/><path d="M75.03 101.76L90.38 62.87L91.12 63.57L91.56 64.00Z" fill="url(#w203)"/><path d="M75.03 101.76L91.12 63.57L91.86 64.28L92.30 64.70Z" fill="url(#w204)"/><path d="M75.03 101.76L91.86 64.28L92.60 64.99L93.04 65.41Z" fill="url(#w205)"/><path d="M75.03 101.76L92.60 64.99L93.33 65.69L93.78 66.12Z" fill="url(#w206)"/><path d="M75.03 101.76L93.33 65.69L94.07 66.40L94.51 66.83Z" fill="url(#w207)"/><path d="M75.03 101.76L94.07 66.40L94.81 67.11L95.25 67.54Z" fill="url(#w208)"/><path d="M75.03 101.76L94.81 67.11L95.54 67.82L95.99 68.25Z" fill="url(#w209)"/><path d="M75.03 101.76L95.54 67.82L96.28 68.53L96.72 68.96Z" fill="url(#w210)"/><path d="M75.03 101.76L96.28 68.53L97.01 69.24L97.45 69.67Z" fill="url(#w211)"/><path d="M75.03 101.76L97.01 69.24L97.74 69.95L98.18 70.37Z" fill="url(#w212)"/><path d="M75.03 101.76L97.74 69.95L98.46 70.66L98.90 71.08Z" fill="url(#w213)"/><path d="M75.03 101.76L98.46 70.66L99.19 71.36L99.62 71.78Z" fill="url(#w214)"/><path d="M75.03 101.76L99.19 71.36L99.91 72.06L100.34 72.48Z" fill="url(#w215)"/><path d="M75.03 101.76L99.91 72.06L100.62 72.77L101.05 73.18Z" fill="url(#w216)"/><path d="M75.03 101.76L100.62 72.77L101.33 73.46L101.75 73.88Z" fill="url(#w217)"/><path d="M75.03 101.76L101.33 73.46L102.04 74.16L102.45 74.57Z" fill="url(#w218)"/><path d="M75.03 101.76L102.04 74.16L102.73 74.84L103.15 75.25Z" fill="url(#w219)"/><path d="M75.03 101.76L102.73 74.84L103.43 75.53L103.84 75.93Z" fill="url(#w220)"/><path d="M75.03 101.76L103.43 75.53L104.11 76.21L104.53 76.61Z" fill="url(#w221)"/><path d="M75.03 101.76L104.11 76.21L104.80 76.89L105.21 77.29Z" fill="url(#w222)"/><path d="M75.03 101.76L104.80 76.89L105.49 77.56L105.89 77.97Z" fill="url(#w223)"/><path d="M75.03 101.76L105.49 77.56L106.17 78.24L106.57 78.64Z" fill="url(#w224)"/><path d="M75.03 101.76L106.17 78.24L106.84 78.91L107.25 79.32Z" fill="url(#w225)"/><path d="M75.03 101.76L106.84 78.91L107.52 79.58L107.92 79.98Z" fill="url(#w226)"/><path d="M75.03 101.76L107.52 79.58L108.18 80.25L108.58 80.65Z" fill="url(#w227)"/><path d="M75.03 101.76L108.18 80.25L108.85 80.91L109.24 81.31Z" fill="url(#w228)"/><path d="M75.03 101.76L108.85 80.91L109.50 81.57L109.89 81.96Z" fill="url(#w229)"/><path d="M75.03 101.76L109.50 81.57L110.15 82.22L110.54 82.60Z" fill="url(#w230)"/><path d="M75.03 101.76L110.15 82.22L110.79 82.86L111.17 83.25Z" fill="url(#w231)"/><path d="M75.03 101.76L110.79 82.86L111.43 83.50L111.80 83.88Z" fill="url(#w232)"/><path d="M75.03 101.76L111.43 83.50L112.05 84.13L112.42 84.50Z" fill="url(#w233)"/><path d="M75.03 101.76L112.05 84.13L112.67 84.75L113.03 85.11Z" fill="url(#w234)"/><path d="M75.03 101.76L112.67 84.75L113.27 85.36L113.63 85.72Z" fill="url(#w235)"/><path d="M75.03 101.76L113.27 85.36L113.87 85.96L114.22 86.32Z" fill="url(#w236)"/><path d="M75.03 101.76L113.87 85.96L114.46 86.55L114.81 86.91Z" fill="url(#w237)"/><path d="M75.03 101.76L114.46 86.55L115.04 87.14L115.72 87.84Z" fill="url(#w238)"/><path d="M75.03 101.76L115.04 87.14L116.18 88.30L116.85 88.98Z" fill="url(#w239)"/><path d="M75.03 101.76L116.18 88.30L117.29 89.43L117.94 90.09Z" fill="url(#w240)"/><path d="M75.03 101.76L117.29 89.43L118.37 90.53L119.00 91.17Z" fill="url(#w241)"/><path d="M75.03 101.76L118.37 90.53L119.42 91.59L120.03 92.21Z" fill="url(#w242)"/><path d="M75.03 101.76L119.42 91.59L120.44 92.62L121.02 93.22Z" fill="url(#w243)"/><path d="M75.03 101.76L120.44 92.62L121.42 93.62L121.98 94.19Z" fill="url(#w244)"/><path d="M75.03 101.76L121.42 93.62L122.36 94.57L122.90 95.13Z" fill="url(#w245)"/><path d="M75.03 101.76L122.36 94.57L123.26 95.49L123.79 96.02Z" fill="url(#w246)"/><path d="M75.03 101.76L123.26 95.49L124.13 96.37L124.64 96.88Z" fill="url(#w247)"/><path d="M75.03 101.76L124.13 96.37L124.97 97.22L125.46 97.71Z" fill="url(#w248)"/><path d="M75.03 101.76L124.97 97.22L125.78 98.03L126.24 98.50Z" fill="url(#w249)"/><path d="M75.03 101.76L125.78 98.03L126.55 98.81L126.99 99.25Z" fill="url(#w250)"/><path d="M75.03 101.76L126.55 98.81L127.29 99.55L127.71 99.98Z" fill="url(#w251)"/><path d="M75.03 101.76L127.29 99.55L127.99 100.26L128.39 100.67Z" fill="url(#w252)"/><path d="M75.03 101.76L127.99 100.26L128.66 100.94L129.04 101.32Z" fill="url(#w253)"/><path d="M75.03 101.76L128.66 100.94L129.29 101.58L129.65 101.94Z" fill="url(#w254)"/><path d="M75.03 101.76L129.29 101.58L129.88 102.18L130.53 102.84Z" fill="url(#w255)"/><path d="M75.03 101.76L129.88 102.18L130.97 103.28L131.55 103.87Z" fill="url(#w256)"/><path d="M75.03 101.76L130.97 103.28L131.94 104.26L132.47 104.80Z" fill="url(#w257)"/><path d="M75.03 101.76L131.94 104.26L132.82 105.16L133.29 105.64Z" fill="url(#w258)"/><path d="M75.03 101.76L132.82 105.16L133.61 105.96L134.02 106.37Z" fill="url(#w259)"/><path d="M75.03 101.76L133.61 105.96L134.29 106.65L134.66 107.01Z" fill="url(#w260)"/><path d="M75.03 101.76L134.29 106.65L134.90 107.26L135.41 107.76Z" fill="url(#w261)"/><path d="M75.03 101.76L134.90 107.26L135.74 108.10L136.18 108.54Z" fill="url(#w262)"/><path d="M75.03 101.76L135.74 108.10L136.46 108.83L136.83 109.21Z" fill="url(#w263)"/><path d="M75.03 101.76L136.46 108.83L137.08 109.46L137.47 109.85Z" fill="url(#w264)"/><path d="M75.03 101.76L137.08 109.46L137.73 110.10L138.13 110.50Z" fill="url(#w265)"/><path d="M75.03 101.76L137.73 110.10L138.40 110.77L138.74 111.12Z" fill="url(#w266)"/><path d="M75.03 101.76L138.40 110.77L138.97 111.34L139.31 111.70Z" fill="url(#w267)"/><path d="M75.03 101.76L138.97 111.34L139.54 111.93L138.83 112.49Z" fill="url(#w268)"/><path d="M75.03 101.76L139.54 111.93L138.36 112.87L137.49 113.28Z" fill="url(#w269)"/><path d="M75.03 101.76L138.36 112.87L136.91 113.56L136.04 113.97Z" fill="url(#w270)"/><path d="M75.03 101.76L136.91 113.56L135.47 114.24L134.60 114.65Z" fill="url(#w271)"/><path d="M75.03 101.76L135.47 114.24L134.02 114.92L133.15 115.33Z" fill="url(#w272)"/><path d="M75.03 101.76L134.02 114.92L132.57 115.61L131.70 116.02Z" fill="url(#w273)"/><path d="M75.03 101.76L132.57 115.61L131.12 116.29L130.26 116.71Z" fill="url(#w274)"/><path d="M75.03 101.76L131.12 116.29L129.68 116.98L128.81 117.39Z" fill="url(#w275)"/><path d="M75.03 101.76L129.68 116.98L128.23 117.67L127.36 118.08Z" fill="url(#w276)"/><path d="M75.03 101.76L128.23 117.67L126.78 118.36L125.91 118.77Z" fill="url(#w277)"/><path d="M75.03 101.76L126.78 118.36L125.32 119.05L124.45 119.47Z" fill="url(#w278)"/><path d="M75.03 101.76L125.32 119.05L123.87 119.74L123.00 120.16Z" fill="url(#w279)"/><path d="M75.03 101.76L123.87 119.74L122.42 120.43L121.55 120.85Z" fill="url(#w280)"/><path d="M75.03 101.76L122.42 120.43L120.96 121.13L120.09 121.55Z" fill="url(#w281)"/><path d="M75.03 101.76L120.96 121.13L119.51 121.82L118.63 122.24Z" fill="url(#w282)"/><path d="M75.03 101.76L119.51 121.82L118.05 122.52L117.17 122.94Z" fill="url(#w283)"/><path d="M75.03 101.76L118.05 122.52L116.59 123.22L115.71 123.64Z" fill="url(#w284)"/><path d="M75.03 101.76L116.59 123.22L115.13 123.92L114.25 124.34Z" fill="url(#w285)"/><path d="M75.03 101.76L115.13 123.92L113.66 124.62L112.79 125.04Z" fill="url(#w286)"/><path d="M75.03 101.76L113.66 124.62L112.20 125.32L111.32 125.74Z" fill="url(#w287)"/><path d="M75.03 101.76L112.20 125.32L110.73 126.02L109.85 126.44Z" fill="url(#w288)"/><path d="M75.03 101.76L110.73 126.02L109.26 126.72L108.38 127.14Z" fill="url(#w289)"/><path d="M75.03 101.76L109.26 126.72L107.79 127.42L106.90 127.84Z" fill="url(#w290)"/><path d="M75.03 101.76L107.79 127.42L106.31 128.12L105.43 128.55Z" fill="url(#w291)"/><path d="M75.03 101.76L106.31 128.12L104.83 128.83L103.95 129.25Z" fill="url(#w292)"/><path d="M75.03 101.76L104.83 128.83L103.35 129.53L102.46 129.95Z" fill="url(#w293)"/><path d="M75.03 101.76L103.35 129.53L101.87 130.23L100.98 130.65Z" fill="url(#w294)"/><path d="M75.03 101.76L101.87 130.23L100.38 130.93L99.49 131.35Z" fill="url(#w295)"/><path d="M75.03 101.76L100.38 130.93L98.89 131.63L98.00 132.05Z" fill="url(#w296)"/><path d="M75.03 101.76L98.89 131.63L97.40 132.33L96.51 132.75Z" fill="url(#w297)"/><path d="M75.03 101.76L97.40 132.33L95.91 133.03L95.01 133.45Z" fill="url(#w298)"/><path d="M75.03 101.76L95.91 133.03L94.41 133.73L93.51 134.14Z" fill="url(#w299)"/><path d="M75.03 101.76L94.41 133.73L92.91 134.42L92.01 134.84Z" fill="url(#w300)"/><path d="M75.03 101.76L92.91 134.42L91.41 135.11L90.51 135.53Z" fill="url(#w301)"/><path d="M75.03 101.76L91.41 135.11L89.91 135.80L89.01 136.22Z" fill="url(#w302)"/><path d="M75.03 101.76L89.91 135.80L88.41 136.49L87.50 136.90Z" fill="url(#w303)"/><path d="M75.03 101.76L88.41 136.49L86.90 137.17L86.00 137.58Z" fill="url(#w304)"/><path d="M75.03 101.76L86.90 137.17L85.40 137.85L84.50 138.26Z" fill="url(#w305)"/><path d="M75.03 101.76L85.40 137.85L83.89 138.53L82.99 138.94Z" fill="url(#w306)"/><path d="M75.03 101.76L83.89 138.53L82.39 139.21L81.49 139.61Z" fill="url(#w307)"/><path d="M75.03 101.76L82.39 139.21L80.89 139.88L79.99 140.28Z" fill="url(#w308)"/><path d="M75.03 101.76L80.89 139.88L79.39 140.55L78.49 140.95Z" fill="url(#w309)"/><path d="M75.03 101.76L79.39 140.55L77.88 141.21L76.99 141.61Z" fill="url(#w310)"/><path d="M75.03 101.76L77.88 141.21L76.39 141.88L75.49 142.27Z" fill="url(#w311)"/><path d="M75.03 101.76L76.39 141.88L74.89 142.54L73.99 142.94Z" fill="url(#w312)"/><path d="M75.03 101.76L74.89 142.54L73.39 143.20L72.50 143.59Z" fill="url(#w313)"/><path d="M75.03 101.76L73.39 143.20L71.90 143.86L71.00 144.25Z" fill="url(#w314)"/><path d="M75.03 101.76L71.90 143.86L70.41 144.51L69.51 144.91Z" fill="url(#w315)"/><path d="M75.03 101.76L70.41 144.51L68.92 145.17L68.03 145.56Z" fill="url(#w316)"/><path d="M75.03 101.76L68.92 145.17L67.43 145.82L66.54 146.21Z" fill="url(#w317)"/><path d="M75.03 101.76L67.43 145.82L65.95 146.48L65.06 146.87Z" fill="url(#w318)"/><path d="M75.03 101.76L65.95 146.48L64.46 147.13L63.57 147.52Z" fill="url(#w319)"/><path d="M75.03 101.76L64.46 147.13L62.98 147.78L62.09 148.17Z" fill="url(#w320)"/><path d="M75.03 101.76L62.98 147.78L61.50 148.43L60.62 148.82Z" fill="url(#w321)"/><path d="M75.03 101.76L61.50 148.43L60.02 149.08L59.14 149.47Z" fill="url(#w322)"/><path d="M75.03 101.76L60.02 149.08L58.55 149.73L57.66 150.12Z" fill="url(#w323)"/><path d="M75.03 101.76L58.55 149.73L57.08 150.38L56.19 150.77Z" fill="url(#w324)"/><path d="M75.03 101.76L57.08 150.38L55.60 151.03L54.72 151.42Z" fill="url(#w325)"/><path d="M75.03 101.76L55.60 151.03L54.13 151.68L53.25 152.07Z" fill="url(#w326)"/><path d="M75.03 101.76L54.13 151.68L52.66 152.33L51.78 152.72Z" fill="url(#w327)"/><path d="M75.03 101.76L52.66 152.33L51.20 152.98L50.32 153.37Z" fill="url(#w328)"/><path d="M75.03 101.76L51.20 152.98L49.73 153.63L48.85 154.02Z" fill="url(#w329)"/><path d="M75.03 101.76L49.73 153.63L48.26 154.28L47.39 154.67Z" fill="url(#w330)"/><path d="M75.03 101.76L48.26 154.28L46.80 154.92L46.32 154.77Z" fill="url(#w331)"/></g></svg>
<svg class="abs" style="left:0;top:0;overflow:visible" width="206" height="165" viewBox="0 0 206 165" font-family="Liberation Sans, sans-serif"><circle cx="42.6" cy="149.6" r="2.1" fill="#000"/><circle cx="39.4" cy="145.2" r="2.1" fill="#000"/><circle cx="34.1" cy="133.2" r="2.1" fill="#000"/><circle cx="26.7" cy="107.2" r="2.1" fill="#000"/><circle cx="20.6" cy="68.3" r="2.1" fill="#000"/><circle cx="21.6" cy="34.4" r="2.1" fill="#000"/><circle cx="31.3" cy="21.0" r="2.1" fill="#000"/><circle cx="44.4" cy="25.5" r="2.1" fill="#000"/><circle cx="56.5" cy="33.7" r="2.1" fill="#000"/><circle cx="68.2" cy="43.6" r="2.1" fill="#000"/><circle cx="79.7" cy="54.5" r="2.1" fill="#000"/><circle cx="91.2" cy="65.6" r="2.1" fill="#000"/><circle cx="102.3" cy="76.5" r="2.1" fill="#000"/><circle cx="112.5" cy="86.5" r="2.1" fill="#000"/><circle cx="120.9" cy="94.8" r="2.1" fill="#000"/><circle cx="127.2" cy="101.0" r="2.1" fill="#000"/><circle cx="131.3" cy="105.1" r="2.1" fill="#000"/><circle cx="135.8" cy="109.5" r="2.1" fill="#000"/><circle cx="138.3" cy="112.0" r="2.1" fill="#000"/><circle cx="47.5" cy="153.6" r="2.1" fill="#000"/><text x="34.1" y="22.0" font-size="5.5" fill="#1a1a1a" stroke="#1a1a1a" stroke-width="0.2">520</text><text x="47.2" y="26.5" font-size="5.5" fill="#1a1a1a" stroke="#1a1a1a" stroke-width="0.2">530</text><text x="59.3" y="34.7" font-size="5.5" fill="#1a1a1a" stroke="#1a1a1a" stroke-width="0.2">540</text><text x="71.0" y="44.6" font-size="5.5" fill="#1a1a1a" stroke="#1a1a1a" stroke-width="0.2">550</text><text x="82.5" y="55.5" font-size="5.5" fill="#1a1a1a" stroke="#1a1a1a" stroke-width="0.2">560</text><text x="94.0" y="66.6" font-size="5.5" fill="#1a1a1a" stroke="#1a1a1a" stroke-width="0.2">570</text><text x="105.1" y="77.5" font-size="5.5" fill="#1a1a1a" stroke="#1a1a1a" stroke-width="0.2">580</text><text x="115.3" y="87.5" font-size="5.5" fill="#1a1a1a" stroke="#1a1a1a" stroke-width="0.2">590</text><text x="123.7" y="95.8" font-size="5.5" fill="#1a1a1a" stroke="#1a1a1a" stroke-width="0.2">600</text><text x="130.0" y="102.0" font-size="5.5" fill="#1a1a1a" stroke="#1a1a1a" stroke-width="0.2">610</text><text x="134.1" y="106.1" font-size="5.5" fill="#1a1a1a" stroke="#1a1a1a" stroke-width="0.2">620</text><text x="138.6" y="110.5" font-size="5.5" fill="#1a1a1a" stroke="#1a1a1a" stroke-width="0.2">640</text><text x="137.5" y="118.0" font-size="5.5" fill="#1a1a1a" stroke="#1a1a1a" stroke-width="0.2">700-780</text><text x="19.6" y="35.6" font-size="5.5" fill="#1a1a1a" stroke="#1a1a1a" stroke-width="0.2" text-anchor="end">510</text><text x="18.6" y="69.5" font-size="5.5" fill="#1a1a1a" stroke="#1a1a1a" stroke-width="0.2" text-anchor="end">500</text><text x="24.7" y="112.2" font-size="5.5" fill="#1a1a1a" stroke="#1a1a1a" stroke-width="0.2" text-anchor="end">490</text><text x="32.1" y="134.4" font-size="5.5" fill="#1a1a1a" stroke="#1a1a1a" stroke-width="0.2" text-anchor="end">480</text><text x="37.4" y="146.7" font-size="5.5" fill="#1a1a1a" stroke="#1a1a1a" stroke-width="0.2" text-anchor="end">470</text><text x="40.6" y="151.6" font-size="5.5" fill="#1a1a1a" stroke="#1a1a1a" stroke-width="0.2" text-anchor="end">460</text><text x="49.3" y="155.9" font-size="5.5" fill="#1a1a1a" stroke="#1a1a1a" stroke-width="0.2">380-430</text><text x="35.1" y="161.1" font-size="6.6" fill="#222" text-anchor="middle">0.1</text><text x="51.3" y="161.1" font-size="6.6" fill="#222" text-anchor="middle">0.2</text><text x="67.5" y="161.1" font-size="6.6" fill="#222" text-anchor="middle">0.3</text><text x="83.7" y="161.1" font-size="6.6" fill="#222" text-anchor="middle">0.4</text><text x="99.9" y="161.1" font-size="6.6" fill="#222" text-anchor="middle">0.5</text><text x="116.1" y="161.1" font-size="6.6" fill="#222" text-anchor="middle">0.6</text><text x="132.3" y="161.1" font-size="6.6" fill="#222" text-anchor="middle">0.7</text><text x="144.8" y="160.9" font-size="6.6" fill="#222" text-anchor="middle">x</text><text x="17.8" y="156.6" font-size="6.6" fill="#222" text-anchor="end">0.0</text><text x="17.8" y="140.6" font-size="6.6" fill="#222" text-anchor="end">0.1</text><text x="17.8" y="124.6" font-size="6.6" fill="#222" text-anchor="end">0.2</text><text x="17.8" y="108.6" font-size="6.6" fill="#222" text-anchor="end">0.3</text><text x="17.8" y="92.6" font-size="6.6" fill="#222" text-anchor="end">0.4</text><text x="17.8" y="60.6" font-size="6.6" fill="#222" text-anchor="end">0.6</text><text x="17.8" y="44.6" font-size="6.6" fill="#222" text-anchor="end">0.7</text><text x="17.8" y="28.6" font-size="6.6" fill="#222" text-anchor="end">0.8</text><text x="17.8" y="76.9" font-size="6.6" fill="#222" text-anchor="end">0.5</text><text x="17.8" y="15.4" font-size="7" fill="#222" text-anchor="end">y</text><polygon points="32.6,130.9 47.2,122.7 53.3,128.8 41.5,148.3" fill="none" stroke="#111" stroke-width="0.9"/><path d="M98.1 84.5L104.7 91.1M98.1 91.1L104.7 84.5" stroke="#8c8470" stroke-width="0.9" fill="none"/><path d="M64.8 100.4L71.4 107.0M64.8 107.0L71.4 100.4" stroke="#3030c0" stroke-width="0.9" fill="none"/><path d="M175.5 10.7V154.0" stroke="#111" stroke-width="1.1"/><path d="M172.5 10.7H181.5" stroke="#111" stroke-width="1"/><path d="M175.5 154.3H181.5" stroke="#111" stroke-width="1"/><path d="M172.5 139.7H175.5M172.5 125.3H175.5M172.5 111.0H175.5M172.5 96.7H175.5M172.5 82.4H175.5M172.5 68.0H175.5M172.5 53.7H175.5M172.5 39.4H175.5M172.5 25.0H175.5" stroke="#555" stroke-width="0.8"/><text x="171.0" y="156.3" font-size="6.600" fill="#222" text-anchor="end">0.0</text><text x="171.0" y="142.0" font-size="6.600" fill="#222" text-anchor="end">0.1</text><text x="171.0" y="127.6" font-size="6.600" fill="#222" text-anchor="end">0.2</text><text x="171.0" y="113.3" font-size="6.600" fill="#222" text-anchor="end">0.3</text><text x="171.0" y="99.0" font-size="6.600" fill="#222" text-anchor="end">0.4</text><text x="171.0" y="84.7" font-size="6.600" fill="#222" text-anchor="end">0.5</text><text x="171.0" y="70.3" font-size="6.600" fill="#222" text-anchor="end">0.6</text><text x="171.0" y="56.0" font-size="6.600" fill="#222" text-anchor="end">0.7</text><text x="171.0" y="41.7" font-size="6.600" fill="#222" text-anchor="end">0.8</text><text x="171.0" y="27.3" font-size="6.600" fill="#222" text-anchor="end">0.9</text><text x="171.0" y="13.0" font-size="7" fill="#222" text-anchor="end">β</text><path d="M179.3 94.4H193.3M186.3 87.4V101.4" stroke="#8a8a8a" stroke-width="0.9" fill="none"/><path d="M179.3 88.2H193.3M186.3 81.2V95.2" stroke="#2828d8" stroke-width="1.2" fill="none"/><path d="M169.3 139.4H181.5" stroke="#e01818" stroke-width="1.1"/><path d="M172.4 136.4L180.0 142.4M172.4 142.4L180.0 136.4" stroke="#e01818" stroke-width="0.800" fill="none"/><path d="M171.8 153.1H181.5" stroke="#e01818" stroke-width="1.800"/><path d="M172.0 152.0L177.0 156.5M172.0 156.5L177.0 152.0" stroke="#e01818" stroke-width="0.800" fill="none"/></svg>
</div>
<div class="abs tbl" style="left:210px;top:63px;width:392px;height:181px">
<div class="hd"><div class="c" style="left:3px">标样</div><div class="c" style="left:50px">名称</div><div class="c" style="left:111px">色品坐标</div><div class="c" style="left:343px">亮度因数</div></div>
<div class="vl" style="left:46px"></div>
<div class="vl" style="left:108px"></div>
<div class="vl" style="left:340px"></div>
<div class="r" style="top:18.80px"><div class="c" style="left:0">1</div><div class="c" style="left:46.300px">白色</div><div class="c" style="left:108px">(0.350, 0.360), (0.305, 0.315), (0.295, 0.325), (0.340, 0.370)</div><div class="c" style="left:340px"><span style="margin-right:3.6px">≥</span>0.270</div></div>
<div class="r" style="top:32.70px"><div class="c" style="left:0">2</div><div class="c" style="left:46.300px">黄色</div><div class="c" style="left:108px">(0.545, 0.454), (0.494, 0.426), (0.444, 0.476), (0.481, 0.518)</div><div class="c" style="left:340px">0.150 ~ 0.450</div></div>
<div class="r" style="top:46.60px"><div class="c" style="left:0">3</div><div class="c" style="left:46.300px">橙色</div><div class="c" style="left:108px">(0.558, 0.352), (0.636, 0.364), (0.570, 0.429), (0.506, 0.404)</div><div class="c" style="left:340px">0.100 ~ 0.300</div></div>
<div class="r" style="top:60.50px"><div class="c" style="left:0">4</div><div class="c" style="left:46.300px">红色</div><div class="c" style="left:108px">(0.735, 0.265), (0.681, 0.239), (0.579, 0.341), (0.655, 0.345)</div><div class="c" style="left:340px">0.020 ~ 0.150</div></div>
<div class="r" style="top:74.40px"><div class="c" style="left:0">5</div><div class="c" style="left:46.300px">绿色</div><div class="c" style="left:108px">(0.201, 0.776), (0.285, 0.441), (0.170, 0.364), (0.026, 0.399)</div><div class="c" style="left:340px">0.030 ~ 0.120</div></div>
<div class="r sel" style="top:88.30px"><div class="c" style="left:0"><span style="margin-right:5px">*</span>6</div><div class="c" style="left:46.300px">蓝色</div><div class="c" style="left:108px">(0.082, 0.147), (0.172, 0.198), (0.210, 0.160), (0.137, 0.038)</div><div class="c" style="left:340px">0.010 ~ 0.100</div></div>
<div class="r" style="top:102.20px"><div class="c" style="left:0">7</div><div class="c" style="left:46.300px">棕色</div><div class="c" style="left:108px">(0.430, 0.340), (0.610, 0.390), (0.550, 0.450), (0.430, 0.390)</div><div class="c" style="left:340px">0.010 ~ 0.090</div></div>
<div class="r" style="top:116.10px"><div class="c" style="left:0">8</div><div class="c" style="left:46.300px">灰色</div><div class="c" style="left:108px">(0.305, 0.315), (0.335, 0.345), (0.325, 0.355), (0.295, 0.325)</div><div class="c" style="left:340px">0.120 ~ 0.180</div></div>
<div class="r" style="top:130.00px"><div class="c" style="left:0">9</div><div class="c" style="left:46.300px">荧光黄绿色</div><div class="c" style="left:108px">(0.460, 0.540), (0.428, 0.496), (0.369, 0.546), (0.387, 0.610)</div><div class="c" style="left:340px"><span style="margin-right:3.6px">≥</span>0.600</div></div>
<div class="r" style="top:143.90px"><div class="c" style="left:0">10</div><div class="c" style="left:46.300px">荧光黄色</div><div class="c" style="left:108px">(0.557, 0.442), (0.512, 0.421), (0.446, 0.483), (0.479, 0.520)</div><div class="c" style="left:340px"><span style="margin-right:3.6px">≥</span>0.400</div></div>
<div class="r" style="top:157.80px"><div class="c" style="left:0">11</div><div class="c" style="left:46.300px">荧光橙色</div><div class="c" style="left:108px">(0.645, 0.355), (0.595, 0.351), (0.535, 0.400), (0.583, 0.416)</div><div class="c" style="left:340px"><span style="margin-right:3.6px">≥</span>0.200</div></div>
</div>
<div class="abs" style="left:601px;top:150px;width:1px;height:19px;background:#e8606c"></div>
<div class="abs tbl" style="left:210px;top:249px;width:392px;height:109px">
<div class="hd"><div class="c" style="left:3.0px">试样</div><div class="c" style="left:50.0px">名称</div><div class="c" style="left:99.3px">X</div><div class="c" style="left:137.9px">Y</div><div class="c" style="left:176.5px">Z</div><div class="c" style="left:215.1px">x</div><div class="c" style="left:253.7px">y</div><div class="c" style="left:292.3px">β</div><div class="c" style="left:330.9px">判定结果</div><div class="c" style="left:381.5px">料</div></div>
<div class="vl" style="left:47.0px"></div>
<div class="vl" style="left:96.3px"></div>
<div class="vl" style="left:134.9px"></div>
<div class="vl" style="left:173.5px"></div>
<div class="vl" style="left:212.1px"></div>
<div class="vl" style="left:250.7px"></div>
<div class="vl" style="left:289.3px"></div>
<div class="vl" style="left:327.9px"></div>
<div class="vl" style="left:378.5px"></div>
<div class="r" style="top:18.10px"><div class="c" style="left:0.0px">1</div><div class="c" style="left:47.0px">Sample001</div><div class="c" style="left:96.3px">50.764</div><div class="c" style="left:134.9px">41.640</div><div class="c" style="left:173.5px">7.741</div><div class="c" style="left:212.1px">0.507</div><div class="c" style="left:250.7px">0.416</div><div class="c" style="left:289.3px">0.416</div><div class="c" style="left:327.9px">不良</div></div>
<div class="r" style="top:31.95px"><div class="c" style="left:0.0px"><span style="margin-right:5px">*</span>2</div><div class="c" style="left:47.0px">Sample002</div><div class="c" style="left:96.3px">43.602</div><div class="c" style="left:134.9px">45.934</div><div class="c" style="left:173.5px">55.155</div><div class="c" style="left:212.1px">0.301</div><div class="c" style="left:250.7px">0.317</div><div class="c" style="left:289.3px">0.459</div><div class="c" style="left:327.9px">不良</div></div>
<div class="r" style="top:45.80px"></div>
<div class="r" style="top:59.65px"></div>
<div class="r" style="top:73.50px"></div>
<div class="r" style="top:87.35px"></div>
<div class="r" style="top:101.20px"></div>
</div>
<div id="bot" class="abs">
<div class="sp" style="left:3px;top:23px;color:#222;font-size:7.800px;letter-spacing:0">λ(nm)</div><div class="sp" style="left:69px;top:23px;color:#222">试样</div>
<div class="sp w b" style="left:3px;top:31.70px">400</div><div class="sp b" style="left:69px;top:31.70px">41.465</div>
<div class="sp w" style="left:3px;top:40.33px">410</div><div class="sp b" style="left:69px;top:40.33px">47.160</div>
<div class="sp w" style="left:3px;top:48.96px">420</div><div class="sp b" style="left:69px;top:48.96px">47.263</div>
<div class="sp w" style="left:3px;top:57.59px">430</div><div class="sp b" style="left:69px;top:57.59px">46.666</div>
<div class="sp w" style="left:3px;top:66.22px">440</div><div class="sp b" style="left:69px;top:66.22px">49.572</div>
<div class="sp w" style="left:3px;top:74.85px">450</div><div class="sp b" style="left:69px;top:74.85px">50.524</div>
<div class="sp w" style="left:3px;top:83.48px">460</div><div class="sp b" style="left:69px;top:83.48px">52.501</div>
<div class="sp w" style="left:3px;top:92.11px">470</div><div class="sp b" style="left:69px;top:92.11px">53.560</div>
<div class="sp w" style="left:3px;top:100.74px">480</div><div class="sp b" style="left:69px;top:100.74px">52.394</div>
<div class="sp w" style="left:3px;top:109.37px">490</div><div class="sp b" style="left:69px;top:109.37px">53.322</div>
<div class="sp w b" style="left:3px;top:118.00px">500</div><div class="sp b" style="left:69px;top:118.00px">51.757</div>
<div class="sp w" style="left:3px;top:126.63px">510</div><div class="sp b" style="left:69px;top:126.63px">49.944</div>
<svg class="abs" style="left:-1px;top:-1px" width="392" height="129" viewBox="210 362 392 129" font-family="Liberation Sans, sans-serif"><path d="M407.500 392V491M526.500 392V491M407 392.400H602M407 439.400H602M407 486.400H602" stroke="#111" stroke-width="1" fill="none"/><text x="405.800" y="395.200" font-size="8.300" text-anchor="end" fill="#111">100</text><text x="405.800" y="442.200" font-size="8.300" text-anchor="end" fill="#111">80</text><text x="405.800" y="489.200" font-size="8.300" text-anchor="end" fill="#111">60</text></svg>
</div>
</body></html>
